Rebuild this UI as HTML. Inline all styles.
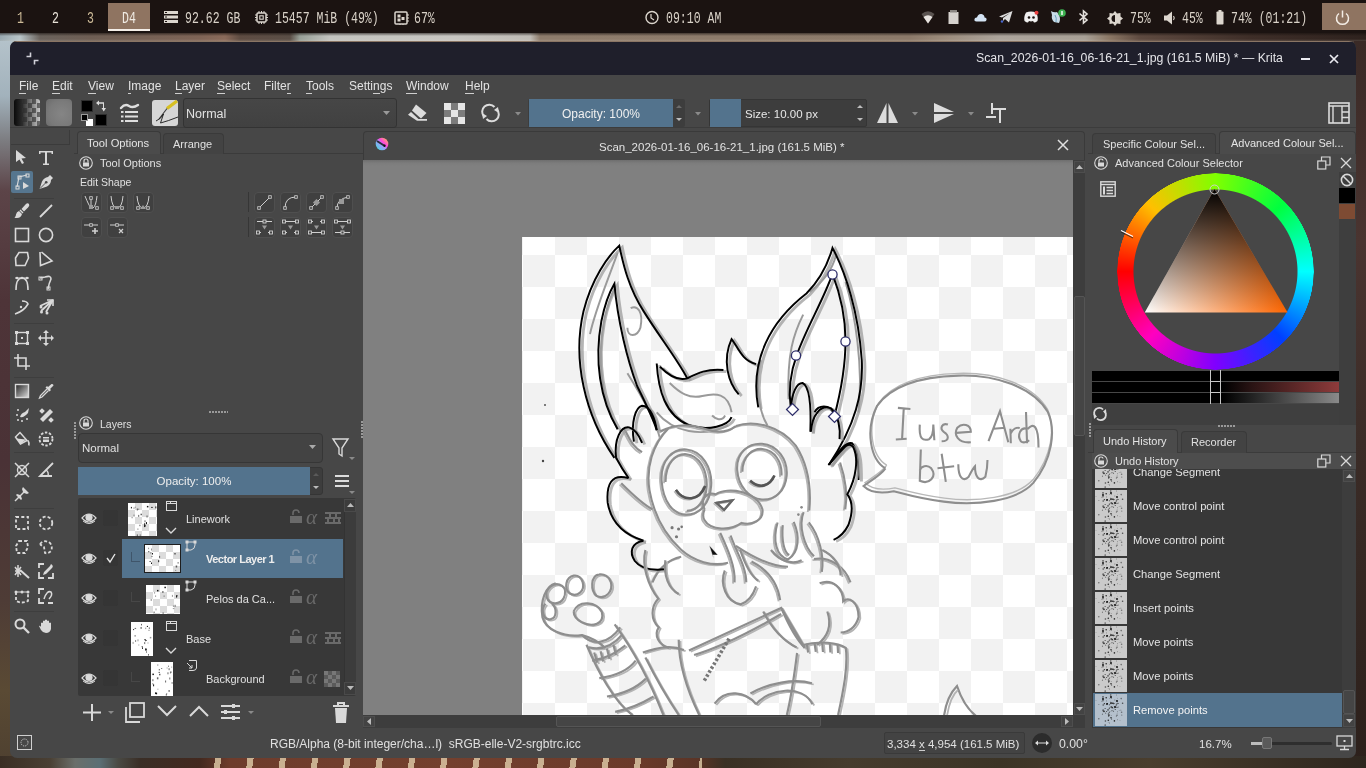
<!DOCTYPE html>
<html><head><meta charset="utf-8"><style>
*{margin:0;padding:0;box-sizing:border-box}
html,body{width:1366px;height:768px;overflow:hidden}
body{position:relative;font-family:"Liberation Sans",sans-serif;background:#2a1f1b;color:#dcdcdc}
.a{position:absolute}
.mono{font-family:"Liberation Mono",monospace}
.tb{position:absolute;top:3px;font-family:"Liberation Mono",monospace;font-size:16px;line-height:33px;color:#d9d2c8;transform-origin:0 50%;transform:scaleX(.72);white-space:nowrap}
.t{position:absolute;white-space:nowrap;will-change:transform;font-size:12px;line-height:14px;color:#dedede}
.menu span{position:absolute;will-change:transform;top:79px;font-size:12px;line-height:14px;color:#e2e2e2}
.menu u{text-decoration:none;border-bottom:1px solid #cfcfcf}
svg{position:absolute;overflow:visible}
</style></head><body>
<!-- wallpaper -->
<div class="a" style="left:0;top:33px;width:1366px;height:10px;background:linear-gradient(180deg,rgba(20,14,12,.6) 0,rgba(20,14,12,0) 3px,rgba(0,0,0,0) 6px,rgba(255,240,220,.15) 8px),linear-gradient(90deg,#98a8b0 0,#b8c4c8 20px,#6a625c 40px,#6e5e54 90px,#7e6456 200px,#8a6a5a 225px,#5e4c42 240px,#5a4e46 290px,#98a098 300px,#c4c4c0 330px,#c8c6c2 455px,#c0bcb6 530px,#8e7c6c 540px,#8c7a6a 910px,#9a8a7a 940px,#aca49c 1000px,#a8a096 1085px,#8a7664 1110px,#5e4a40 1140px,#3e2e28 1250px,#2e221e 1366px)"></div>
<div class="a" style="left:0;top:41px;width:12px;height:727px;background:linear-gradient(180deg,#b4c2ca 0,#a2b2bc 55px,#7c7c80 100px,#5c4448 150px,#4e3438 260px,#4a3236 420px,#4e3c36 560px,#5a4a34 650px,#4e4030 727px)"></div>
<div class="a" style="left:1354px;top:41px;width:12px;height:727px;background:linear-gradient(180deg,#3a2a26 0,#4a3430 200px,#3b2c27 400px,#2c201b 727px)"></div>
<div class="a" style="left:0;top:756px;width:1366px;height:12px;background:linear-gradient(90deg,#3a2e24 0,#4a4034 50px,#6a6e6a 75px,#5a6e74 100px,#4a4a44 118px,#3a2e26 140px,#43291f 200px,#6e3c2c 230px,#74402e 450px,#6a3a2a 640px,#5a3426 700px,#3a3024 725px,#463c2e 850px,#3c3426 1000px,#4a3e2e 1150px,#2e261e 1366px)"></div>
<div class="a" style="left:189px;top:758px;width:513px;height:10px;background:repeating-linear-gradient(98deg,transparent 0,transparent 26px,rgba(225,205,170,.8) 26px,rgba(225,205,170,.8) 32px)"></div>

<!-- top bar -->
<div class="a" style="left:0;top:0;width:1366px;height:33px;background:#1b1311"></div>
<div class="a" style="left:108px;top:3px;width:42px;height:26px;background:#8f7461"></div>
<div class="a" style="left:108px;top:29px;width:42px;height:2px;background:#f4eee8"></div>
<div class="tb" style="left:17px;color:#cdbb98">1</div>
<div class="tb" style="left:52px;color:#e8e2d8">2</div>
<div class="tb" style="left:87px;color:#cdbb98">3</div>
<div class="tb" style="left:122px;color:#f0ebe4">D4</div>
<div class="tb" style="left:185px">92.62 GB</div>
<div class="tb" style="left:275px">15457 MiB (49%)</div>
<div class="tb" style="left:414px">67%</div>
<div class="tb" style="left:666px">09:10 AM</div>
<div class="tb" style="left:1130px">75%</div>
<div class="tb" style="left:1182px">45%</div>
<div class="tb" style="left:1231px">74% (01:21)</div>
<div class="a" style="left:1322px;top:3px;width:44px;height:27px;background:#8f7461"></div>

<!-- window -->
<div class="a" id="win" style="left:10px;top:41px;width:1346px;height:717px;border-radius:7px;background:#474747;overflow:hidden">
  <div class="a" style="left:0;top:0;width:1346px;height:34px;background:#1f1f2b;border-top:1px solid #8a7564"></div>
</div>
<div class="t" style="left:976px;top:51px;font-size:12.3px;color:#e4e4e8">Scan_2026-01-16_06-16-21_1.jpg (161.5 MiB) * — Krita</div>

<!--TOPICONS-->
<svg style="left:164px;top:11px" width="14" height="12" viewBox="0 0 14 12"><rect x="0" y="0" width="14" height="3" fill="#dcd6ce"/><rect x="0" y="4.5" width="14" height="3" fill="#dcd6ce"/><rect x="0" y="9" width="14" height="3" fill="#dcd6ce"/><rect x="1" y="1" width="2" height="1" fill="#1b1311"/><rect x="1" y="5.5" width="2" height="1" fill="#1b1311"/><rect x="1" y="10" width="2" height="1" fill="#1b1311"/></svg>
<svg style="left:255px;top:11px" width="13" height="13" viewBox="0 0 13 13"><rect x="2" y="2" width="9" height="9" rx="1" fill="none" stroke="#dcd6ce" stroke-width="1.5"/><rect x="4.8" y="4.8" width="3.4" height="3.4" fill="none" stroke="#dcd6ce" stroke-width="1.1"/><path d="M4 0 V2 M6.5 0 V2 M9 0 V2 M4 11 V13 M6.5 11 V13 M9 11 V13 M0 4 H2 M0 6.5 H2 M0 9 H2 M11 4 H13 M11 6.5 H13 M11 9 H13" stroke="#dcd6ce" stroke-width="1"/></svg>
<svg style="left:394px;top:11px" width="15" height="14" viewBox="0 0 15 14"><rect x="1" y="1" width="12" height="12" rx="1" fill="none" stroke="#dcd6ce" stroke-width="1.5"/><rect x="3.5" y="3.5" width="3" height="3" fill="#dcd6ce"/><rect x="3.5" y="7.5" width="3" height="3" fill="#dcd6ce"/><rect x="7.5" y="6" width="3" height="3" fill="#dcd6ce"/><path d="M13 4 H15 M13 7 H15 M13 10 H15 M6 13 V14 M9 13 V14" stroke="#dcd6ce" stroke-width="1"/></svg>
<svg style="left:645px;top:10px" width="14" height="15" viewBox="0 0 14 15"><circle cx="7" cy="7.5" r="6" fill="none" stroke="#dcd6ce" stroke-width="1.4"/><path d="M6 4 V8 L9 10" fill="none" stroke="#dcd6ce" stroke-width="1.2"/></svg>
<svg style="left:921px;top:10px" width="14" height="14" viewBox="0 0 14 14"><path d="M7 13.5 L0.5 4 Q7 -1.5 13.5 4 Z" fill="#5a5350"/><path d="M7 13.5 L2.5 7 Q7 3.5 11.5 7 Z" fill="#e8e4e0"/></svg>
<svg style="left:948px;top:10px" width="11" height="14" viewBox="0 0 11 14"><rect x="0.5" y="2" width="10" height="12" fill="#d6d2ce"/><rect x="2" y="0" width="7" height="2.5" fill="#8a8682"/></svg>
<svg style="left:974px;top:13px" width="13" height="9" viewBox="0 0 13 9"><path d="M2.5 8.5 Q0 8.5 0.5 6 Q1 4 3 4.5 Q4 0.5 7.5 1 Q10.5 1.5 10.5 4.5 Q13 4.5 12.5 7 Q12 8.5 10.5 8.5 Z" fill="#d4e4f4"/></svg>
<svg style="left:999px;top:11px" width="14" height="12" viewBox="0 0 14 12"><path d="M0 5.5 L13.5 0 L10 11.5 L6 8 L4 10 L4 7 L11 2 L3 6.5 Z" fill="#dcdcdc"/><circle cx="3" cy="10.5" r="1.2" fill="#4a6ad0"/></svg>
<svg style="left:1024px;top:11px" width="15" height="12" viewBox="0 0 15 12"><path d="M2 1.5 Q7 -0.5 12 1.5 Q14.5 6 13.5 10 Q11.5 11.5 10 11.5 L9 10 Q7 10.8 5 10 L4 11.5 Q2.5 11.5 0.5 10 Q-0.5 6 2 1.5Z" fill="#f0f0f0"/><circle cx="5" cy="6.5" r="1.3" fill="#1b1311"/><circle cx="9.5" cy="6.5" r="1.3" fill="#1b1311"/><circle cx="12.5" cy="1.8" r="2" fill="#e84040"/></svg>
<svg style="left:1051px;top:9px" width="15" height="15" viewBox="0 0 15 15"><path d="M0 2 Q3 4 6 3 L8 6 Q10 10 8 14 L3 13 Q0 10 1 6Z" fill="#c8dce8"/><path d="M4 6 Q6 9 5 13" stroke="#6aa0c0" stroke-width="1" fill="none"/><circle cx="11" cy="4" r="3.8" fill="#3cb050"/><path d="M11 2 V6" stroke="#fff" stroke-width="1.4"/></svg>
<svg style="left:1078px;top:10px" width="11" height="14" viewBox="0 0 11 14"><path d="M1.5 3.5 L9 10 L5.5 13 V1 L9 4 L1.5 10.5" fill="none" stroke="#e4e0dc" stroke-width="1.6"/></svg>
<svg style="left:1107px;top:11px" width="16" height="15" viewBox="0 0 16 15"><path d="M8 0 L10 2.5 L13.5 2 L13.5 5.5 L16 7.5 L13.5 9.5 L13.5 13 L10 12.5 L8 15 L6 12.5 L2.5 13 L2.5 9.5 L0 7.5 L2.5 5.5 L2.5 2 L6 2.5Z" fill="#dcd6ce"/><path d="M8 4 A3.5 3.5 0 0 0 8 11Z" fill="#1b1311"/></svg>
<svg style="left:1164px;top:11px" width="11" height="14" viewBox="0 0 11 14"><path d="M0 4.5 H3 L8 0.5 V13.5 L3 9.5 H0Z" fill="#dcd6ce"/><path d="M9.5 5 Q11 7 9.5 9" stroke="#dcd6ce" stroke-width="1.2" fill="none"/></svg>
<svg style="left:1216px;top:10px" width="8" height="15" viewBox="0 0 8 15"><rect x="2.5" y="0" width="3" height="2" fill="#dcd6ce"/><rect x="0.5" y="1.5" width="7" height="13" rx="0.8" fill="#dcd6ce"/></svg>
<svg style="left:1335px;top:10px" width="15" height="15" viewBox="0 0 15 15"><path d="M4 3.5 A6 6 0 1 0 11 3.5" fill="none" stroke="#f4ede6" stroke-width="1.5"/><path d="M7.5 0.5 V7.5" stroke="#f4ede6" stroke-width="1.5"/></svg>
<svg style="left:26px;top:52px" width="13" height="13" viewBox="0 0 13 13"><path d="M0.5 4.5 H4.5 V0.5 M12.5 8.5 H8.5 V12.5" fill="none" stroke="#d0d0d8" stroke-width="1.6"/></svg>
<div class="a" style="left:1301px;top:58px;width:9px;height:2px;background:#eaeaf0"></div>
<svg style="left:1329px;top:54px" width="10" height="10" viewBox="0 0 10 10"><path d="M1 1 L9 9 M9 1 L1 9" stroke="#eaeaf0" stroke-width="1.7"/></svg>
<!--/TOPICONS-->
<!-- menu -->
<div class="menu">
<span style="left:19px"><u>F</u>ile</span>
<span style="left:52px"><u>E</u>dit</span>
<span style="left:88px"><u>V</u>iew</span>
<span style="left:128px"><u>I</u>mage</span>
<span style="left:175px"><u>L</u>ayer</span>
<span style="left:217px"><u>S</u>elect</span>
<span style="left:264px">Filte<u>r</u></span>
<span style="left:306px"><u>T</u>ools</span>
<span style="left:349px">Setti<u>n</u>gs</span>
<span style="left:406px"><u>W</u>indow</span>
<span style="left:465px"><u>H</u>elp</span>
</div>


<!-- toolbar -->
<div class="a" style="left:10px;top:127px;width:1346px;height:1px;background:#3c3c3c"></div>
<div class="a" style="left:14px;top:99px;width:26px;height:27px;border-radius:3px;background:linear-gradient(90deg,#0a0a0a 0,#2a2a2a 30%,rgba(60,60,60,0) 100%),repeating-conic-gradient(#c8c8c8 0 25%,#6a6a6a 0 50%) 0 0/9px 9px"></div>
<div class="a" style="left:46px;top:99px;width:26px;height:27px;border-radius:4px;background:radial-gradient(circle at 60% 55%,#858585 0,#7a7a7a 60%,#6a6a6a 100%)"></div>
<div class="a" style="left:81px;top:100px;width:12px;height:12px;background:#000;border:1px solid #2e2e2e"></div>
<div class="a" style="left:95px;top:114px;width:12px;height:12px;background:#000;border:1px solid #2e2e2e"></div>
<div class="a" style="left:86px;top:119px;width:7px;height:7px;background:#fff"></div>
<div class="a" style="left:81px;top:114px;width:7px;height:7px;background:#000;border:1px solid #9a9a9a"></div>
<svg style="left:95px;top:100px" width="13" height="13" viewBox="0 0 13 13"><path d="M1 3 L4 0.5 L4 2.2 L9 2.2 L9 8 L11 8 L8.8 11.5 L6.5 8 L8 8 L8 3.8 L4 3.8 L4 5.5 Z" fill="#dcdcdc"/></svg>
<svg style="left:120px;top:103px" width="19" height="20" viewBox="0 0 19 20"><path d="M1 5 Q5 0.5 9 3 T18 2" stroke="#dedede" stroke-width="2.4" fill="none" stroke-linecap="round"/><rect x="1" y="8" width="2.5" height="2" fill="#dedede"/><rect x="5" y="8" width="13" height="2" fill="#dedede"/><rect x="1" y="12.5" width="2.5" height="2" fill="#dedede"/><rect x="5" y="12.5" width="13" height="2" fill="#dedede"/><rect x="1" y="17" width="2.5" height="2" fill="#dedede"/><rect x="5" y="17" width="13" height="2" fill="#dedede"/></svg>
<div class="a" style="left:152px;top:100px;width:26px;height:26px;border-radius:3px;background:#d6d6d6"></div>
<svg style="left:152px;top:100px" width="26" height="26" viewBox="0 0 26 26"><path d="M25 1 L15 8.5" stroke="#d6bf22" stroke-width="3.4" fill="none"/><path d="M15 8.5 L7 19" stroke="#3a3a3a" stroke-width="1.1"/><path d="M4 21 Q9 19 11.5 14 L8.5 23 Q16 21 26 17" stroke="#161616" stroke-width="0.9" fill="none"/></svg>
<div class="a" style="left:183px;top:98px;width:214px;height:30px;border-radius:3px;background:linear-gradient(#464646,#414141);border:1px solid #333"></div>
<div class="t" style="left:186px;top:107px;font-size:12.5px;color:#e2e2e2">Normal</div>
<svg style="left:383px;top:111px" width="8" height="5"><path d="M0 0 L7 0 L3.5 4 Z" fill="#9a9a9a"/></svg>
<svg style="left:407px;top:103px" width="21" height="19" viewBox="0 0 21 19"><path d="M9 1.5 L19.5 10 L14 15.5 L5 7.5 Z" fill="#dcdcdc"/><path d="M4 9 L11.5 16 L20 16 L20 17.8 L10 17.8 L1 11.8 Z" fill="#dcdcdc"/></svg>
<div class="a" style="left:444px;top:103px;width:21px;height:21px;background:repeating-conic-gradient(#7c7c7c 0 25%,#e6e6e6 0 50%) 0 0/14px 14px"></div>
<svg style="left:481px;top:104px" width="19" height="18" viewBox="0 0 19 18"><path d="M3 12.5 A7 7 0 0 1 13.5 3" stroke="#dcdcdc" stroke-width="2" fill="none"/><path d="M16 5.5 A7 7 0 0 1 5.5 15" stroke="#dcdcdc" stroke-width="2" fill="none"/><path d="M1 9 L6 12 L2 15 Z" fill="#dcdcdc"/><path d="M18 9 L13 6 L17 3 Z" fill="#dcdcdc"/></svg>
<svg style="left:515px;top:112px" width="6" height="4"><path d="M0 0 L6 0 L3 3.5Z" fill="#8a8a8a"/></svg>
<div class="a" style="left:528px;top:99px;width:157px;height:28px;border-radius:2px;background:#3d3d3d"></div>
<div class="a" style="left:529px;top:99px;width:144px;height:28px;background:#53738d"></div>
<div class="t" style="left:529px;top:107px;width:144px;text-align:center;font-size:12px;color:#f0f0f0">Opacity: 100%</div>
<svg style="left:676px;top:104px" width="6" height="20"><path d="M0 4 L6 4 L3 1Z" fill="#6a6a6a"/><path d="M0 14 L6 14 L3 17Z" fill="#bdbdbd"/></svg>
<svg style="left:695px;top:112px" width="6" height="4"><path d="M0 0 L6 0 L3 3.5Z" fill="#8a8a8a"/></svg>
<div class="a" style="left:709px;top:99px;width:158px;height:28px;border-radius:2px;background:#3d3d3d;border:1px solid #353535"></div>
<div class="a" style="left:710px;top:99px;width:31px;height:28px;background:#53738d"></div>
<div class="t" style="left:745px;top:107px;font-size:11.5px;color:#e8e8e8">Size: 10.00 px</div>
<svg style="left:857px;top:104px" width="6" height="20"><path d="M0 4 L6 4 L3 1Z" fill="#bdbdbd"/><path d="M0 14 L6 14 L3 17Z" fill="#bdbdbd"/></svg>
<svg style="left:877px;top:103px" width="21" height="20" viewBox="0 0 21 20"><path d="M9.5 0 L9.5 20 L0 20 Z" fill="#dcdcdc"/><path d="M11.5 0 L11.5 20 L21 20 Z" fill="#dcdcdc"/></svg>
<svg style="left:912px;top:112px" width="6" height="4"><path d="M0 0 L6 0 L3 3.5Z" fill="#8a8a8a"/></svg>
<svg style="left:934px;top:103px" width="20" height="20" viewBox="0 0 20 20"><path d="M0 0 L20 9 L0 9 Z" fill="#dcdcdc"/><path d="M0 11 L20 11 L0 20 Z" fill="#dcdcdc"/></svg>
<svg style="left:968px;top:112px" width="6" height="4"><path d="M0 0 L6 0 L3 3.5Z" fill="#8a8a8a"/></svg>
<svg style="left:986px;top:103px" width="20" height="20" viewBox="0 0 20 20"><path d="M6 0 V11 M0 14 H10 M6 6 H20 M14 6 V20" stroke="#dcdcdc" stroke-width="2" fill="none"/></svg>
<svg style="left:1328px;top:102px" width="22" height="22" viewBox="0 0 22 22"><rect x="1" y="1" width="20" height="20" stroke="#dcdcdc" stroke-width="1.6" fill="none"/><path d="M1 4 H21 M5 4 V21 M14 4 V21 M14 10 H21 M14 15.5 H21" stroke="#dcdcdc" stroke-width="1.4"/></svg>


<!--DOCKS-->
<div class="a" style="left:11px;top:130px;width:59px;height:15px;border:1px solid #3b3b3b;border-top:none;border-left:none"></div>
<div class="a" style="left:11px;top:171px;width:22px;height:22px;border-radius:2px;background:#56768f"></div>
<div class="a" style="left:14px;top:198px;width:40px;height:1px;background:#3e3e3e"></div>
<div class="a" style="left:14px;top:323px;width:40px;height:1px;background:#3e3e3e"></div>
<div class="a" style="left:14px;top:377px;width:40px;height:1px;background:#3e3e3e"></div>
<div class="a" style="left:14px;top:452px;width:40px;height:1px;background:#3e3e3e"></div>
<div class="a" style="left:14px;top:508px;width:40px;height:1px;background:#3e3e3e"></div>
<div class="a" style="left:14px;top:611px;width:40px;height:1px;background:#3e3e3e"></div>
<svg style="left:14px;top:150px" width="16" height="16" viewBox="0 0 16 16"><path d="M2 0 L12 8 L7.5 8.5 L10 13 L8 14 L5.5 9.5 L2 12 Z" fill="#d9d9d9"/></svg>

<svg style="left:38px;top:150px" width="16" height="16" viewBox="0 0 16 16"><path d="M1 1 H15 V4 H13.5 V2.6 H9 V13.6 H11 V15 H5 V13.6 H7 V2.6 H2.5 V4 H1 Z" fill="#d9d9d9"/></svg>

<svg style="left:14px;top:174px" width="16" height="16" viewBox="0 0 16 16"><path d="M3 13 L5 3 L13 1" stroke="#d9d9d9" fill="none" stroke-width="1.2"/><rect x="2" y="12" width="3" height="3" stroke="#d9d9d9" fill="none"/><rect x="4" y="2" width="3" height="3" stroke="#d9d9d9" fill="none"/><rect x="12" y="0" width="3" height="3" stroke="#d9d9d9" fill="none"/><path d="M9 8 L15 12 L9 15 Z" fill="#d9d9d9"/></svg>

<svg style="left:38px;top:174px" width="16" height="16" viewBox="0 0 16 16"><path d="M12 1 L15 4 L13 6 Q13 10 9 12.5 L1.5 15 L4 7.5 Q6 3.5 10 3Z" fill="#d9d9d9"/><circle cx="8.2" cy="8.2" r="1.3" fill="#474747"/><path d="M2 14.5 L7.5 9" stroke="#474747" stroke-width="0.9"/></svg>

<svg style="left:14px;top:203px" width="16" height="16" viewBox="0 0 16 16"><path d="M11.5 1.5 Q13.5 -0.5 15 1 Q16 2.5 14 4.5 L10 8.5 L7.5 6Z" fill="#d9d9d9"/><path d="M6.5 6.5 L9.5 9.5 L8.5 10.5 L5.5 7.5Z" fill="#d9d9d9"/><path d="M5 8 L8 11 Q7 15 3 15 Q1 15 0.5 14.5 Q2 13.5 2 11.5 Q2.5 8.5 5 8Z" fill="#d9d9d9"/></svg>

<svg style="left:38px;top:203px" width="16" height="16" viewBox="0 0 16 16"><path d="M2 14 L14 2" stroke="#d9d9d9" fill="none" stroke-width="1.8"/></svg>

<svg style="left:14px;top:227px" width="16" height="16" viewBox="0 0 16 16"><rect x="1.5" y="1.5" width="13" height="13" stroke="#d9d9d9" fill="none" stroke-width="1.6"/></svg>

<svg style="left:38px;top:227px" width="16" height="16" viewBox="0 0 16 16"><circle cx="8" cy="8" r="6.6" stroke="#d9d9d9" fill="none" stroke-width="1.6"/></svg>

<svg style="left:14px;top:251px" width="16" height="16" viewBox="0 0 16 16"><path d="M5 1.5 L13.5 1.5 L14.5 7 L11 14.5 L2 14.5 L1.5 7 Z" stroke="#d9d9d9" fill="none" stroke-width="1.6"/></svg>

<svg style="left:38px;top:251px" width="16" height="16" viewBox="0 0 16 16"><path d="M2 1 L2.5 14.5 L14 10 L3.5 1" stroke="#d9d9d9" fill="none" stroke-width="1.6"/></svg>

<svg style="left:14px;top:275px" width="16" height="16" viewBox="0 0 16 16"><path d="M2 15 Q2 3 8 3 Q14 3 14 15" stroke="#d9d9d9" fill="none" stroke-width="1.6"/><path d="M1 3 H15" stroke="#d9d9d9" fill="none" stroke-width="1"/><circle cx="3" cy="3" r="1.3" fill="#d9d9d9"/><circle cx="13" cy="3" r="1.3" fill="#d9d9d9"/><circle cx="8" cy="3" r="1.3" fill="#d9d9d9"/></svg>

<svg style="left:38px;top:275px" width="16" height="16" viewBox="0 0 16 16"><path d="M2 3 L7 2 Q13 0 13 4 Q11 8 10 14" stroke="#d9d9d9" fill="none" stroke-width="1.6"/><rect x="1" y="2" width="3" height="3" stroke="#d9d9d9" fill="none"/><rect x="9" y="12" width="3" height="3" stroke="#d9d9d9" fill="none"/></svg>

<svg style="left:14px;top:299px" width="16" height="16" viewBox="0 0 16 16"><path d="M1 15 Q10 12 14 5 Q13 2 8 2" stroke="#d9d9d9" fill="none" stroke-width="1.6"/><circle cx="7" cy="8" r="1.2" fill="#d9d9d9"/></svg>

<svg style="left:38px;top:299px" width="16" height="16" viewBox="0 0 16 16"><path d="M15 1 L3 12 M15 1 L8 13 M15 1 L2 7" stroke="#d9d9d9" fill="none" stroke-width="1.8"/><circle cx="3" cy="8" r="1.5" fill="#d9d9d9"/><circle cx="3.5" cy="13" r="1.5" fill="#d9d9d9"/><circle cx="9" cy="14" r="1.5" fill="#d9d9d9"/><path d="M9 1 L15 1 L15 7" stroke="#d9d9d9" fill="none" stroke-width="1.6"/></svg>

<svg style="left:14px;top:330px" width="16" height="16" viewBox="0 0 16 16"><rect x="2.5" y="2.5" width="11" height="11" stroke="#d9d9d9" fill="none" stroke-width="1.4"/><rect x="1" y="1" width="3" height="3" fill="#d9d9d9"/><rect x="12" y="1" width="3" height="3" fill="#d9d9d9"/><rect x="1" y="12" width="3" height="3" fill="#d9d9d9"/><rect x="12" y="12" width="3" height="3" fill="#d9d9d9"/><rect x="7" y="7" width="2" height="2" fill="#d9d9d9"/></svg>

<svg style="left:38px;top:330px" width="16" height="16" viewBox="0 0 16 16"><path d="M8 1 V15 M1 8 H15" stroke="#d9d9d9" fill="none" stroke-width="1.6"/><path d="M8 0 L5 3 H11Z M8 16 L5 13 H11Z M0 8 L3 5 V11Z M16 8 L13 5 V11Z" fill="#d9d9d9"/></svg>

<svg style="left:14px;top:354px" width="16" height="16" viewBox="0 0 16 16"><path d="M4 0 V12 H16 M0 4 H12 V16" stroke="#d9d9d9" fill="none" stroke-width="1.6"/></svg>

<svg style="left:14px;top:383px" width="16" height="16" viewBox="0 0 16 16"><defs><linearGradient id="g1" x1="0" y1="0" x2="1" y2="1"><stop offset="0" stop-color="#222"/><stop offset="1" stop-color="#ddd"/></linearGradient></defs><rect x="1.5" y="1.5" width="13" height="13" fill="url(#g1)" stroke="#d9d9d9" stroke-width="1.4"/></svg>

<svg style="left:38px;top:383px" width="16" height="16" viewBox="0 0 16 16"><path d="M10 4 L13.5 1 Q15.5 0.5 15.5 2.5 L12 6 L13 7 L11.5 8.5 L7.5 4.5 L9 3Z" fill="#d9d9d9"/><path d="M9 6 L2.5 12.5 L1.5 15 L4 14 L10.5 7.5" stroke="#d9d9d9" fill="none" stroke-width="1.3"/></svg>

<svg style="left:14px;top:407px" width="16" height="16" viewBox="0 0 16 16"><circle cx="3" cy="8" r="1" fill="#d9d9d9"/><circle cx="8" cy="14" r="1" fill="#d9d9d9"/><circle cx="4" cy="3" r="1" fill="#d9d9d9"/><circle cx="13" cy="12" r="1" fill="#d9d9d9"/><circle cx="4" cy="13" r="1" fill="#d9d9d9"/><path d="M6 10 Q7 6 11 5 L15 1 L14 6 Q10 11 6 10Z" fill="#d9d9d9"/></svg>

<svg style="left:38px;top:407px" width="16" height="16" viewBox="0 0 16 16"><path d="M2 12 L12 2 L15 5 L5 15Z" fill="#d9d9d9"/><rect x="2" y="2" width="4" height="4" fill="#d9d9d9" transform="rotate(45 4 4)"/><rect x="11" y="11" width="4" height="4" fill="#d9d9d9" transform="rotate(45 13 13)"/></svg>

<svg style="left:14px;top:431px" width="16" height="16" viewBox="0 0 16 16"><path d="M6 1.5 L1.5 6 L6.5 13 L13 9.5 Z" fill="none" stroke="#d9d9d9" fill="none" stroke-width="1.5"/><path d="M2.5 7.5 L12 8.5 L6.5 13Z" fill="#d9d9d9"/><path d="M14 9.5 Q15.5 12 14.8 14.5" stroke="#d9d9d9" fill="none" stroke-width="1.6"/></svg>

<svg style="left:38px;top:431px" width="16" height="16" viewBox="0 0 16 16"><circle cx="8" cy="8" r="6.5" stroke="#d9d9d9" fill="none" stroke-width="1.8" stroke-dasharray="2.5 1.6"/><path d="M5 6 H11 V11 H5Z" fill="#d9d9d9"/><path d="M4 8 H12" stroke="#474747" stroke-width="1"/></svg>

<svg style="left:14px;top:462px" width="16" height="16" viewBox="0 0 16 16"><path d="M1 1 L15 15 M15 1 L1 15" stroke="#d9d9d9" fill="none" stroke-width="1.5"/><circle cx="8" cy="8" r="4.5" stroke="#d9d9d9" fill="none" stroke-width="1.4"/></svg>

<svg style="left:38px;top:462px" width="16" height="16" viewBox="0 0 16 16"><path d="M15 1 L2 14 H14" stroke="#d9d9d9" fill="none" stroke-width="1.8"/><path d="M8 8 Q11 10 10 14" stroke="#d9d9d9" fill="none" stroke-width="1.4"/></svg>

<svg style="left:14px;top:486px" width="16" height="16" viewBox="0 0 16 16"><path d="M9 1 L15 7 L13 8 L10 7 L7 10 L8 13 L7 14 L2 9 L3 8 L6 9 L9 6 L8 3Z" fill="#d9d9d9"/><path d="M5 11 L1 15" stroke="#d9d9d9" fill="none" stroke-width="1.4"/></svg>

<svg style="left:14px;top:515px" width="16" height="16" viewBox="0 0 16 16"><rect x="2" y="2" width="12" height="12" stroke="#d9d9d9" fill="none" stroke-width="1.8" stroke-dasharray="3 2.3"/></svg>

<svg style="left:38px;top:515px" width="16" height="16" viewBox="0 0 16 16"><circle cx="8" cy="8" r="6.3" stroke="#d9d9d9" fill="none" stroke-width="1.8" stroke-dasharray="3 2.1"/></svg>

<svg style="left:14px;top:539px" width="16" height="16" viewBox="0 0 16 16"><path d="M5 2 L13 2 L14 8 L11 14 L3 14 L2 7 Z" stroke="#d9d9d9" fill="none" stroke-width="1.8" stroke-dasharray="3 2.1"/></svg>

<svg style="left:38px;top:539px" width="16" height="16" viewBox="0 0 16 16"><path d="M2 5 Q6 0 12 4 Q15 8 13 12 Q10 15 7 14 L6 8 Q4 7 2 5" stroke="#d9d9d9" fill="none" stroke-width="1.8" stroke-dasharray="3 2"/></svg>

<svg style="left:14px;top:563px" width="16" height="16" viewBox="0 0 16 16"><path d="M1 8 L7 8 M4 2 L4 14 M1 4 L7 12 M7 4 L1 12" stroke="#d9d9d9" fill="none" stroke-width="1.5"/><path d="M6 7 L15 15" stroke="#d9d9d9" fill="none" stroke-width="2"/></svg>

<svg style="left:38px;top:563px" width="16" height="16" viewBox="0 0 16 16"><path d="M1 5 V1 H6 M1 9 V15 H6 M10 15 H15 V10" stroke="#d9d9d9" fill="none" stroke-width="1.8"/><path d="M13 1 Q16 3 14 5 L8 11 L5 12 L6 9 L12 3" fill="#d9d9d9"/></svg>

<svg style="left:14px;top:588px" width="16" height="16" viewBox="0 0 16 16"><path d="M2 4 V13 Q8 16 14 13 V4" stroke="#d9d9d9" fill="none" stroke-width="1.8" stroke-dasharray="3 2"/><path d="M1 4 H15" stroke="#d9d9d9" fill="none" stroke-width="1"/><circle cx="2" cy="4" r="1.5" fill="#d9d9d9"/><circle cx="14" cy="4" r="1.5" fill="#d9d9d9"/><circle cx="8" cy="4" r="1.5" fill="#d9d9d9"/></svg>

<svg style="left:38px;top:588px" width="16" height="16" viewBox="0 0 16 16"><path d="M1 6 V1 H6 M1 10 V15 H6 M10 15 H15" stroke="#d9d9d9" fill="none" stroke-width="1.8"/><path d="M6 11 Q9 2 13 4 Q15 7 11 11" stroke="#d9d9d9" fill="none" stroke-width="1.5"/></svg>

<svg style="left:14px;top:618px" width="16" height="16" viewBox="0 0 16 16"><circle cx="6" cy="6" r="4.5" stroke="#d9d9d9" fill="none" stroke-width="2"/><path d="M9.5 9.5 L15 15" stroke="#d9d9d9" fill="none" stroke-width="2.4"/></svg>

<svg style="left:38px;top:618px" width="16" height="16" viewBox="0 0 16 16"><path d="M3 9 V5 Q4 4 5 5 V3 Q6 2 7 3 V2 Q8 1 9 2 V3 Q10 2 11 3 V5 Q12 4 13 5 V11 Q12 15 8 15 Q5 15 3 12 L1 8 Q2 7 3 9Z" fill="#d9d9d9"/></svg>

<div class="a" style="left:17px;top:735px;width:15px;height:15px;border:1px solid #d0d0d0"></div>
<svg style="left:19px;top:737px" width="11" height="11" viewBox="0 0 11 11"><circle cx="5.5" cy="5.5" r="3.5" stroke="#d9d9d9" fill="none" stroke-width="1" stroke-dasharray="1 1"/></svg>

<div class="a" style="left:74px;top:153px;width:289px;height:1px;background:#3b3b3b"></div>
<div class="a" style="left:77px;top:131px;width:84px;height:23px;border:1px solid #3a3a3a;border-bottom:none;border-radius:4px 4px 0 0;background:#4b4b4b"></div>
<div class="t" style="left:87px;top:136px;font-size:11.2px;color:#e4e4e4">Tool Options</div>
<div class="a" style="left:163px;top:133px;width:61px;height:21px;border:1px solid #3a3a3a;border-bottom:none;border-radius:4px 4px 0 0;background:#434343"></div>
<div class="t" style="left:173px;top:137px;font-size:11px;color:#e0e0e0">Arrange</div>
<svg style="left:79px;top:156px" width="14" height="14" viewBox="0 0 14 14"><circle cx="7" cy="7" r="6.3" stroke="#d9d9d9" fill="none" stroke-width="1.1"/><rect x="4" y="6.5" width="6" height="4" fill="#d9d9d9"/><path d="M5 6.5 V5 Q5 3 7 3 Q9 3 9 5 V6.5" stroke="#d9d9d9" fill="none" stroke-width="1.2"/></svg>

<div class="t" style="left:100px;top:156px;font-size:11px;color:#e0e0e0">Tool Options</div>
<div class="t" style="left:80px;top:175px;font-size:10.5px;color:#e0e0e0">Edit Shape</div>
<div class="a" style="left:81px;top:192px;width:21px;height:21px;border-radius:4px;background:#404040;border:1px solid #4f4f4f"></div><svg style="left:83px;top:194px" width="17" height="17" viewBox="0 0 17 17"><path d="M2 2 Q6 12 8 14 M14 2 Q13 12 10 14" stroke="#cfcfcf" fill="none" stroke-width="1"/><path d="M8 4 V13" stroke="#cfcfcf" fill="none" stroke-width="1"/><rect x="6.7" y="2.7" width="2.6" height="2.6" fill="#474747" stroke="#cfcfcf" stroke-width="0.8"/><rect x="6" y="11" width="4" height="4" fill="#9a9a9a"/><rect x="12.7" y="12.7" width="2.6" height="2.6" fill="#474747" stroke="#cfcfcf" stroke-width="0.8"/></svg>

<div class="a" style="left:107px;top:192px;width:21px;height:21px;border-radius:4px;background:#404040;border:1px solid #4f4f4f"></div><svg style="left:109px;top:194px" width="17" height="17" viewBox="0 0 17 17"><path d="M2 2 Q3 14 8 14 Q13 14 14 2" stroke="#cfcfcf" fill="none" stroke-width="1"/><rect x="1.7" y="12.7" width="2.6" height="2.6" fill="#474747" stroke="#cfcfcf" stroke-width="0.8"/><rect x="11.7" y="12.7" width="2.6" height="2.6" fill="#474747" stroke="#cfcfcf" stroke-width="0.8"/><rect x="6" y="12" width="4" height="3" fill="#9a9a9a"/></svg>

<div class="a" style="left:133px;top:192px;width:21px;height:21px;border-radius:4px;background:#404040;border:1px solid #4f4f4f"></div><svg style="left:135px;top:194px" width="17" height="17" viewBox="0 0 17 17"><path d="M2 2 Q3 14 8 14 Q13 14 14 2" stroke="#cfcfcf" fill="none" stroke-width="1"/><rect x="1.7" y="12.7" width="2.6" height="2.6" fill="#474747" stroke="#cfcfcf" stroke-width="0.8"/><rect x="11.7" y="12.7" width="2.6" height="2.6" fill="#474747" stroke="#cfcfcf" stroke-width="0.8"/><path d="M8 11 L11 15 H5Z" fill="#9a9a9a"/></svg>

<div class="a" style="left:81px;top:217px;width:21px;height:21px;border-radius:4px;background:#404040;border:1px solid #4f4f4f"></div><svg style="left:83px;top:219px" width="17" height="17" viewBox="0 0 17 17"><path d="M1 6 H15" stroke="#cfcfcf" fill="none" stroke-width="1"/><rect x="6.7" y="4.7" width="2.6" height="2.6" fill="#474747" stroke="#cfcfcf" stroke-width="0.8"/><path d="M12 9 V15 M9 12 H15" stroke="#cfcfcf" stroke-width="1.6"/></svg>

<div class="a" style="left:107px;top:217px;width:21px;height:21px;border-radius:4px;background:#404040;border:1px solid #4f4f4f"></div><svg style="left:109px;top:219px" width="17" height="17" viewBox="0 0 17 17"><path d="M1 6 H15" stroke="#cfcfcf" fill="none" stroke-width="1"/><rect x="6.7" y="4.7" width="2.6" height="2.6" fill="#474747" stroke="#cfcfcf" stroke-width="0.8"/><path d="M10 10 L14 14 M14 10 L10 14" stroke="#cfcfcf" stroke-width="1.2"/></svg>

<div class="a" style="left:248px;top:192px;width:1px;height:20px;background:#363636"></div>
<div class="a" style="left:248px;top:217px;width:1px;height:20px;background:#363636"></div>
<div class="a" style="left:254px;top:192px;width:21px;height:21px;border-radius:4px;background:#404040;border:1px solid #4f4f4f"></div><svg style="left:256px;top:194px" width="17" height="17" viewBox="0 0 17 17"><path d="M3 14 L14 3" stroke="#cfcfcf" fill="none" stroke-width="1"/><rect x="1.7" y="12.7" width="2.6" height="2.6" fill="#474747" stroke="#cfcfcf" stroke-width="0.8"/><rect x="12.7" y="1.7" width="2.6" height="2.6" fill="#474747" stroke="#cfcfcf" stroke-width="0.8"/></svg>

<div class="a" style="left:280px;top:192px;width:21px;height:21px;border-radius:4px;background:#404040;border:1px solid #4f4f4f"></div><svg style="left:282px;top:194px" width="17" height="17" viewBox="0 0 17 17"><path d="M3 14 Q3 3 14 3" stroke="#cfcfcf" fill="none" stroke-width="1"/><rect x="1.7" y="12.7" width="2.6" height="2.6" fill="#474747" stroke="#cfcfcf" stroke-width="0.8"/><rect x="12.7" y="1.7" width="2.6" height="2.6" fill="#474747" stroke="#cfcfcf" stroke-width="0.8"/></svg>

<div class="a" style="left:306px;top:192px;width:21px;height:21px;border-radius:4px;background:#404040;border:1px solid #4f4f4f"></div><svg style="left:308px;top:194px" width="17" height="17" viewBox="0 0 17 17"><path d="M3 14 L14 3" stroke="#cfcfcf" fill="none" stroke-width="1"/><rect x="1.7" y="12.7" width="2.6" height="2.6" fill="#474747" stroke="#cfcfcf" stroke-width="0.8"/><rect x="12.7" y="1.7" width="2.6" height="2.6" fill="#474747" stroke="#cfcfcf" stroke-width="0.8"/><rect x="6" y="6" width="5" height="5" fill="#9a9a9a" transform="rotate(45 8.5 8.5)"/></svg>

<div class="a" style="left:332px;top:192px;width:21px;height:21px;border-radius:4px;background:#404040;border:1px solid #4f4f4f"></div><svg style="left:334px;top:194px" width="17" height="17" viewBox="0 0 17 17"><path d="M3 14 Q3 5 14 3" stroke="#cfcfcf" fill="none" stroke-width="1"/><rect x="1.7" y="12.7" width="2.6" height="2.6" fill="#474747" stroke="#cfcfcf" stroke-width="0.8"/><rect x="12.7" y="1.7" width="2.6" height="2.6" fill="#474747" stroke="#cfcfcf" stroke-width="0.8"/><rect x="5" y="5" width="5" height="5" fill="#9a9a9a"/></svg>

<div class="a" style="left:254px;top:217px;width:21px;height:21px;border-radius:4px;background:#404040;border:1px solid #4f4f4f"></div><svg style="left:256px;top:219px" width="17" height="17" viewBox="0 0 17 17"><path d="M1 2.5 H16" stroke="#cfcfcf" fill="none" stroke-width="1"/><rect x="7.0" y="1.0" width="3" height="3" fill="#474747" stroke="#d0d0d0" stroke-width="0.9"/><path d="M2 13.5 H5 M12 13.5 H15" stroke="#cfcfcf" fill="none" stroke-width="1"/><rect x="0.5" y="12.0" width="3" height="3" fill="#474747" stroke="#d0d0d0" stroke-width="0.9"/><rect x="13.5" y="12.0" width="3" height="3" fill="#474747" stroke="#d0d0d0" stroke-width="0.9"/><path d="M6 6.5 H11 L8.5 10.5Z" fill="#9a9a9a"/></svg>

<div class="a" style="left:280px;top:217px;width:21px;height:21px;border-radius:4px;background:#404040;border:1px solid #4f4f4f"></div><svg style="left:282px;top:219px" width="17" height="17" viewBox="0 0 17 17"><path d="M2 2.5 H15" stroke="#cfcfcf" fill="none" stroke-width="1"/><rect x="0.5" y="1.0" width="3" height="3" fill="#474747" stroke="#d0d0d0" stroke-width="0.9"/><rect x="13.5" y="1.0" width="3" height="3" fill="#474747" stroke="#d0d0d0" stroke-width="0.9"/><path d="M2 13.5 H5 M12 13.5 H15" stroke="#cfcfcf" fill="none" stroke-width="1"/><rect x="0.5" y="12.0" width="3" height="3" fill="#474747" stroke="#d0d0d0" stroke-width="0.9"/><rect x="13.5" y="12.0" width="3" height="3" fill="#474747" stroke="#d0d0d0" stroke-width="0.9"/><path d="M6 6.5 H11 L8.5 10.5Z" fill="#9a9a9a"/></svg>

<div class="a" style="left:306px;top:217px;width:21px;height:21px;border-radius:4px;background:#404040;border:1px solid #4f4f4f"></div><svg style="left:308px;top:219px" width="17" height="17" viewBox="0 0 17 17"><path d="M2 2.5 H5 M12 2.5 H15" stroke="#cfcfcf" fill="none" stroke-width="1"/><rect x="0.5" y="1.0" width="3" height="3" fill="#474747" stroke="#d0d0d0" stroke-width="0.9"/><rect x="13.5" y="1.0" width="3" height="3" fill="#474747" stroke="#d0d0d0" stroke-width="0.9"/><path d="M2 13.5 H15" stroke="#cfcfcf" fill="none" stroke-width="1"/><rect x="0.5" y="12.0" width="3" height="3" fill="#474747" stroke="#d0d0d0" stroke-width="0.9"/><rect x="13.5" y="12.0" width="3" height="3" fill="#474747" stroke="#d0d0d0" stroke-width="0.9"/><path d="M6 6.5 H11 L8.5 10.5Z" fill="#9a9a9a"/></svg>

<div class="a" style="left:332px;top:217px;width:21px;height:21px;border-radius:4px;background:#404040;border:1px solid #4f4f4f"></div><svg style="left:334px;top:219px" width="17" height="17" viewBox="0 0 17 17"><path d="M2 2.5 H15" stroke="#cfcfcf" fill="none" stroke-width="1"/><rect x="0.5" y="1.0" width="3" height="3" fill="#474747" stroke="#d0d0d0" stroke-width="0.9"/><rect x="13.5" y="1.0" width="3" height="3" fill="#474747" stroke="#d0d0d0" stroke-width="0.9"/><path d="M1 13.5 H16" stroke="#cfcfcf" fill="none" stroke-width="1"/><rect x="7.0" y="12.0" width="3" height="3" fill="#474747" stroke="#d0d0d0" stroke-width="0.9"/><path d="M6 6.5 H11 L8.5 10.5Z" fill="#9a9a9a"/></svg>

<div class="a" style="left:209px;top:411px;width:19px;height:2px;background:repeating-linear-gradient(90deg,#9a9a9a 0 2px,transparent 2px 3px)"></div>
<div class="a" style="left:74px;top:422px;width:2px;height:18px;background:repeating-linear-gradient(180deg,#9a9a9a 0 2px,transparent 2px 3px)"></div>
<div class="a" style="left:361px;top:421px;width:2px;height:18px;background:repeating-linear-gradient(180deg,#9a9a9a 0 2px,transparent 2px 3px)"></div>
<svg style="left:79px;top:416px" width="14" height="14" viewBox="0 0 14 14"><circle cx="7" cy="7" r="6.3" stroke="#d9d9d9" fill="none" stroke-width="1.1"/><rect x="4" y="6.5" width="6" height="4" fill="#d9d9d9"/><path d="M5 6.5 V5 Q5 3 7 3 Q9 3 9 5 V6.5" stroke="#d9d9d9" fill="none" stroke-width="1.2"/></svg>

<div class="t" style="left:100px;top:417px;font-size:10.5px;color:#e0e0e0">Layers</div>
<div class="a" style="left:78px;top:433px;width:245px;height:30px;border-radius:4px;background:#434343;border:1px solid #363636"></div>
<div class="t" style="left:82px;top:441px;font-size:11.5px;color:#e0e0e0">Normal</div>
<svg style="left:309px;top:445px" width="8" height="5" viewBox="0 0 8 5"><path d="M0 0 L7 0 L3.5 4Z" fill="#aaaaaa"/></svg>

<svg style="left:332px;top:438px" width="18" height="20" viewBox="0 0 18 20"><path d="M1 1 H16 L10 10 V18 L7 16 V10 Z" stroke="#d9d9d9" fill="none" stroke-width="1.4"/></svg>

<svg style="left:349px;top:457px" width="6" height="4" viewBox="0 0 6 4"><path d="M0 0 L6 0 L3 3Z" fill="#8a8a8a"/></svg>

<div class="a" style="left:78px;top:467px;width:245px;height:28px;border-radius:3px;background:#3d3d3d;border:1px solid #353535"></div>
<div class="a" style="left:78px;top:467px;width:232px;height:28px;background:#53738d"></div>
<div class="t" style="left:78px;top:474px;width:232px;text-align:center;font-size:11.5px;color:#eeeeee">Opacity:  100%</div>
<svg style="left:313px;top:472px" width="6" height="18" viewBox="0 0 6 18"><path d="M0 4 L6 4 L3 1Z" fill="#5a5a5a"/><path d="M0 14 L6 14 L3 17Z" fill="#bbbbbb"/></svg>

<svg style="left:334px;top:474px" width="16" height="14" viewBox="0 0 16 14"><path d="M1 2 H15 M1 7 H15 M1 12 H15" stroke="#dcdcdc" stroke-width="2"/></svg>

<svg style="left:349px;top:491px" width="6" height="4" viewBox="0 0 6 4"><path d="M0 0 L6 0 L3 3Z" fill="#8a8a8a"/></svg>

<div class="a" style="left:78px;top:498px;width:278px;height:198px;background:#383838;border-radius:2px"></div>
<div class="a" style="left:344px;top:499px;width:12px;height:196px;background:#3c3c3c;border-left:1px solid #333"></div>
<div class="a" style="left:344px;top:499px;width:12px;height:13px;border:1px solid #4a4a4a"></div>
<svg style="left:347px;top:503px" width="7" height="4" viewBox="0 0 7 4"><path d="M0 4 L7 4 L3.5 0Z" fill="#bbbbbb"/></svg>

<div class="a" style="left:344px;top:682px;width:12px;height:13px;border:1px solid #4a4a4a"></div>
<svg style="left:347px;top:686px" width="7" height="4" viewBox="0 0 7 4"><path d="M0 0 L7 0 L3.5 4Z" fill="#bbbbbb"/></svg>

<div class="a" style="left:122px;top:539px;width:221px;height:39px;background:#53738d"></div>
<svg style="left:81px;top:511px" width="16" height="14" viewBox="0 0 16 14"><path d="M1 7 Q8 -1 15 7 Q8 15 1 7Z" fill="none" stroke="#d9d9d9" stroke-width="1.2"/><circle cx="8" cy="6.5" r="3.6" fill="#d9d9d9"/><path d="M2 10 Q8 15 14 10" stroke="#d9d9d9" fill="none" stroke-width="1"/></svg>

<div class="a" style="left:103px;top:510px;width:15px;height:16px;border-radius:2px;background:#353535"></div>
<div class="t" style="left:186px;top:512px;font-size:11px;font-weight:normal;color:#e0e0e0;">Linework</div>
<svg style="left:289px;top:509px" width="13" height="15" viewBox="0 0 13 15"><path d="M4 6 V4 Q4 1 7 1 Q10 1 10 4" fill="none" stroke="#6a6a6a" stroke-width="1.6"/><rect x="1" y="7" width="12" height="7" fill="#6a6a6a"/></svg>

<div class="t" style="left:306px;top:508px;font-size:21px;line-height:18px;font-style:italic;font-family:'Liberation Serif',serif;color:#6a6a6a">α</div>
<svg style="left:81px;top:551px" width="16" height="14" viewBox="0 0 16 14"><path d="M1 7 Q8 -1 15 7 Q8 15 1 7Z" fill="none" stroke="#d9d9d9" stroke-width="1.2"/><circle cx="8" cy="6.5" r="3.6" fill="#d9d9d9"/><path d="M2 10 Q8 15 14 10" stroke="#d9d9d9" fill="none" stroke-width="1"/></svg>

<div class="a" style="left:103px;top:550px;width:15px;height:16px;border-radius:2px;background:#353535"></div>
<svg style="left:105px;top:552px" width="12" height="12" viewBox="0 0 12 12"><path d="M2 6 L5 10 L10 2" stroke="#e6e6e6" stroke-width="1.4" fill="none"/></svg>

<div class="a" style="left:131px;top:552px;width:9px;height:10px;border-left:1px solid #3f556a;border-bottom:1px solid #3f556a"></div>
<div class="t" style="left:206px;top:552px;font-size:11px;font-weight:bold;color:#ededed;letter-spacing:-0.5px">Vector Layer 1</div>
<svg style="left:289px;top:549px" width="13" height="15" viewBox="0 0 13 15"><path d="M4 6 V4 Q4 1 7 1 Q10 1 10 4" fill="none" stroke="#7f93a6" stroke-width="1.6"/><rect x="1" y="7" width="12" height="7" fill="#7f93a6"/></svg>

<div class="t" style="left:306px;top:548px;font-size:21px;line-height:18px;font-style:italic;font-family:'Liberation Serif',serif;color:#7f93a6">α</div>
<svg style="left:81px;top:591px" width="16" height="14" viewBox="0 0 16 14"><path d="M1 7 Q8 -1 15 7 Q8 15 1 7Z" fill="none" stroke="#d9d9d9" stroke-width="1.2"/><circle cx="8" cy="6.5" r="3.6" fill="#d9d9d9"/><path d="M2 10 Q8 15 14 10" stroke="#d9d9d9" fill="none" stroke-width="1"/></svg>

<div class="a" style="left:103px;top:590px;width:15px;height:16px;border-radius:2px;background:#353535"></div>
<div class="a" style="left:131px;top:592px;width:9px;height:10px;border-left:1px solid #474747;border-bottom:1px solid #474747"></div>
<div class="t" style="left:206px;top:592px;font-size:11px;font-weight:normal;color:#e0e0e0;">Pelos da Ca...</div>
<svg style="left:289px;top:589px" width="13" height="15" viewBox="0 0 13 15"><path d="M4 6 V4 Q4 1 7 1 Q10 1 10 4" fill="none" stroke="#6a6a6a" stroke-width="1.6"/><rect x="1" y="7" width="12" height="7" fill="#6a6a6a"/></svg>

<div class="t" style="left:306px;top:588px;font-size:21px;line-height:18px;font-style:italic;font-family:'Liberation Serif',serif;color:#6a6a6a">α</div>
<svg style="left:81px;top:631px" width="16" height="14" viewBox="0 0 16 14"><path d="M1 7 Q8 -1 15 7 Q8 15 1 7Z" fill="none" stroke="#d9d9d9" stroke-width="1.2"/><circle cx="8" cy="6.5" r="3.6" fill="#d9d9d9"/><path d="M2 10 Q8 15 14 10" stroke="#d9d9d9" fill="none" stroke-width="1"/></svg>

<div class="a" style="left:103px;top:630px;width:15px;height:16px;border-radius:2px;background:#353535"></div>
<div class="t" style="left:186px;top:632px;font-size:11px;font-weight:normal;color:#e0e0e0;">Base</div>
<svg style="left:289px;top:629px" width="13" height="15" viewBox="0 0 13 15"><path d="M4 6 V4 Q4 1 7 1 Q10 1 10 4" fill="none" stroke="#6a6a6a" stroke-width="1.6"/><rect x="1" y="7" width="12" height="7" fill="#6a6a6a"/></svg>

<div class="t" style="left:306px;top:628px;font-size:21px;line-height:18px;font-style:italic;font-family:'Liberation Serif',serif;color:#6a6a6a">α</div>
<svg style="left:81px;top:671px" width="16" height="14" viewBox="0 0 16 14"><path d="M1 7 Q8 -1 15 7 Q8 15 1 7Z" fill="none" stroke="#d9d9d9" stroke-width="1.2"/><circle cx="8" cy="6.5" r="3.6" fill="#d9d9d9"/><path d="M2 10 Q8 15 14 10" stroke="#d9d9d9" fill="none" stroke-width="1"/></svg>

<div class="a" style="left:103px;top:670px;width:15px;height:16px;border-radius:2px;background:#353535"></div>
<div class="a" style="left:131px;top:672px;width:9px;height:10px;border-left:1px solid #474747;border-bottom:1px solid #474747"></div>
<div class="t" style="left:206px;top:672px;font-size:11px;font-weight:normal;color:#e0e0e0;">Background</div>
<svg style="left:289px;top:669px" width="13" height="15" viewBox="0 0 13 15"><path d="M4 6 V4 Q4 1 7 1 Q10 1 10 4" fill="none" stroke="#6a6a6a" stroke-width="1.6"/><rect x="1" y="7" width="12" height="7" fill="#6a6a6a"/></svg>

<div class="t" style="left:306px;top:668px;font-size:21px;line-height:18px;font-style:italic;font-family:'Liberation Serif',serif;color:#6a6a6a">α</div>
<svg style="left:128px;top:503px" width="29" height="33"><rect width="29" height="33" fill="#fff"/><rect x="0" y="7" width="7" height="7" fill="#dcdcdc"/><rect x="0" y="21" width="7" height="7" fill="#dcdcdc"/><rect x="7" y="0" width="7" height="7" fill="#dcdcdc"/><rect x="7" y="14" width="7" height="7" fill="#dcdcdc"/><rect x="7" y="28" width="7" height="5" fill="#dcdcdc"/><rect x="14" y="7" width="7" height="7" fill="#dcdcdc"/><rect x="14" y="21" width="7" height="7" fill="#dcdcdc"/><rect x="21" y="0" width="7" height="7" fill="#dcdcdc"/><rect x="21" y="14" width="7" height="7" fill="#dcdcdc"/><rect x="21" y="28" width="7" height="5" fill="#dcdcdc"/><rect x="28" y="7" width="1" height="7" fill="#dcdcdc"/><rect x="28" y="21" width="1" height="7" fill="#dcdcdc"/><rect x="9.7" y="5.7" width="1.5" height="1" fill="#000" opacity="0.4"/><rect x="23.2" y="3.9" width="1.5" height="1" fill="#000" opacity="0.9"/><rect x="6.8" y="3.7" width="1" height="1" fill="#000" opacity="0.4"/><rect x="3.4" y="14.2" width="1.5" height="1" fill="#000" opacity="0.4"/><rect x="18.0" y="19.1" width="1" height="2" fill="#000" opacity="0.9"/><rect x="11.7" y="31.3" width="1" height="2" fill="#000" opacity="0.4"/><rect x="8.8" y="5.5" width="1" height="2" fill="#000" opacity="0.6"/><rect x="16.1" y="22.1" width="1" height="2" fill="#000" opacity="0.9"/><rect x="18.3" y="12.5" width="1.5" height="2" fill="#000" opacity="0.4"/><rect x="16.2" y="20.2" width="1" height="2" fill="#000" opacity="0.9"/><rect x="12.5" y="10.7" width="1.5" height="1.5" fill="#000" opacity="0.6"/><rect x="9.1" y="25.6" width="1.5" height="1" fill="#000" opacity="0.4"/><rect x="16.5" y="17.3" width="1" height="2" fill="#000" opacity="0.6"/><rect x="8.8" y="31.4" width="1" height="2" fill="#000" opacity="0.6"/><rect x="5.5" y="11.6" width="1" height="1.5" fill="#000" opacity="0.4"/><rect x="27.0" y="3.4" width="1.5" height="2" fill="#000" opacity="0.6"/><rect x="10.2" y="11.9" width="1" height="2" fill="#000" opacity="0.6"/><rect x="2.9" y="3.9" width="1" height="1.5" fill="#000" opacity="0.9"/><rect x="18.9" y="2.9" width="1.5" height="1.5" fill="#000" opacity="0.9"/><rect x="16.6" y="22.1" width="1" height="1.5" fill="#000" opacity="0.9"/><rect x="11.4" y="21.7" width="1" height="1.5" fill="#000" opacity="0.6"/><rect x="5.5" y="4.6" width="1" height="1" fill="#000" opacity="0.6"/></svg><div class="a" style="left:144px;top:544px;width:37px;height:29px;background:#1e1e1e"></div><svg style="left:145px;top:545px" width="35" height="27"><rect width="35" height="27" fill="#fff"/><rect x="0" y="7" width="7" height="7" fill="#dcdcdc"/><rect x="0" y="21" width="7" height="6" fill="#dcdcdc"/><rect x="7" y="0" width="7" height="7" fill="#dcdcdc"/><rect x="7" y="14" width="7" height="7" fill="#dcdcdc"/><rect x="14" y="7" width="7" height="7" fill="#dcdcdc"/><rect x="14" y="21" width="7" height="6" fill="#dcdcdc"/><rect x="21" y="0" width="7" height="7" fill="#dcdcdc"/><rect x="21" y="14" width="7" height="7" fill="#dcdcdc"/><rect x="28" y="7" width="7" height="7" fill="#dcdcdc"/><rect x="28" y="21" width="7" height="6" fill="#dcdcdc"/><rect x="5.3" y="7.2" width="1" height="1.5" fill="#000" opacity="0.4"/><rect x="6.5" y="11.0" width="1" height="1" fill="#000" opacity="0.6"/><rect x="29.5" y="8.0" width="1" height="1.5" fill="#000" opacity="0.9"/><rect x="30.2" y="24.9" width="1" height="1" fill="#000" opacity="0.4"/><rect x="6.0" y="17.5" width="1" height="1.5" fill="#000" opacity="0.9"/><rect x="7.0" y="8.0" width="1" height="1.5" fill="#000" opacity="0.9"/><rect x="13.2" y="15.2" width="1" height="2" fill="#000" opacity="0.9"/><rect x="32.4" y="17.4" width="1.5" height="1" fill="#000" opacity="0.6"/><rect x="30.7" y="20.5" width="1.5" height="2" fill="#000" opacity="0.6"/><rect x="14.1" y="10.9" width="1" height="2" fill="#000" opacity="0.6"/><rect x="3.1" y="2.7" width="1" height="1.5" fill="#000" opacity="0.4"/><rect x="4.6" y="16.0" width="1" height="1" fill="#000" opacity="0.9"/><rect x="6.0" y="3.5" width="1" height="2" fill="#000" opacity="0.4"/><rect x="3.3" y="6.2" width="1" height="1" fill="#000" opacity="0.9"/></svg><svg style="left:146px;top:585px" width="34" height="29"><rect width="34" height="29" fill="#fff"/><rect x="0" y="7" width="7" height="7" fill="#dcdcdc"/><rect x="0" y="21" width="7" height="7" fill="#dcdcdc"/><rect x="7" y="0" width="7" height="7" fill="#dcdcdc"/><rect x="7" y="14" width="7" height="7" fill="#dcdcdc"/><rect x="7" y="28" width="7" height="1" fill="#dcdcdc"/><rect x="14" y="7" width="7" height="7" fill="#dcdcdc"/><rect x="14" y="21" width="7" height="7" fill="#dcdcdc"/><rect x="21" y="0" width="7" height="7" fill="#dcdcdc"/><rect x="21" y="14" width="7" height="7" fill="#dcdcdc"/><rect x="21" y="28" width="7" height="1" fill="#dcdcdc"/><rect x="28" y="7" width="6" height="7" fill="#dcdcdc"/><rect x="28" y="21" width="6" height="7" fill="#dcdcdc"/><rect x="9.1" y="10.4" width="1" height="1.5" fill="#000" opacity="0.4"/><rect x="4.7" y="14.2" width="1" height="1.5" fill="#000" opacity="0.6"/><rect x="11.0" y="4.9" width="1.5" height="1.5" fill="#000" opacity="0.9"/><rect x="9.5" y="23.4" width="1" height="2" fill="#000" opacity="0.4"/><rect x="7.6" y="26.7" width="1" height="1" fill="#000" opacity="0.9"/><rect x="18.4" y="1.7" width="1.5" height="1.5" fill="#000" opacity="0.9"/><rect x="28.6" y="19.8" width="1" height="2" fill="#000" opacity="0.6"/><rect x="30.1" y="10.6" width="1" height="2" fill="#000" opacity="0.9"/><rect x="25.9" y="9.9" width="1" height="2" fill="#000" opacity="0.4"/><rect x="26.8" y="23.1" width="1.5" height="1" fill="#000" opacity="0.4"/><rect x="17.6" y="10.6" width="1" height="1" fill="#000" opacity="0.6"/><rect x="16.1" y="6.2" width="1.5" height="1.5" fill="#000" opacity="0.6"/><rect x="26.9" y="20.5" width="1" height="1.5" fill="#000" opacity="0.4"/><rect x="8.1" y="7.1" width="1" height="1.5" fill="#000" opacity="0.4"/><rect x="16.4" y="27.6" width="1.5" height="1" fill="#000" opacity="0.6"/><rect x="30.1" y="10.3" width="1.5" height="1" fill="#000" opacity="0.9"/></svg><svg style="left:131px;top:622px" width="22" height="34"><rect width="22" height="34" fill="#fff"/><rect x="3.4" y="13.4" width="1.5" height="1" fill="#000" opacity="0.6"/><rect x="18.8" y="14.9" width="1.5" height="1.5" fill="#000" opacity="0.4"/><rect x="17.0" y="32.1" width="1" height="1.5" fill="#000" opacity="0.6"/><rect x="15.9" y="3.7" width="1" height="1" fill="#000" opacity="0.4"/><rect x="1.6" y="19.9" width="1" height="2" fill="#000" opacity="0.4"/><rect x="13.2" y="20.1" width="1" height="2" fill="#000" opacity="0.6"/><rect x="4.1" y="18.5" width="1" height="1" fill="#000" opacity="0.9"/><rect x="14.0" y="17.9" width="1" height="1.5" fill="#000" opacity="0.4"/><rect x="17.5" y="7.8" width="1" height="1" fill="#000" opacity="0.6"/><rect x="11.0" y="25.4" width="1" height="1.5" fill="#000" opacity="0.9"/><rect x="9.4" y="5.2" width="1.5" height="1.5" fill="#000" opacity="0.6"/><rect x="14.2" y="27.1" width="1.5" height="1.5" fill="#000" opacity="0.9"/><rect x="3.6" y="5.9" width="1.5" height="1" fill="#000" opacity="0.6"/><rect x="16.5" y="20.5" width="1" height="1" fill="#000" opacity="0.4"/><rect x="10.5" y="24.2" width="1.5" height="1" fill="#000" opacity="0.6"/><rect x="14.6" y="18.0" width="1" height="1" fill="#000" opacity="0.9"/><rect x="2.1" y="7.1" width="1" height="1" fill="#000" opacity="0.9"/><rect x="10.0" y="1.9" width="1" height="1.5" fill="#000" opacity="0.6"/><rect x="13.3" y="17.2" width="1.5" height="1" fill="#000" opacity="0.9"/><rect x="6.5" y="17.3" width="1" height="2" fill="#000" opacity="0.4"/><rect x="15.0" y="29.0" width="1" height="2" fill="#000" opacity="0.4"/><rect x="17.8" y="5.4" width="1" height="1.5" fill="#000" opacity="0.6"/><rect x="7.3" y="22.5" width="1" height="1" fill="#000" opacity="0.4"/><rect x="14.4" y="26.1" width="1" height="2" fill="#000" opacity="0.9"/><rect x="14.2" y="5.6" width="1" height="1.5" fill="#000" opacity="0.4"/><rect x="15.9" y="4.0" width="1" height="1" fill="#000" opacity="0.9"/></svg><svg style="left:151px;top:662px" width="22" height="34"><rect width="22" height="34" fill="#fff"/><rect x="17.6" y="6.2" width="1" height="2" fill="#000" opacity="0.6"/><rect x="7.8" y="7.3" width="1" height="1" fill="#000" opacity="0.9"/><rect x="8.3" y="11.8" width="1" height="1.5" fill="#000" opacity="0.9"/><rect x="1.4" y="11.6" width="1.5" height="1.5" fill="#000" opacity="0.9"/><rect x="20.2" y="4.6" width="1" height="1" fill="#000" opacity="0.4"/><rect x="6.3" y="2.3" width="1" height="1.5" fill="#000" opacity="0.4"/><rect x="17.4" y="28.2" width="1.5" height="1.5" fill="#000" opacity="0.6"/><rect x="4.0" y="30.4" width="1.5" height="1.5" fill="#000" opacity="0.9"/><rect x="7.5" y="9.9" width="1.5" height="1" fill="#000" opacity="0.6"/><rect x="18.9" y="9.6" width="1" height="2" fill="#000" opacity="0.4"/><rect x="17.0" y="3.7" width="1" height="1" fill="#000" opacity="0.6"/><rect x="18.3" y="15.5" width="1" height="2" fill="#000" opacity="0.6"/><rect x="19.5" y="9.6" width="1" height="1" fill="#000" opacity="0.9"/><rect x="15.2" y="31.0" width="1" height="1.5" fill="#000" opacity="0.4"/><rect x="4.6" y="30.8" width="1.5" height="1.5" fill="#000" opacity="0.9"/><rect x="16.2" y="10.3" width="1.5" height="2" fill="#000" opacity="0.4"/><rect x="6.4" y="26.7" width="1" height="1" fill="#000" opacity="0.4"/><rect x="1.4" y="17.2" width="1" height="2" fill="#000" opacity="0.6"/><rect x="5.9" y="15.3" width="1.5" height="2" fill="#000" opacity="0.6"/><rect x="14.1" y="18.5" width="1" height="2" fill="#000" opacity="0.6"/><rect x="14.8" y="32.4" width="1" height="1" fill="#000" opacity="0.9"/><rect x="15.6" y="5.5" width="1" height="1" fill="#000" opacity="0.4"/><rect x="1.3" y="21.0" width="1" height="1.5" fill="#000" opacity="0.4"/><rect x="2.1" y="22.3" width="1" height="2" fill="#000" opacity="0.9"/><rect x="20.4" y="20.2" width="1.5" height="1.5" fill="#000" opacity="0.4"/><rect x="10.2" y="6.0" width="1" height="1" fill="#000" opacity="0.6"/></svg>
<svg style="left:166px;top:500px" width="11" height="11" viewBox="0 0 11 11"><rect x="0.5" y="1.5" width="10" height="9" stroke="#d9d9d9" fill="none" stroke-width="1"/><path d="M0.5 3.5 H10.5 M0.5 1.5 H4 L5 3.5" stroke="#d9d9d9" fill="none" stroke-width="1"/></svg>

<svg style="left:165px;top:527px" width="12" height="7" viewBox="0 0 12 7"><path d="M1 1 L6 6 L11 1" stroke="#d9d9d9" fill="none" stroke-width="1.4"/></svg>

<svg style="left:325px;top:512px" width="16" height="12" viewBox="0 0 16 12"><path d="M0 1 H16 M0 6 H16 M0 11 H16 M5 1 V6 M11 1 V6 M3 6 V11 M9 6 V11 M14 6 V11" stroke="#6a6a6a" stroke-width="2"/></svg>

<svg style="left:166px;top:620px" width="11" height="11" viewBox="0 0 11 11"><rect x="0.5" y="1.5" width="10" height="9" stroke="#d9d9d9" fill="none" stroke-width="1"/><path d="M0.5 3.5 H10.5 M0.5 1.5 H4 L5 3.5" stroke="#d9d9d9" fill="none" stroke-width="1"/></svg>

<svg style="left:165px;top:647px" width="12" height="7" viewBox="0 0 12 7"><path d="M1 1 L6 6 L11 1" stroke="#d9d9d9" fill="none" stroke-width="1.4"/></svg>

<svg style="left:325px;top:632px" width="16" height="12" viewBox="0 0 16 12"><path d="M0 1 H16 M0 6 H16 M0 11 H16 M5 1 V6 M11 1 V6 M3 6 V11 M9 6 V11 M14 6 V11" stroke="#6a6a6a" stroke-width="2"/></svg>

<svg style="left:185px;top:540px" width="12" height="12" viewBox="0 0 12 12"><path d="M2 2 H10 V5 Q10 9 6 10 L2 10 Z" stroke="#d9d9d9" fill="none" stroke-width="1"/><rect x="0.5" y="0.5" width="3" height="3" fill="#d9d9d9"/><rect x="8.5" y="0.5" width="3" height="3" fill="#d9d9d9"/><rect x="0.5" y="8.5" width="3" height="3" fill="#d9d9d9"/></svg>

<svg style="left:185px;top:580px" width="12" height="12" viewBox="0 0 12 12"><path d="M2 2 H10 V5 Q10 9 6 10 L2 10 Z" stroke="#d9d9d9" fill="none" stroke-width="1"/><rect x="0.5" y="0.5" width="3" height="3" fill="#d9d9d9"/><rect x="8.5" y="0.5" width="3" height="3" fill="#d9d9d9"/><rect x="0.5" y="8.5" width="3" height="3" fill="#d9d9d9"/></svg>

<svg style="left:186px;top:660px" width="11" height="11" viewBox="0 0 11 11"><path d="M3 0.5 H10.5 V8 Q10 10.5 7 10.5 H3" stroke="#d9d9d9" fill="none" stroke-width="1"/><path d="M1 3 L6 8 M6 5 V8 H3" stroke="#d9d9d9" fill="none" stroke-width="1"/></svg>

<div class="a" style="left:324px;top:671px;width:16px;height:16px;background:repeating-conic-gradient(#5a5a5a 0 25%,#777 0 50%) 0 0/8px 8px"></div>
<svg style="left:82px;top:703px" width="20" height="19" viewBox="0 0 20 19"><path d="M10 1 V18 M1 9.5 H19" stroke="#d9d9d9" fill="none" stroke-width="2"/></svg>

<svg style="left:108px;top:711px" width="6" height="4" viewBox="0 0 6 4"><path d="M0 0 L6 0 L3 3Z" fill="#8a8a8a"/></svg>

<svg style="left:125px;top:702px" width="20" height="21" viewBox="0 0 20 21"><rect x="5" y="1" width="14" height="14" stroke="#d9d9d9" fill="none" stroke-width="1.8"/><path d="M1 5 V20 H15" stroke="#d9d9d9" fill="none" stroke-width="1.8"/></svg>

<svg style="left:157px;top:705px" width="20" height="12" viewBox="0 0 20 12"><path d="M1 1 L10 10 L19 1" stroke="#d9d9d9" fill="none" stroke-width="2"/></svg>

<svg style="left:189px;top:705px" width="20" height="12" viewBox="0 0 20 12"><path d="M1 11 L10 2 L19 11" stroke="#d9d9d9" fill="none" stroke-width="2"/></svg>

<svg style="left:220px;top:703px" width="21" height="18" viewBox="0 0 21 18"><path d="M1 3 H20 M1 9 H20 M1 15 H20" stroke="#d9d9d9" fill="none" stroke-width="1.8"/><rect x="12" y="1" width="3" height="4" fill="#d9d9d9"/><rect x="4" y="7" width="3" height="4" fill="#d9d9d9"/><rect x="12" y="13" width="3" height="4" fill="#d9d9d9"/></svg>

<svg style="left:248px;top:711px" width="6" height="4" viewBox="0 0 6 4"><path d="M0 0 L6 0 L3 3Z" fill="#8a8a8a"/></svg>

<svg style="left:332px;top:701px" width="18" height="23" viewBox="0 0 18 23"><path d="M1 5 H17 M6 5 V2 H12 V5" stroke="#d9d9d9" fill="none" stroke-width="2"/><path d="M3 7 H15 L14 22 H4Z" fill="#d9d9d9"/></svg>

<!--/DOCKS-->

<!--CANVAS-->
<div class="a" style="left:363px;top:131px;width:722px;height:597px;background:#474747;border:1px solid #3a3a3a;border-bottom:none;border-radius:4px 4px 0 0"></div>
<div class="a" style="left:363px;top:160px;width:710px;height:555px;background:linear-gradient(#6e6e6e 0,#7c7c7c 3px,#808080 6px)"></div>
<div class="t" style="left:599px;top:140px;font-size:11.5px;color:#e2e2e2">Scan_2026-01-16_06-16-21_1.jpg (161.5 MiB) *</div>
<svg style="left:1057px;top:139px" width="12" height="12" viewBox="0 0 12 12"><path d="M1 1 L11 11 M11 1 L1 11" stroke="#e0e0e0" stroke-width="1.5"/></svg>
<svg style="left:375px;top:137px" width="14" height="14" viewBox="0 0 14 14"><defs><linearGradient id="kr" x1="0" y1="1" x2="1" y2="0"><stop offset="0" stop-color="#33e0d0"/><stop offset=".45" stop-color="#a0a0ff"/><stop offset=".6" stop-color="#ff44dd"/><stop offset="1" stop-color="#ffcc44"/></linearGradient></defs><circle cx="7" cy="7" r="6.3" fill="url(#kr)"/><path d="M2 4 L9 8.5" stroke="#2a2a3a" stroke-width="2"/><circle cx="9.5" cy="8.8" r="1.2" fill="#111"/></svg>
<div class="a" style="left:1073px;top:160px;width:12px;height:555px;background:#3d3d3d"></div>
<div class="a" style="left:1074px;top:161px;width:11px;height:12px;border:1px solid #4e4e4e;background:#434343"></div>
<svg style="left:1076px;top:165px" width="7" height="4"><path d="M0 4 L7 4 L3.5 0Z" fill="#bdbdbd"/></svg>
<div class="a" style="left:1074px;top:703px;width:11px;height:12px;border:1px solid #4e4e4e;background:#434343"></div>
<svg style="left:1076px;top:707px" width="7" height="4"><path d="M0 0 L7 0 L3.5 4Z" fill="#bdbdbd"/></svg>
<div class="a" style="left:1074px;top:296px;width:11px;height:140px;border:1px solid #555;border-radius:2px;background:#454545"></div>
<div class="a" style="left:363px;top:715px;width:722px;height:13px;background:#3d3d3d"></div>
<div class="a" style="left:363px;top:716px;width:12px;height:11px;border:1px solid #4e4e4e;background:#434343"></div>
<svg style="left:367px;top:718px" width="4" height="7"><path d="M4 0 L4 7 L0 3.5Z" fill="#bdbdbd"/></svg>
<div class="a" style="left:1061px;top:716px;width:12px;height:11px;border:1px solid #4e4e4e;background:#434343"></div>
<svg style="left:1065px;top:718px" width="4" height="7"><path d="M0 0 L0 7 L4 3.5Z" fill="#bdbdbd"/></svg>
<div class="a" style="left:556px;top:716px;width:265px;height:11px;border:1px solid #555;border-radius:2px;background:#454545"></div>
<div class="a" style="left:522px;top:237px;width:551px;height:478px;overflow:hidden;background:repeating-conic-gradient(#ffffff 0 25%,#f2f2f2 0 50%) 1px 18px/64px 64px">
<svg style="left:-522px;top:-237px" width="1366" height="768" viewBox="0 0 1366 768">
<g transform="translate(520,230) scale(0.3255)">
<path d="M300,612 C250,520 235,400 260,270 C270,230 285,190 292,175" stroke="#9a9a9a" fill="none" stroke-width="6"/>
<path d="M215,320 C230,250 260,180 300,70" stroke="#9a9a9a" fill="none" stroke-width="6"/>
<path d="M340,240 C360,230 380,250 370,300 C360,330 330,330 330,300" stroke="#9a9a9a" fill="none" stroke-width="6"/>
<path d="M330,440 C380,520 420,600 430,640" stroke="#9a9a9a" fill="none" stroke-width="6"/>
<path d="M460,470 C490,500 520,520 560,510 C600,500 640,500 650,560" stroke="#9a9a9a" fill="none" stroke-width="6"/>
<path d="M590,570 C600,580 620,590 630,570" stroke="#9a9a9a" fill="none" stroke-width="6"/>
<path d="M890,190 C930,160 960,120 970,80 M1000,160 C1030,260 1055,420 1040,560" stroke="#9a9a9a" fill="none" stroke-width="6"/>
<path d="M870,260 C840,320 820,380 825,520" stroke="#9a9a9a" fill="none" stroke-width="6"/>
<path d="M420,560 C470,620 560,640 640,600" stroke="#9a9a9a" fill="none" stroke-width="6"/>
<path d="M740,400 C720,470 735,560 760,600" stroke="#9a9a9a" fill="none" stroke-width="6"/>
<path d="M290,700 C200,570 160,400 195,250 C220,150 270,80 305,48 C318,110 335,180 380,250 C430,330 485,400 515,458" transform="translate(9,5)" stroke="#9c9c9c" fill="none" stroke-width="9" opacity=".75"/>
<path d="M300,612 C245,520 228,400 250,280 C260,230 275,190 290,165 C300,280 330,400 360,480 C390,540 410,580 420,615" transform="translate(9,5)" stroke="#9c9c9c" fill="none" stroke-width="9" opacity=".75"/>
<path d="M350,650 C340,590 355,545 375,540 C400,540 415,580 420,615" transform="translate(9,5)" stroke="#9c9c9c" fill="none" stroke-width="9" opacity=".75"/>
<path d="M420,410 C425,490 445,570 520,600 C580,620 640,600 650,575" transform="translate(9,5)" stroke="#9c9c9c" fill="none" stroke-width="9" opacity=".75"/>
<path d="M430,420 C465,455 495,462 515,455 C545,440 575,425 625,430" transform="translate(9,5)" stroke="#9c9c9c" fill="none" stroke-width="9" opacity=".75"/>
<path d="M672,505 C640,470 620,400 650,335 C670,360 680,400 725,412" transform="translate(9,5)" stroke="#9c9c9c" fill="none" stroke-width="9" opacity=".75"/>
<path d="M732,545 C705,400 770,280 880,195 C930,145 950,90 960,55 C1000,130 1040,250 1050,400 C1055,500 1030,600 950,720" transform="translate(9,5)" stroke="#9c9c9c" fill="none" stroke-width="9" opacity=".75"/>
<path d="M960,135 C930,220 880,300 850,385 C830,440 825,500 832,548" transform="translate(9,5)" stroke="#9c9c9c" fill="none" stroke-width="9" opacity=".75"/>
<path d="M960,135 C985,200 1000,270 1000,340 C1000,420 985,500 965,575" transform="translate(9,5)" stroke="#9c9c9c" fill="none" stroke-width="9" opacity=".75"/>
<path d="M832,548 C835,500 850,470 868,470 C888,480 895,540 892,620" transform="translate(9,5)" stroke="#9c9c9c" fill="none" stroke-width="9" opacity=".75"/>
<path d="M905,560 C915,540 950,530 968,570" transform="translate(9,5)" stroke="#9c9c9c" fill="none" stroke-width="9" opacity=".75"/>
<path d="M950,720 C980,680 1000,650 1020,655 C1040,680 1040,720 1040,768" transform="translate(9,5)" stroke="#9c9c9c" fill="none" stroke-width="9" opacity=".75"/>
<path d="M290,700 C200,570 160,400 195,250 C220,150 270,80 305,48 C318,110 335,180 380,250 C430,330 485,400 515,458" stroke="#000" fill="none" stroke-width="6"/>
<path d="M300,612 C245,520 228,400 250,280 C260,230 275,190 290,165 C300,280 330,400 360,480 C390,540 410,580 420,615" stroke="#000" fill="none" stroke-width="6"/>
<path d="M350,650 C340,590 355,545 375,540 C400,540 415,580 420,615" stroke="#000" fill="none" stroke-width="6"/>
<path d="M420,410 C425,490 445,570 520,600 C580,620 640,600 650,575" stroke="#000" fill="none" stroke-width="6"/>
<path d="M430,420 C465,455 495,462 515,455 C545,440 575,425 625,430" stroke="#000" fill="none" stroke-width="6"/>
<path d="M672,505 C640,470 620,400 650,335 C670,360 680,400 725,412" stroke="#000" fill="none" stroke-width="6"/>
<path d="M732,545 C705,400 770,280 880,195 C930,145 950,90 960,55 C1000,130 1040,250 1050,400 C1055,500 1030,600 950,720" stroke="#000" fill="none" stroke-width="6"/>
<path d="M960,135 C930,220 880,300 850,385 C830,440 825,500 832,548" stroke="#000" fill="none" stroke-width="6"/>
<path d="M960,135 C985,200 1000,270 1000,340 C1000,420 985,500 965,575" stroke="#000" fill="none" stroke-width="6"/>
<path d="M832,548 C835,500 850,470 868,470 C888,480 895,540 892,620" stroke="#000" fill="none" stroke-width="6"/>
<path d="M905,560 C915,540 950,530 968,570" stroke="#000" fill="none" stroke-width="6"/>
<path d="M950,720 C980,680 1000,650 1020,655 C1040,680 1040,720 1040,768" stroke="#000" fill="none" stroke-width="6"/>
</g>
<path d="M300,110 C240,170 215,260 228,345 C245,440 290,520 350,575 C400,620 470,640 530,625" transform="translate(590,400) scale(0.2605) translate(-6,5)" stroke="#b4b4b4" fill="none" stroke-width="7"/>
<path d="M560,100 C630,75 730,100 790,175 C835,245 850,335 842,425" transform="translate(590,400) scale(0.2605) translate(-6,5)" stroke="#b4b4b4" fill="none" stroke-width="7"/>
<path d="M270,120 C320,95 380,90 440,110 C480,125 520,130 560,100" transform="translate(590,400) scale(0.2605) translate(-6,5)" stroke="#b4b4b4" fill="none" stroke-width="7"/>
<path d="M275,310 C270,230 320,185 370,190 C430,195 470,260 465,330 C460,400 420,440 370,440 C320,440 280,390 275,310" transform="translate(590,400) scale(0.2605) translate(-6,5)" stroke="#b4b4b4" fill="none" stroke-width="7"/>
<path d="M290,315 C290,240 330,205 370,208 C420,212 450,270 448,330 C445,390 410,425 372,425" transform="translate(590,400) scale(0.2605) translate(-6,5)" stroke="#b4b4b4" fill="none" stroke-width="7"/>
<path d="M565,270 C560,200 610,165 660,168 C720,172 760,230 755,290 C750,350 710,385 660,382 C610,378 570,330 565,270" transform="translate(590,400) scale(0.2605) translate(-6,5)" stroke="#b4b4b4" fill="none" stroke-width="7"/>
<path d="M585,275 C585,215 625,185 662,188 C710,192 738,240 735,290" transform="translate(590,400) scale(0.2605) translate(-6,5)" stroke="#b4b4b4" fill="none" stroke-width="7"/>
<path d="M330,345 C360,392 420,388 442,330" transform="translate(590,400) scale(0.2605) translate(-6,5)" stroke="#b4b4b4" fill="none" stroke-width="7"/>
<path d="M615,310 C650,342 690,332 708,290" transform="translate(590,400) scale(0.2605) translate(-6,5)" stroke="#b4b4b4" fill="none" stroke-width="7"/>
<path d="M440,420 C420,380 450,350 482,362 C530,332 640,350 662,420 C668,462 622,482 582,472 C542,502 462,502 440,462 C430,447 435,432 440,420" transform="translate(590,400) scale(0.2605) translate(-6,5)" stroke="#b4b4b4" fill="none" stroke-width="7"/>
<path d="M485,395 L547,385 L515,422 Z" transform="translate(590,400) scale(0.2605) translate(-6,5)" stroke="#b4b4b4" fill="none" stroke-width="7"/>
<path d="M500,510 C525,565 560,640 555,700" transform="translate(590,400) scale(0.2605) translate(-6,5)" stroke="#b4b4b4" fill="none" stroke-width="7"/>
<path d="M540,520 C560,580 600,640 600,700" transform="translate(590,400) scale(0.2605) translate(-6,5)" stroke="#b4b4b4" fill="none" stroke-width="7"/>
<path d="M720,470 C700,540 715,600 760,612 C805,585 805,520 782,468" transform="translate(590,400) scale(0.2605) translate(-6,5)" stroke="#b4b4b4" fill="none" stroke-width="7"/>
<path d="M740,480 C735,540 745,585 765,595" transform="translate(590,400) scale(0.2605) translate(-6,5)" stroke="#b4b4b4" fill="none" stroke-width="7"/>
<path d="M840,470 C880,520 900,600 890,660" transform="translate(590,400) scale(0.2605) translate(-6,5)" stroke="#b4b4b4" fill="none" stroke-width="7"/>
<path d="M820,430 C800,480 820,560 860,600" transform="translate(590,400) scale(0.2605) translate(-6,5)" stroke="#b4b4b4" fill="none" stroke-width="7"/>
<path d="M560,560 C620,600 700,640 760,640" transform="translate(590,400) scale(0.2605) translate(-6,5)" stroke="#b4b4b4" fill="none" stroke-width="7"/>
<path d="M240,700 C260,650 300,612 350,602" transform="translate(590,400) scale(0.2605) translate(-6,5)" stroke="#b4b4b4" fill="none" stroke-width="7"/>
<path d="M620,620 C680,650 720,700 730,768" transform="translate(590,400) scale(0.2605) translate(-6,5)" stroke="#b4b4b4" fill="none" stroke-width="7"/>
<path d="M860,610 C920,600 980,640 1000,700" transform="translate(590,400) scale(0.2605) translate(-6,5)" stroke="#b4b4b4" fill="none" stroke-width="7"/>
<path d="M130,110 C150,140 160,180 200,200" transform="translate(590,400) scale(0.2605) translate(-6,5)" stroke="#b4b4b4" fill="none" stroke-width="7"/>
<path d="M120,320 C160,360 200,400 240,420" transform="translate(590,400) scale(0.2605) translate(-6,5)" stroke="#b4b4b4" fill="none" stroke-width="7"/>
<path d="M960,240 C980,300 990,360 980,420" transform="translate(590,400) scale(0.2605) translate(-6,5)" stroke="#b4b4b4" fill="none" stroke-width="7"/>
<path d="M300,110 C240,170 215,260 228,345 C245,440 290,520 350,575 C400,620 470,640 530,625" transform="translate(590,400) scale(0.2605)" stroke="#8e8e8e" fill="none" stroke-width="8"/>
<path d="M560,100 C630,75 730,100 790,175 C835,245 850,335 842,425" transform="translate(590,400) scale(0.2605)" stroke="#8e8e8e" fill="none" stroke-width="8"/>
<path d="M270,120 C320,95 380,90 440,110 C480,125 520,130 560,100" transform="translate(590,400) scale(0.2605)" stroke="#8e8e8e" fill="none" stroke-width="8"/>
<path d="M275,310 C270,230 320,185 370,190 C430,195 470,260 465,330 C460,400 420,440 370,440 C320,440 280,390 275,310" transform="translate(590,400) scale(0.2605)" stroke="#8e8e8e" fill="none" stroke-width="8"/>
<path d="M290,315 C290,240 330,205 370,208 C420,212 450,270 448,330 C445,390 410,425 372,425" transform="translate(590,400) scale(0.2605)" stroke="#8e8e8e" fill="none" stroke-width="8"/>
<path d="M565,270 C560,200 610,165 660,168 C720,172 760,230 755,290 C750,350 710,385 660,382 C610,378 570,330 565,270" transform="translate(590,400) scale(0.2605)" stroke="#8e8e8e" fill="none" stroke-width="8"/>
<path d="M585,275 C585,215 625,185 662,188 C710,192 738,240 735,290" transform="translate(590,400) scale(0.2605)" stroke="#8e8e8e" fill="none" stroke-width="8"/>
<path d="M330,345 C360,392 420,388 442,330" transform="translate(590,400) scale(0.2605)" stroke="#8e8e8e" fill="none" stroke-width="8"/>
<path d="M615,310 C650,342 690,332 708,290" transform="translate(590,400) scale(0.2605)" stroke="#8e8e8e" fill="none" stroke-width="8"/>
<path d="M440,420 C420,380 450,350 482,362 C530,332 640,350 662,420 C668,462 622,482 582,472 C542,502 462,502 440,462 C430,447 435,432 440,420" transform="translate(590,400) scale(0.2605)" stroke="#8e8e8e" fill="none" stroke-width="8"/>
<path d="M485,395 L547,385 L515,422 Z" transform="translate(590,400) scale(0.2605)" stroke="#8e8e8e" fill="none" stroke-width="8"/>
<path d="M500,510 C525,565 560,640 555,700" transform="translate(590,400) scale(0.2605)" stroke="#8e8e8e" fill="none" stroke-width="8"/>
<path d="M540,520 C560,580 600,640 600,700" transform="translate(590,400) scale(0.2605)" stroke="#8e8e8e" fill="none" stroke-width="8"/>
<path d="M720,470 C700,540 715,600 760,612 C805,585 805,520 782,468" transform="translate(590,400) scale(0.2605)" stroke="#8e8e8e" fill="none" stroke-width="8"/>
<path d="M740,480 C735,540 745,585 765,595" transform="translate(590,400) scale(0.2605)" stroke="#8e8e8e" fill="none" stroke-width="8"/>
<path d="M840,470 C880,520 900,600 890,660" transform="translate(590,400) scale(0.2605)" stroke="#8e8e8e" fill="none" stroke-width="8"/>
<path d="M820,430 C800,480 820,560 860,600" transform="translate(590,400) scale(0.2605)" stroke="#8e8e8e" fill="none" stroke-width="8"/>
<path d="M560,560 C620,600 700,640 760,640" transform="translate(590,400) scale(0.2605)" stroke="#8e8e8e" fill="none" stroke-width="8"/>
<path d="M240,700 C260,650 300,612 350,602" transform="translate(590,400) scale(0.2605)" stroke="#8e8e8e" fill="none" stroke-width="8"/>
<path d="M620,620 C680,650 720,700 730,768" transform="translate(590,400) scale(0.2605)" stroke="#8e8e8e" fill="none" stroke-width="8"/>
<path d="M860,610 C920,600 980,640 1000,700" transform="translate(590,400) scale(0.2605)" stroke="#8e8e8e" fill="none" stroke-width="8"/>
<path d="M130,110 C150,140 160,180 200,200" transform="translate(590,400) scale(0.2605)" stroke="#8e8e8e" fill="none" stroke-width="8"/>
<path d="M120,320 C160,360 200,400 240,420" transform="translate(590,400) scale(0.2605)" stroke="#8e8e8e" fill="none" stroke-width="8"/>
<path d="M960,240 C980,300 990,360 980,420" transform="translate(590,400) scale(0.2605)" stroke="#8e8e8e" fill="none" stroke-width="8"/>
<g transform="translate(590,400) scale(0.2605)"><path d="M330,345 C360,392 420,388 442,330" stroke="#555" fill="none" stroke-width="10"/><path d="M615,310 C650,342 690,332 708,290" stroke="#555" fill="none" stroke-width="10"/><path d="M485,395 L547,385 L515,422 Z" stroke="#666" fill="none" stroke-width="8"/><circle cx="315" cy="490" r="6" fill="#777"/><circle cx="340" cy="495" r="6" fill="#777"/><circle cx="352" cy="487" r="5" fill="#777"/><circle cx="332" cy="525" r="6" fill="#777"/><circle cx="812" cy="412" r="5" fill="#888"/><circle cx="800" cy="440" r="5" fill="#888"/></g>
<path d="M100,222 C92,150 118,100 150,105 C175,112 190,140 200,165" transform="translate(590,400) scale(0.2605) translate(10,6)" stroke="#9c9c9c" fill="none" stroke-width="11" opacity=".7"/>
<path d="M148,300 C82,280 62,325 68,395 C80,465 125,515 205,540" transform="translate(590,400) scale(0.2605) translate(10,6)" stroke="#9c9c9c" fill="none" stroke-width="11" opacity=".7"/>
<path d="M205,540 C158,548 150,585 172,618 C195,648 235,655 285,650" transform="translate(590,400) scale(0.2605) translate(10,6)" stroke="#9c9c9c" fill="none" stroke-width="11" opacity=".7"/>
<path d="M100,222 C115,250 130,275 148,300" transform="translate(590,400) scale(0.2605) translate(10,6)" stroke="#9c9c9c" fill="none" stroke-width="11" opacity=".7"/>
<path d="M848,122 C852,60 885,15 925,32 C955,60 962,115 958,150" transform="translate(590,400) scale(0.2605) translate(10,6)" stroke="#9c9c9c" fill="none" stroke-width="11" opacity=".7"/>
<path d="M915,250 C960,205 988,150 1010,180 C1032,225 1022,300 988,362 C1005,385 1012,425 992,480 C972,520 952,530 935,537" transform="translate(590,400) scale(0.2605) translate(10,6)" stroke="#9c9c9c" fill="none" stroke-width="11" opacity=".7"/>
<path d="M100,222 C92,150 118,100 150,105 C175,112 190,140 200,165" transform="translate(590,400) scale(0.2605)" stroke="#000" fill="none" stroke-width="7.5"/>
<path d="M148,300 C82,280 62,325 68,395 C80,465 125,515 205,540" transform="translate(590,400) scale(0.2605)" stroke="#000" fill="none" stroke-width="7.5"/>
<path d="M205,540 C158,548 150,585 172,618 C195,648 235,655 285,650" transform="translate(590,400) scale(0.2605)" stroke="#000" fill="none" stroke-width="7.5"/>
<path d="M100,222 C115,250 130,275 148,300" transform="translate(590,400) scale(0.2605)" stroke="#000" fill="none" stroke-width="7.5"/>
<path d="M848,122 C852,60 885,15 925,32 C955,60 962,115 958,150" transform="translate(590,400) scale(0.2605)" stroke="#000" fill="none" stroke-width="7.5"/>
<path d="M915,250 C960,205 988,150 1010,180 C1032,225 1022,300 988,362 C1005,385 1012,425 992,480 C972,520 952,530 935,537" transform="translate(590,400) scale(0.2605)" stroke="#000" fill="none" stroke-width="7.5"/>
<path d="M120,130 C80,140 58,200 68,262 C80,312 150,342 222,332 C262,342 292,362 312,382" transform="translate(525,550) scale(0.2562) translate(7,5)" stroke="#b4b4b4" fill="none" stroke-width="7"/>
<path d="M145,140 C115,120 75,150 85,185 C95,215 135,215 150,190 C160,170 158,150 145,140" transform="translate(525,550) scale(0.2562) translate(7,5)" stroke="#b4b4b4" fill="none" stroke-width="7"/>
<path d="M80,210 C60,230 70,275 100,270 C125,265 125,225 105,210" transform="translate(525,550) scale(0.2562) translate(7,5)" stroke="#b4b4b4" fill="none" stroke-width="7"/>
<path d="M190,100 C160,105 150,150 175,170 C205,185 235,160 225,125 C218,105 205,98 190,100" transform="translate(525,550) scale(0.2562) translate(7,5)" stroke="#b4b4b4" fill="none" stroke-width="7"/>
<path d="M290,95 C255,100 255,160 280,180 C315,195 345,160 335,125 C328,105 310,92 290,95" transform="translate(525,550) scale(0.2562) translate(7,5)" stroke="#b4b4b4" fill="none" stroke-width="7"/>
<path d="M190,240 C210,192 280,202 300,242 C312,290 262,302 222,282 C202,272 190,257 190,240" transform="translate(525,550) scale(0.2562) translate(7,5)" stroke="#b4b4b4" fill="none" stroke-width="7"/>
<path d="M222,332 C262,372 322,372 372,302" transform="translate(525,550) scale(0.2562) translate(7,5)" stroke="#b4b4b4" fill="none" stroke-width="7"/>
<path d="M240,370 C282,470 352,600 420,644" transform="translate(525,550) scale(0.2562) translate(7,5)" stroke="#b4b4b4" fill="none" stroke-width="7"/>
<path d="M350,290 C402,362 472,472 540,644" transform="translate(525,550) scale(0.2562) translate(7,5)" stroke="#b4b4b4" fill="none" stroke-width="7"/>
<path d="M262,432 C322,422 352,402 392,372" transform="translate(525,550) scale(0.2562) translate(7,5)" stroke="#b4b4b4" fill="none" stroke-width="7"/>
<path d="M290,500 C350,492 402,472 432,432" transform="translate(525,550) scale(0.2562) translate(7,5)" stroke="#b4b4b4" fill="none" stroke-width="7"/>
<path d="M320,572 C382,562 432,542 472,502" transform="translate(525,550) scale(0.2562) translate(7,5)" stroke="#b4b4b4" fill="none" stroke-width="7"/>
<path d="M352,632 C402,622 452,602 502,572" transform="translate(525,550) scale(0.2562) translate(7,5)" stroke="#b4b4b4" fill="none" stroke-width="7"/>
<path d="M250,380 C300,392 345,372 380,330" transform="translate(525,550) scale(0.2562) translate(7,5)" stroke="#b4b4b4" fill="none" stroke-width="7"/>
<path d="M270,400 L282,440 M295,395 L305,435 M320,385 L330,425 M345,370 L355,410" transform="translate(525,550) scale(0.2562) translate(7,5)" stroke="#b4b4b4" fill="none" stroke-width="7"/>
<path d="M470,0 C455,60 480,140 520,190 C490,222 490,272 522,302 C502,332 522,372 562,382" transform="translate(525,550) scale(0.2562) translate(7,5)" stroke="#b4b4b4" fill="none" stroke-width="7"/>
<path d="M548,40 C540,100 560,150 600,172" transform="translate(525,550) scale(0.2562) translate(7,5)" stroke="#b4b4b4" fill="none" stroke-width="7"/>
<path d="M460,400 C520,380 570,370 620,390" transform="translate(525,550) scale(0.2562) translate(7,5)" stroke="#b4b4b4" fill="none" stroke-width="7"/>
<path d="M470,420 C530,540 570,600 600,644" transform="translate(525,550) scale(0.2562) translate(7,5)" stroke="#b4b4b4" fill="none" stroke-width="7"/>
<path d="M600,350 C600,420 620,520 680,644" transform="translate(525,550) scale(0.2562) translate(7,5)" stroke="#b4b4b4" fill="none" stroke-width="7"/>
<path d="M640,392 L1000,226 L1092,382" transform="translate(525,550) scale(0.2562) translate(7,5)" stroke="#b4b4b4" fill="none" stroke-width="7"/>
<path d="M660,410 C760,380 880,320 1000,250" transform="translate(525,550) scale(0.2562) translate(7,5)" stroke="#b4b4b4" fill="none" stroke-width="7"/>
<path d="M1000,226 C1032,302 1062,352 1092,382" transform="translate(525,550) scale(0.2562) translate(7,5)" stroke="#b4b4b4" fill="none" stroke-width="7"/>
<path d="M1080,372 C1152,352 1222,362 1252,382 C1262,452 1242,552 1222,644" transform="translate(525,550) scale(0.2562) translate(7,5)" stroke="#b4b4b4" fill="none" stroke-width="7"/>
<path d="M1062,402 C1052,482 1042,562 1022,644" transform="translate(525,550) scale(0.2562) translate(7,5)" stroke="#b4b4b4" fill="none" stroke-width="7"/>
<path d="M1100,365 L1105,400 M1130,362 L1135,398 M1160,362 L1163,398 M1190,364 L1192,400 M1220,368 L1222,402" transform="translate(525,550) scale(0.2562) translate(7,5)" stroke="#b4b4b4" fill="none" stroke-width="7"/>
<path d="M740,600 C782,540 862,552 902,602" transform="translate(525,550) scale(0.2562) translate(7,5)" stroke="#b4b4b4" fill="none" stroke-width="7"/>
<path d="M902,602 C952,542 1082,522 1122,602" transform="translate(525,550) scale(0.2562) translate(7,5)" stroke="#b4b4b4" fill="none" stroke-width="7"/>
<path d="M880,560 C950,520 1050,500 1120,520" transform="translate(525,550) scale(0.2562) translate(7,5)" stroke="#b4b4b4" fill="none" stroke-width="7"/>
<path d="M1150,130 C1202,110 1242,150 1242,200 C1262,180 1302,200 1302,262 C1292,302 1262,322 1232,322" transform="translate(525,550) scale(0.2562) translate(7,5)" stroke="#b4b4b4" fill="none" stroke-width="7"/>
<path d="M1160,0 C1202,20 1232,60 1232,100" transform="translate(525,550) scale(0.2562) translate(7,5)" stroke="#b4b4b4" fill="none" stroke-width="7"/>
<path d="M780,80 C760,130 782,202 842,212 C872,202 892,172 902,142" transform="translate(525,550) scale(0.2562) translate(7,5)" stroke="#b4b4b4" fill="none" stroke-width="7"/>
<path d="M840,0 C860,60 880,100 910,120" transform="translate(525,550) scale(0.2562) translate(7,5)" stroke="#b4b4b4" fill="none" stroke-width="7"/>
<path d="M960,0 C990,40 1040,60 1080,40" transform="translate(525,550) scale(0.2562) translate(7,5)" stroke="#b4b4b4" fill="none" stroke-width="7"/>
<path d="M1180,240 C1200,300 1180,340 1140,370" transform="translate(525,550) scale(0.2562) translate(7,5)" stroke="#b4b4b4" fill="none" stroke-width="7"/>
<path d="M930,240 C960,300 1000,350 1060,380" transform="translate(525,550) scale(0.2562) translate(7,5)" stroke="#b4b4b4" fill="none" stroke-width="7"/>
<path d="M120,130 C80,140 58,200 68,262 C80,312 150,342 222,332 C262,342 292,362 312,382" transform="translate(525,550) scale(0.2562)" stroke="#8e8e8e" fill="none" stroke-width="8.5"/>
<path d="M145,140 C115,120 75,150 85,185 C95,215 135,215 150,190 C160,170 158,150 145,140" transform="translate(525,550) scale(0.2562)" stroke="#8e8e8e" fill="none" stroke-width="8.5"/>
<path d="M80,210 C60,230 70,275 100,270 C125,265 125,225 105,210" transform="translate(525,550) scale(0.2562)" stroke="#8e8e8e" fill="none" stroke-width="8.5"/>
<path d="M190,100 C160,105 150,150 175,170 C205,185 235,160 225,125 C218,105 205,98 190,100" transform="translate(525,550) scale(0.2562)" stroke="#8e8e8e" fill="none" stroke-width="8.5"/>
<path d="M290,95 C255,100 255,160 280,180 C315,195 345,160 335,125 C328,105 310,92 290,95" transform="translate(525,550) scale(0.2562)" stroke="#8e8e8e" fill="none" stroke-width="8.5"/>
<path d="M190,240 C210,192 280,202 300,242 C312,290 262,302 222,282 C202,272 190,257 190,240" transform="translate(525,550) scale(0.2562)" stroke="#8e8e8e" fill="none" stroke-width="8.5"/>
<path d="M222,332 C262,372 322,372 372,302" transform="translate(525,550) scale(0.2562)" stroke="#8e8e8e" fill="none" stroke-width="8.5"/>
<path d="M240,370 C282,470 352,600 420,644" transform="translate(525,550) scale(0.2562)" stroke="#8e8e8e" fill="none" stroke-width="8.5"/>
<path d="M350,290 C402,362 472,472 540,644" transform="translate(525,550) scale(0.2562)" stroke="#8e8e8e" fill="none" stroke-width="8.5"/>
<path d="M262,432 C322,422 352,402 392,372" transform="translate(525,550) scale(0.2562)" stroke="#8e8e8e" fill="none" stroke-width="8.5"/>
<path d="M290,500 C350,492 402,472 432,432" transform="translate(525,550) scale(0.2562)" stroke="#8e8e8e" fill="none" stroke-width="8.5"/>
<path d="M320,572 C382,562 432,542 472,502" transform="translate(525,550) scale(0.2562)" stroke="#8e8e8e" fill="none" stroke-width="8.5"/>
<path d="M352,632 C402,622 452,602 502,572" transform="translate(525,550) scale(0.2562)" stroke="#8e8e8e" fill="none" stroke-width="8.5"/>
<path d="M250,380 C300,392 345,372 380,330" transform="translate(525,550) scale(0.2562)" stroke="#8e8e8e" fill="none" stroke-width="8.5"/>
<path d="M270,400 L282,440 M295,395 L305,435 M320,385 L330,425 M345,370 L355,410" transform="translate(525,550) scale(0.2562)" stroke="#8e8e8e" fill="none" stroke-width="8.5"/>
<path d="M470,0 C455,60 480,140 520,190 C490,222 490,272 522,302 C502,332 522,372 562,382" transform="translate(525,550) scale(0.2562)" stroke="#8e8e8e" fill="none" stroke-width="8.5"/>
<path d="M548,40 C540,100 560,150 600,172" transform="translate(525,550) scale(0.2562)" stroke="#8e8e8e" fill="none" stroke-width="8.5"/>
<path d="M460,400 C520,380 570,370 620,390" transform="translate(525,550) scale(0.2562)" stroke="#8e8e8e" fill="none" stroke-width="8.5"/>
<path d="M470,420 C530,540 570,600 600,644" transform="translate(525,550) scale(0.2562)" stroke="#8e8e8e" fill="none" stroke-width="8.5"/>
<path d="M600,350 C600,420 620,520 680,644" transform="translate(525,550) scale(0.2562)" stroke="#8e8e8e" fill="none" stroke-width="8.5"/>
<path d="M640,392 L1000,226 L1092,382" transform="translate(525,550) scale(0.2562)" stroke="#8e8e8e" fill="none" stroke-width="8.5"/>
<path d="M660,410 C760,380 880,320 1000,250" transform="translate(525,550) scale(0.2562)" stroke="#8e8e8e" fill="none" stroke-width="8.5"/>
<path d="M1000,226 C1032,302 1062,352 1092,382" transform="translate(525,550) scale(0.2562)" stroke="#8e8e8e" fill="none" stroke-width="8.5"/>
<path d="M1080,372 C1152,352 1222,362 1252,382 C1262,452 1242,552 1222,644" transform="translate(525,550) scale(0.2562)" stroke="#8e8e8e" fill="none" stroke-width="8.5"/>
<path d="M1062,402 C1052,482 1042,562 1022,644" transform="translate(525,550) scale(0.2562)" stroke="#8e8e8e" fill="none" stroke-width="8.5"/>
<path d="M1100,365 L1105,400 M1130,362 L1135,398 M1160,362 L1163,398 M1190,364 L1192,400 M1220,368 L1222,402" transform="translate(525,550) scale(0.2562)" stroke="#8e8e8e" fill="none" stroke-width="8.5"/>
<path d="M740,600 C782,540 862,552 902,602" transform="translate(525,550) scale(0.2562)" stroke="#8e8e8e" fill="none" stroke-width="8.5"/>
<path d="M902,602 C952,542 1082,522 1122,602" transform="translate(525,550) scale(0.2562)" stroke="#8e8e8e" fill="none" stroke-width="8.5"/>
<path d="M880,560 C950,520 1050,500 1120,520" transform="translate(525,550) scale(0.2562)" stroke="#8e8e8e" fill="none" stroke-width="8.5"/>
<path d="M1150,130 C1202,110 1242,150 1242,200 C1262,180 1302,200 1302,262 C1292,302 1262,322 1232,322" transform="translate(525,550) scale(0.2562)" stroke="#8e8e8e" fill="none" stroke-width="8.5"/>
<path d="M1160,0 C1202,20 1232,60 1232,100" transform="translate(525,550) scale(0.2562)" stroke="#8e8e8e" fill="none" stroke-width="8.5"/>
<path d="M780,80 C760,130 782,202 842,212 C872,202 892,172 902,142" transform="translate(525,550) scale(0.2562)" stroke="#8e8e8e" fill="none" stroke-width="8.5"/>
<path d="M840,0 C860,60 880,100 910,120" transform="translate(525,550) scale(0.2562)" stroke="#8e8e8e" fill="none" stroke-width="8.5"/>
<path d="M960,0 C990,40 1040,60 1080,40" transform="translate(525,550) scale(0.2562)" stroke="#8e8e8e" fill="none" stroke-width="8.5"/>
<path d="M1180,240 C1200,300 1180,340 1140,370" transform="translate(525,550) scale(0.2562)" stroke="#8e8e8e" fill="none" stroke-width="8.5"/>
<path d="M930,240 C960,300 1000,350 1060,380" transform="translate(525,550) scale(0.2562)" stroke="#8e8e8e" fill="none" stroke-width="8.5"/>
<path d="M700,510 L800,340" transform="translate(525,550) scale(0.2562)" stroke="#777" fill="none" stroke-width="14" stroke-dasharray="10 8"/>
<path d="M944 716 C946 702 951 692 957 686 C961 698 966 708 976 716" stroke="#8e8e8e" fill="none" stroke-width="2.2"/><path d="M947 716 C949 704 953 694 958 690" stroke="#b4b4b4" fill="none" stroke-width="1.8"/>
<g transform="translate(850,360) scale(0.2083)">
<path d="M170,520 C100,480 70,340 130,220 C200,120 350,80 520,75 C700,70 880,130 950,250 C990,340 970,480 880,590 C800,680 600,700 450,680 C330,665 250,640 210,630 C160,640 100,640 65,605 C100,580 150,550 170,520" transform="translate(8,-10) scale(0.99)" stroke="#b8b8b8" fill="none" stroke-width="7"/>
<path d="M170,520 C100,480 70,340 130,220 C200,120 350,80 520,75 C700,70 880,130 950,250 C990,340 970,480 880,590 C800,680 600,700 450,680 C330,665 250,640 210,630 C160,640 100,640 65,605 C100,580 150,550 170,520" stroke="#8e8e8e" fill="none" stroke-width="10"/>
<path d="M230,230 L290,235 M258,232 L250,380 M220,382 L272,378" stroke="#8e8e8e" fill="none" stroke-width="10"/>
<path d="M335,310 C330,380 350,390 380,380 C395,370 400,340 400,310 M400,310 L405,385" stroke="#8e8e8e" fill="none" stroke-width="10"/>
<path d="M470,310 C440,300 430,330 450,345 C475,360 480,390 440,390" stroke="#8e8e8e" fill="none" stroke-width="10"/>
<path d="M510,350 L580,345 C580,310 540,300 515,325 C495,360 520,400 580,395" stroke="#8e8e8e" fill="none" stroke-width="10"/>
<path d="M665,390 L720,245 L760,395 M690,330 L745,325" stroke="#8e8e8e" fill="none" stroke-width="10"/>
<path d="M770,330 L772,400 M772,352 C782,332 800,322 815,327" stroke="#8e8e8e" fill="none" stroke-width="10"/>
<path d="M850,330 C820,320 800,360 820,390 C830,400 850,395 860,385" stroke="#8e8e8e" fill="none" stroke-width="10"/>
<path d="M845,250 L850,400 M852,332 C880,300 905,310 905,420" stroke="#8e8e8e" fill="none" stroke-width="10"/>
<path d="M340,430 L335,580 C380,600 420,560 390,520 C370,500 340,510 335,530" stroke="#8e8e8e" fill="none" stroke-width="10"/>
<path d="M440,450 L460,585 M420,520 L500,510" stroke="#8e8e8e" fill="none" stroke-width="10"/>
<path d="M520,500 C520,560 540,590 570,560 C580,540 590,520 600,510 C600,560 620,590 650,560 C660,520 660,500 660,480" stroke="#8e8e8e" fill="none" stroke-width="10"/>
</g>
<g stroke="#2e2e6a" stroke-width="1.3" fill="#fff">
<circle cx="832.5" cy="274.5" r="4.6"/>
<circle cx="845.5" cy="341.5" r="4.6"/>
<circle cx="796" cy="355.5" r="4.6"/>
<rect x="788.3" y="405.3" width="8.4" height="8.4" transform="rotate(45 792.5 409.5)"/>
<rect x="830.3" y="412.3" width="8.4" height="8.4" transform="rotate(45 834.5 416.5)"/>
</g>
<path d="M709 545 L718 555 L713 555 L714 560 Z" fill="#111" stroke="#fff" stroke-width="0.5"/>
<circle cx="545" cy="405" r="1" fill="#555"/><circle cx="543" cy="461" r="1.2" fill="#444"/>
</svg>
</div>
<!--/CANVAS-->

<!--RIGHT-->
<div class="a" style="left:1088px;top:153px;width:268px;height:1px;background:#3b3b3b"></div>
<div class="a" style="left:1092px;top:133px;width:124px;height:21px;border:1px solid #3a3a3a;border-bottom:none;border-radius:4px 4px 0 0;background:#434343"></div>
<div class="t" style="left:1103px;top:137px;font-size:11px;color:#e0e0e0">Specific Colour Sel...</div>
<div class="a" style="left:1219px;top:131px;width:137px;height:23px;border:1px solid #3a3a3a;border-bottom:none;border-radius:4px 4px 0 0;background:#4b4b4b"></div>
<div class="t" style="left:1231px;top:136px;font-size:11px;color:#e4e4e4">Advanced Colour Sel...</div>
<svg style="left:1094px;top:156px" width="14" height="14" viewBox="0 0 14 14"><circle cx="7" cy="7" r="6.3" stroke="#d9d9d9" fill="none" stroke-width="1.1"/><rect x="4" y="6.5" width="6" height="4" fill="#d9d9d9"/><path d="M5 6.5 V5 Q5 3 7 3 Q9 3 9 4.5" stroke="#d9d9d9" fill="none" stroke-width="1.2"/></svg>
<div class="t" style="left:1115px;top:156px;font-size:11px;color:#e0e0e0">Advanced Colour Selector</div>
<svg style="left:1317px;top:156px" width="14" height="14" viewBox="0 0 14 14"><rect x="0.8" y="5" width="8" height="8" stroke="#d9d9d9" fill="none" stroke-width="1.2"/><path d="M4.5 5 V1 H13 V9 H9" stroke="#d9d9d9" fill="none" stroke-width="1.2"/></svg><svg style="left:1340px;top:157px" width="12" height="12" viewBox="0 0 12 12"><path d="M1 1 L11 11 M11 1 L1 11" stroke="#d9d9d9" fill="none" stroke-width="1.3"/></svg>
<div class="a" style="left:1339px;top:172px;width:17px;height:253px;background:#3e3e3e"></div>
<svg style="left:1340px;top:173px" width="14" height="14" viewBox="0 0 14 14"><circle cx="7" cy="7" r="5.6" stroke="#d9d9d9" fill="none" stroke-width="1.6"/><path d="M3 3 L11 11" stroke="#d9d9d9" fill="none" stroke-width="1.6"/></svg>
<div class="a" style="left:1339px;top:188px;width:16px;height:15px;background:#000"></div>
<div class="a" style="left:1339px;top:204px;width:16px;height:15px;background:#7e4b33"></div>
<svg style="left:1100px;top:181px" width="16" height="16" viewBox="0 0 16 16"><rect x="0.8" y="0.8" width="14.4" height="14.4" stroke="#d9d9d9" fill="none" stroke-width="1.4"/><path d="M0.8 3.5 H15.2" stroke="#d9d9d9" fill="none" stroke-width="1.4"/><rect x="3" y="5.5" width="2" height="8" fill="#d9d9d9"/><path d="M6.5 6.5 H13 M6.5 9.5 H13 M6.5 12.5 H13" stroke="#d9d9d9" fill="none" stroke-width="1.3"/></svg>
<div class="a" style="left:1117px;top:172.5px;width:197px;height:197px;border-radius:50%;background:conic-gradient(from 0deg,hsl(90,100%,50%),hsl(135,100%,50%),hsl(180,100%,50%),hsl(225,100%,50%),hsl(270,100%,50%),hsl(315,100%,50%),hsl(360,100%,50%),hsl(45,100%,50%),hsl(90,100%,50%));-webkit-mask:radial-gradient(circle,transparent 81.5px,#000 82.5px,#000 98px,transparent 98.5px);mask:radial-gradient(circle,transparent 81.5px,#000 82.5px,#000 98px,transparent 98.5px)"></div>
<svg style="left:1140px;top:185px" width="152" height="132" viewBox="1140 185 152 132"><defs><linearGradient id="th" x1="1144.5" y1="0" x2="1287.5" y2="0" gradientUnits="userSpaceOnUse"><stop offset="0" stop-color="#ffffff"/><stop offset="1" stop-color="#ff6600"/></linearGradient><linearGradient id="tv" x1="0" y1="189" x2="0" y2="312.6" gradientUnits="userSpaceOnUse"><stop offset="0" stop-color="#000" stop-opacity="1"/><stop offset="1" stop-color="#000" stop-opacity="0"/></linearGradient></defs><path d="M1214.5 189 L1287.6 312.6 L1144.7 312.6 Z" fill="url(#th)"/><path d="M1214.5 189 L1287.6 312.6 L1144.7 312.6 Z" fill="url(#tv)"/></svg>
<svg style="left:1208px;top:182.5px" width="13" height="13" viewBox="0 0 13 13"><circle cx="6.5" cy="6.5" r="4.5" fill="none" stroke="#cfcfcf" stroke-width="1"/></svg>
<svg style="left:1120px;top:229px" width="14" height="10" viewBox="0 0 14 10"><path d="M1 1.5 L13 7.5" stroke="#fff" stroke-width="1.2"/><path d="M1 3 L13 9" stroke="#222" stroke-width="0.8"/></svg>
<div class="a" style="left:1092px;top:371px;width:247px;height:10px;background:#000"></div>
<div class="a" style="left:1092px;top:382px;width:247px;height:10px;background:linear-gradient(90deg,#000 0,#000 53%,#2a1414 65%,#8e3b3b 100%)"></div>
<div class="a" style="left:1092px;top:393px;width:247px;height:10px;background:linear-gradient(90deg,#000 0,#000 53%,#1a1a1a 62%,#8a8a8a 100%)"></div>
<div class="a" style="left:1210px;top:370px;width:11px;height:34px;border-left:1.5px solid #c8c8c8;border-right:1.5px solid #c8c8c8"></div>
<div class="a" style="left:1210px;top:380.5px;width:11px;height:1.2px;background:#c8c8c8"></div>
<div class="a" style="left:1210px;top:391.5px;width:11px;height:1.2px;background:#c8c8c8"></div>
<div class="a" style="left:1092px;top:404px;width:247px;height:21px;background:#3f3f3f"></div>
<svg style="left:1093px;top:407px" width="14" height="14" viewBox="0 0 14 14"><path d="M2.5 9.5 A5 5 0 0 1 10 2.5" stroke="#d9d9d9" fill="none" stroke-width="1.8"/><path d="M11.5 4.5 A5 5 0 0 1 4 11.5" stroke="#d9d9d9" fill="none" stroke-width="1.8"/><path d="M0.5 6.5 L4 9.5 L1 12Z" fill="#d9d9d9"/><path d="M13.5 7.5 L10 4.5 L13 2Z" fill="#d9d9d9"/></svg>
<div class="a" style="left:1218px;top:425px;width:17px;height:2px;background:repeating-linear-gradient(90deg,#9a9a9a 0 2px,transparent 2px 3px)"></div>
<div class="a" style="left:1089px;top:423px;width:2px;height:15px;background:repeating-linear-gradient(180deg,#9a9a9a 0 2px,transparent 2px 3px)"></div>
<div class="a" style="left:1088px;top:452px;width:268px;height:1px;background:#3b3b3b"></div>
<div class="a" style="left:1093px;top:429px;width:85px;height:24px;border:1px solid #3a3a3a;border-bottom:none;border-radius:4px 4px 0 0;background:#4b4b4b"></div>
<div class="t" style="left:1103px;top:434px;font-size:11px;color:#e4e4e4">Undo History</div>
<div class="a" style="left:1181px;top:431px;width:66px;height:22px;border:1px solid #3a3a3a;border-bottom:none;border-radius:4px 4px 0 0;background:#434343"></div>
<div class="t" style="left:1191px;top:435px;font-size:11px;color:#e0e0e0">Recorder</div>
<div class="a" style="left:1092px;top:453px;width:264px;height:16px;background:#4d4d4d"></div>
<svg style="left:1094px;top:454px" width="14" height="14" viewBox="0 0 14 14"><circle cx="7" cy="7" r="6.3" stroke="#d9d9d9" fill="none" stroke-width="1.1"/><rect x="4" y="6.5" width="6" height="4" fill="#d9d9d9"/><path d="M5 6.5 V5 Q5 3 7 3 Q9 3 9 4.5" stroke="#d9d9d9" fill="none" stroke-width="1.2"/></svg>
<div class="t" style="left:1115px;top:454px;font-size:11px;color:#e0e0e0">Undo History</div>
<svg style="left:1317px;top:454px" width="14" height="14" viewBox="0 0 14 14"><rect x="0.8" y="5" width="8" height="8" stroke="#d9d9d9" fill="none" stroke-width="1.2"/><path d="M4.5 5 V1 H13 V9 H9" stroke="#d9d9d9" fill="none" stroke-width="1.2"/></svg><svg style="left:1340px;top:455px" width="12" height="12" viewBox="0 0 12 12"><path d="M1 1 L11 11 M11 1 L1 11" stroke="#d9d9d9" fill="none" stroke-width="1.3"/></svg>
<div class="a" style="left:1092px;top:469px;width:250px;height:259px;background:#383838;overflow:hidden">
<div class="a" style="left:1px;top:224px;width:249px;height:34px;background:#53738d"></div>
<svg style="left:3px;top:-13px" width="32" height="32" viewBox="0 0 32 32"><rect width="32" height="32" fill="#cacaca"/><circle cx="16.6" cy="25.0" r="0.5" fill="#1a1a1a" opacity="0.9"/><circle cx="8.2" cy="16.7" r="0.8" fill="#1a1a1a" opacity="0.5"/><circle cx="21.7" cy="10.1" r="0.8" fill="#1a1a1a" opacity="0.5"/><circle cx="19.4" cy="26.9" r="0.8" fill="#1a1a1a" opacity="0.9"/><circle cx="7.5" cy="16.7" r="0.45" fill="#1a1a1a" opacity="0.5"/><circle cx="8.0" cy="2.9" r="0.8" fill="#1a1a1a" opacity="0.7"/><circle cx="15.5" cy="3.1" r="0.4" fill="#1a1a1a" opacity="0.5"/><circle cx="16.4" cy="4.3" r="0.5" fill="#1a1a1a" opacity="0.5"/><circle cx="18.1" cy="9.3" r="0.8" fill="#1a1a1a" opacity="0.9"/><circle cx="21.2" cy="11.2" r="0.6" fill="#1a1a1a" opacity="0.7"/><circle cx="14.9" cy="4.6" r="0.45" fill="#1a1a1a" opacity="0.7"/><circle cx="18.7" cy="17.5" r="0.45" fill="#1a1a1a" opacity="0.7"/><circle cx="22.3" cy="13.2" r="0.5" fill="#1a1a1a" opacity="0.7"/><circle cx="10.1" cy="14.6" r="0.5" fill="#1a1a1a" opacity="0.9"/><circle cx="9.2" cy="9.6" r="0.5" fill="#1a1a1a" opacity="0.9"/><circle cx="17.2" cy="14.0" r="0.5" fill="#1a1a1a" opacity="0.9"/><circle cx="14.3" cy="10.8" r="0.5" fill="#1a1a1a" opacity="0.9"/><circle cx="22.4" cy="9.1" r="0.45" fill="#1a1a1a" opacity="0.9"/><circle cx="19.8" cy="5.9" r="0.5" fill="#1a1a1a" opacity="0.5"/><circle cx="26.8" cy="21.1" r="0.6" fill="#1a1a1a" opacity="0.5"/><circle cx="14.8" cy="17.5" r="0.45" fill="#1a1a1a" opacity="0.5"/><circle cx="13.2" cy="28.2" r="0.4" fill="#1a1a1a" opacity="0.5"/><circle cx="8.0" cy="6.7" r="0.6" fill="#1a1a1a" opacity="0.9"/><circle cx="9.5" cy="9.8" r="0.5" fill="#1a1a1a" opacity="0.9"/><circle cx="16.1" cy="17.2" r="0.4" fill="#1a1a1a" opacity="0.5"/><circle cx="21.8" cy="21.2" r="0.45" fill="#1a1a1a" opacity="0.7"/><circle cx="14.8" cy="21.0" r="0.4" fill="#1a1a1a" opacity="0.7"/><circle cx="10.1" cy="31.0" r="0.6" fill="#1a1a1a" opacity="0.7"/><circle cx="9.0" cy="17.4" r="0.8" fill="#1a1a1a" opacity="0.9"/><circle cx="8.2" cy="11.0" r="0.8" fill="#1a1a1a" opacity="0.7"/><circle cx="7.3" cy="20.4" r="0.45" fill="#1a1a1a" opacity="0.7"/><circle cx="11.7" cy="17.4" r="0.5" fill="#1a1a1a" opacity="0.9"/><circle cx="10.4" cy="27.0" r="0.8" fill="#1a1a1a" opacity="0.7"/><circle cx="24.2" cy="16.4" r="0.45" fill="#1a1a1a" opacity="0.5"/><circle cx="12.4" cy="9.6" r="0.5" fill="#1a1a1a" opacity="0.9"/><circle cx="23.1" cy="9.6" r="0.5" fill="#1a1a1a" opacity="0.9"/><circle cx="8.0" cy="15.7" r="0.4" fill="#1a1a1a" opacity="0.7"/><circle cx="16.0" cy="23.8" r="0.8" fill="#1a1a1a" opacity="0.9"/><circle cx="13.6" cy="21.9" r="0.5" fill="#1a1a1a" opacity="0.7"/><circle cx="18.6" cy="9.8" r="0.6" fill="#1a1a1a" opacity="0.5"/><circle cx="16.2" cy="13.1" r="0.8" fill="#1a1a1a" opacity="0.9"/><circle cx="15.5" cy="8.1" r="0.45" fill="#1a1a1a" opacity="0.9"/><circle cx="17.5" cy="9.4" r="0.45" fill="#1a1a1a" opacity="0.9"/><circle cx="7.5" cy="19.9" r="0.4" fill="#1a1a1a" opacity="0.9"/><circle cx="13.6" cy="21.5" r="0.45" fill="#1a1a1a" opacity="0.7"/><circle cx="21.6" cy="1.0" r="0.4" fill="#1a1a1a" opacity="0.7"/><circle cx="15.8" cy="9.4" r="0.8" fill="#1a1a1a" opacity="0.7"/><circle cx="14.6" cy="29.0" r="0.4" fill="#1a1a1a" opacity="0.9"/><circle cx="21.0" cy="13.2" r="0.8" fill="#1a1a1a" opacity="0.5"/><circle cx="19.6" cy="9.5" r="0.4" fill="#1a1a1a" opacity="0.9"/><circle cx="14.2" cy="18.5" r="0.5" fill="#1a1a1a" opacity="0.9"/><circle cx="17.3" cy="8.9" r="0.5" fill="#1a1a1a" opacity="0.9"/><circle cx="10.6" cy="19.2" r="0.6" fill="#1a1a1a" opacity="0.5"/><circle cx="19.1" cy="12.8" r="0.4" fill="#1a1a1a" opacity="0.7"/><circle cx="27.6" cy="9.3" r="0.8" fill="#1a1a1a" opacity="0.7"/><circle cx="1.0" cy="6.6" r="0.45" fill="#1a1a1a" opacity="0.5"/><circle cx="15.7" cy="1.0" r="0.8" fill="#1a1a1a" opacity="0.7"/><circle cx="3.9" cy="10.4" r="0.4" fill="#1a1a1a" opacity="0.9"/><circle cx="19.0" cy="14.3" r="0.45" fill="#1a1a1a" opacity="0.5"/><circle cx="26.6" cy="18.2" r="0.8" fill="#1a1a1a" opacity="0.5"/><circle cx="26.2" cy="4.6" r="0.8" fill="#1a1a1a" opacity="0.5"/><circle cx="25.9" cy="16.1" r="0.45" fill="#1a1a1a" opacity="0.9"/><circle cx="13.3" cy="26.2" r="0.8" fill="#1a1a1a" opacity="0.9"/><circle cx="3.8" cy="24.8" r="0.8" fill="#1a1a1a" opacity="0.5"/><circle cx="13.5" cy="20.1" r="0.8" fill="#1a1a1a" opacity="0.7"/><circle cx="16.8" cy="12.4" r="0.45" fill="#1a1a1a" opacity="0.5"/><circle cx="25.0" cy="26.6" r="0.4" fill="#1a1a1a" opacity="0.5"/><circle cx="16.3" cy="21.4" r="0.45" fill="#1a1a1a" opacity="0.5"/><circle cx="8.2" cy="15.8" r="0.6" fill="#1a1a1a" opacity="0.5"/><circle cx="16.2" cy="9.0" r="0.8" fill="#1a1a1a" opacity="0.9"/><circle cx="14.1" cy="14.7" r="0.5" fill="#1a1a1a" opacity="0.5"/><circle cx="22.5" cy="4.2" r="0.4" fill="#1a1a1a" opacity="0.5"/><circle cx="22.6" cy="17.8" r="0.4" fill="#1a1a1a" opacity="0.9"/><circle cx="22.1" cy="19.9" r="0.5" fill="#1a1a1a" opacity="0.5"/><circle cx="13.8" cy="21.8" r="0.6" fill="#1a1a1a" opacity="0.9"/><circle cx="14.4" cy="20.9" r="0.5" fill="#1a1a1a" opacity="0.7"/><circle cx="21.4" cy="22.1" r="0.6" fill="#1a1a1a" opacity="0.5"/><circle cx="14.4" cy="14.0" r="0.6" fill="#1a1a1a" opacity="0.9"/><circle cx="11.6" cy="6.9" r="0.4" fill="#1a1a1a" opacity="0.9"/><circle cx="17.5" cy="13.3" r="0.6" fill="#1a1a1a" opacity="0.9"/><circle cx="10.2" cy="31.0" r="0.6" fill="#1a1a1a" opacity="0.7"/><circle cx="20.2" cy="15.6" r="0.5" fill="#1a1a1a" opacity="0.9"/><circle cx="6.9" cy="7.3" r="0.45" fill="#1a1a1a" opacity="0.7"/><circle cx="17.0" cy="16.4" r="0.5" fill="#1a1a1a" opacity="0.7"/><circle cx="23.5" cy="13.0" r="0.5" fill="#1a1a1a" opacity="0.5"/><circle cx="13.0" cy="15.9" r="0.8" fill="#1a1a1a" opacity="0.7"/><circle cx="11.2" cy="3.7" r="0.8" fill="#1a1a1a" opacity="0.9"/><circle cx="22.4" cy="21.4" r="0.4" fill="#1a1a1a" opacity="0.7"/><circle cx="22.4" cy="25.8" r="0.4" fill="#1a1a1a" opacity="0.9"/><circle cx="18.3" cy="17.0" r="0.6" fill="#1a1a1a" opacity="0.5"/><circle cx="8" cy="5" r="0.9" fill="#000"/><circle cx="16" cy="3" r="0.9" fill="#000"/><circle cx="22" cy="7" r="0.9" fill="#000"/><circle cx="12" cy="10" r="0.9" fill="#000"/><circle cx="20" cy="13" r="0.9" fill="#000"/></svg>
<div class="t" style="left:41px;top:-4px;font-size:11.2px;color:#e2e2e2">Change Segment</div>
<svg style="left:3px;top:21px" width="32" height="32" viewBox="0 0 32 32"><rect width="32" height="32" fill="#cacaca"/><circle cx="16.6" cy="25.0" r="0.5" fill="#1a1a1a" opacity="0.9"/><circle cx="8.2" cy="16.7" r="0.8" fill="#1a1a1a" opacity="0.5"/><circle cx="21.7" cy="10.1" r="0.8" fill="#1a1a1a" opacity="0.5"/><circle cx="19.4" cy="26.9" r="0.8" fill="#1a1a1a" opacity="0.9"/><circle cx="7.5" cy="16.7" r="0.45" fill="#1a1a1a" opacity="0.5"/><circle cx="8.0" cy="2.9" r="0.8" fill="#1a1a1a" opacity="0.7"/><circle cx="15.5" cy="3.1" r="0.4" fill="#1a1a1a" opacity="0.5"/><circle cx="16.4" cy="4.3" r="0.5" fill="#1a1a1a" opacity="0.5"/><circle cx="18.1" cy="9.3" r="0.8" fill="#1a1a1a" opacity="0.9"/><circle cx="21.2" cy="11.2" r="0.6" fill="#1a1a1a" opacity="0.7"/><circle cx="14.9" cy="4.6" r="0.45" fill="#1a1a1a" opacity="0.7"/><circle cx="18.7" cy="17.5" r="0.45" fill="#1a1a1a" opacity="0.7"/><circle cx="22.3" cy="13.2" r="0.5" fill="#1a1a1a" opacity="0.7"/><circle cx="10.1" cy="14.6" r="0.5" fill="#1a1a1a" opacity="0.9"/><circle cx="9.2" cy="9.6" r="0.5" fill="#1a1a1a" opacity="0.9"/><circle cx="17.2" cy="14.0" r="0.5" fill="#1a1a1a" opacity="0.9"/><circle cx="14.3" cy="10.8" r="0.5" fill="#1a1a1a" opacity="0.9"/><circle cx="22.4" cy="9.1" r="0.45" fill="#1a1a1a" opacity="0.9"/><circle cx="19.8" cy="5.9" r="0.5" fill="#1a1a1a" opacity="0.5"/><circle cx="26.8" cy="21.1" r="0.6" fill="#1a1a1a" opacity="0.5"/><circle cx="14.8" cy="17.5" r="0.45" fill="#1a1a1a" opacity="0.5"/><circle cx="13.2" cy="28.2" r="0.4" fill="#1a1a1a" opacity="0.5"/><circle cx="8.0" cy="6.7" r="0.6" fill="#1a1a1a" opacity="0.9"/><circle cx="9.5" cy="9.8" r="0.5" fill="#1a1a1a" opacity="0.9"/><circle cx="16.1" cy="17.2" r="0.4" fill="#1a1a1a" opacity="0.5"/><circle cx="21.8" cy="21.2" r="0.45" fill="#1a1a1a" opacity="0.7"/><circle cx="14.8" cy="21.0" r="0.4" fill="#1a1a1a" opacity="0.7"/><circle cx="10.1" cy="31.0" r="0.6" fill="#1a1a1a" opacity="0.7"/><circle cx="9.0" cy="17.4" r="0.8" fill="#1a1a1a" opacity="0.9"/><circle cx="8.2" cy="11.0" r="0.8" fill="#1a1a1a" opacity="0.7"/><circle cx="7.3" cy="20.4" r="0.45" fill="#1a1a1a" opacity="0.7"/><circle cx="11.7" cy="17.4" r="0.5" fill="#1a1a1a" opacity="0.9"/><circle cx="10.4" cy="27.0" r="0.8" fill="#1a1a1a" opacity="0.7"/><circle cx="24.2" cy="16.4" r="0.45" fill="#1a1a1a" opacity="0.5"/><circle cx="12.4" cy="9.6" r="0.5" fill="#1a1a1a" opacity="0.9"/><circle cx="23.1" cy="9.6" r="0.5" fill="#1a1a1a" opacity="0.9"/><circle cx="8.0" cy="15.7" r="0.4" fill="#1a1a1a" opacity="0.7"/><circle cx="16.0" cy="23.8" r="0.8" fill="#1a1a1a" opacity="0.9"/><circle cx="13.6" cy="21.9" r="0.5" fill="#1a1a1a" opacity="0.7"/><circle cx="18.6" cy="9.8" r="0.6" fill="#1a1a1a" opacity="0.5"/><circle cx="16.2" cy="13.1" r="0.8" fill="#1a1a1a" opacity="0.9"/><circle cx="15.5" cy="8.1" r="0.45" fill="#1a1a1a" opacity="0.9"/><circle cx="17.5" cy="9.4" r="0.45" fill="#1a1a1a" opacity="0.9"/><circle cx="7.5" cy="19.9" r="0.4" fill="#1a1a1a" opacity="0.9"/><circle cx="13.6" cy="21.5" r="0.45" fill="#1a1a1a" opacity="0.7"/><circle cx="21.6" cy="1.0" r="0.4" fill="#1a1a1a" opacity="0.7"/><circle cx="15.8" cy="9.4" r="0.8" fill="#1a1a1a" opacity="0.7"/><circle cx="14.6" cy="29.0" r="0.4" fill="#1a1a1a" opacity="0.9"/><circle cx="21.0" cy="13.2" r="0.8" fill="#1a1a1a" opacity="0.5"/><circle cx="19.6" cy="9.5" r="0.4" fill="#1a1a1a" opacity="0.9"/><circle cx="14.2" cy="18.5" r="0.5" fill="#1a1a1a" opacity="0.9"/><circle cx="17.3" cy="8.9" r="0.5" fill="#1a1a1a" opacity="0.9"/><circle cx="10.6" cy="19.2" r="0.6" fill="#1a1a1a" opacity="0.5"/><circle cx="19.1" cy="12.8" r="0.4" fill="#1a1a1a" opacity="0.7"/><circle cx="27.6" cy="9.3" r="0.8" fill="#1a1a1a" opacity="0.7"/><circle cx="1.0" cy="6.6" r="0.45" fill="#1a1a1a" opacity="0.5"/><circle cx="15.7" cy="1.0" r="0.8" fill="#1a1a1a" opacity="0.7"/><circle cx="3.9" cy="10.4" r="0.4" fill="#1a1a1a" opacity="0.9"/><circle cx="19.0" cy="14.3" r="0.45" fill="#1a1a1a" opacity="0.5"/><circle cx="26.6" cy="18.2" r="0.8" fill="#1a1a1a" opacity="0.5"/><circle cx="26.2" cy="4.6" r="0.8" fill="#1a1a1a" opacity="0.5"/><circle cx="25.9" cy="16.1" r="0.45" fill="#1a1a1a" opacity="0.9"/><circle cx="13.3" cy="26.2" r="0.8" fill="#1a1a1a" opacity="0.9"/><circle cx="3.8" cy="24.8" r="0.8" fill="#1a1a1a" opacity="0.5"/><circle cx="13.5" cy="20.1" r="0.8" fill="#1a1a1a" opacity="0.7"/><circle cx="16.8" cy="12.4" r="0.45" fill="#1a1a1a" opacity="0.5"/><circle cx="25.0" cy="26.6" r="0.4" fill="#1a1a1a" opacity="0.5"/><circle cx="16.3" cy="21.4" r="0.45" fill="#1a1a1a" opacity="0.5"/><circle cx="8.2" cy="15.8" r="0.6" fill="#1a1a1a" opacity="0.5"/><circle cx="16.2" cy="9.0" r="0.8" fill="#1a1a1a" opacity="0.9"/><circle cx="14.1" cy="14.7" r="0.5" fill="#1a1a1a" opacity="0.5"/><circle cx="22.5" cy="4.2" r="0.4" fill="#1a1a1a" opacity="0.5"/><circle cx="22.6" cy="17.8" r="0.4" fill="#1a1a1a" opacity="0.9"/><circle cx="22.1" cy="19.9" r="0.5" fill="#1a1a1a" opacity="0.5"/><circle cx="13.8" cy="21.8" r="0.6" fill="#1a1a1a" opacity="0.9"/><circle cx="14.4" cy="20.9" r="0.5" fill="#1a1a1a" opacity="0.7"/><circle cx="21.4" cy="22.1" r="0.6" fill="#1a1a1a" opacity="0.5"/><circle cx="14.4" cy="14.0" r="0.6" fill="#1a1a1a" opacity="0.9"/><circle cx="11.6" cy="6.9" r="0.4" fill="#1a1a1a" opacity="0.9"/><circle cx="17.5" cy="13.3" r="0.6" fill="#1a1a1a" opacity="0.9"/><circle cx="10.2" cy="31.0" r="0.6" fill="#1a1a1a" opacity="0.7"/><circle cx="20.2" cy="15.6" r="0.5" fill="#1a1a1a" opacity="0.9"/><circle cx="6.9" cy="7.3" r="0.45" fill="#1a1a1a" opacity="0.7"/><circle cx="17.0" cy="16.4" r="0.5" fill="#1a1a1a" opacity="0.7"/><circle cx="23.5" cy="13.0" r="0.5" fill="#1a1a1a" opacity="0.5"/><circle cx="13.0" cy="15.9" r="0.8" fill="#1a1a1a" opacity="0.7"/><circle cx="11.2" cy="3.7" r="0.8" fill="#1a1a1a" opacity="0.9"/><circle cx="22.4" cy="21.4" r="0.4" fill="#1a1a1a" opacity="0.7"/><circle cx="22.4" cy="25.8" r="0.4" fill="#1a1a1a" opacity="0.9"/><circle cx="18.3" cy="17.0" r="0.6" fill="#1a1a1a" opacity="0.5"/><circle cx="8" cy="5" r="0.9" fill="#000"/><circle cx="16" cy="3" r="0.9" fill="#000"/><circle cx="22" cy="7" r="0.9" fill="#000"/><circle cx="12" cy="10" r="0.9" fill="#000"/><circle cx="20" cy="13" r="0.9" fill="#000"/></svg>
<div class="t" style="left:41px;top:30px;font-size:11.2px;color:#e2e2e2">Move control point</div>
<svg style="left:3px;top:55px" width="32" height="32" viewBox="0 0 32 32"><rect width="32" height="32" fill="#cacaca"/><circle cx="16.6" cy="25.0" r="0.5" fill="#1a1a1a" opacity="0.9"/><circle cx="8.2" cy="16.7" r="0.8" fill="#1a1a1a" opacity="0.5"/><circle cx="21.7" cy="10.1" r="0.8" fill="#1a1a1a" opacity="0.5"/><circle cx="19.4" cy="26.9" r="0.8" fill="#1a1a1a" opacity="0.9"/><circle cx="7.5" cy="16.7" r="0.45" fill="#1a1a1a" opacity="0.5"/><circle cx="8.0" cy="2.9" r="0.8" fill="#1a1a1a" opacity="0.7"/><circle cx="15.5" cy="3.1" r="0.4" fill="#1a1a1a" opacity="0.5"/><circle cx="16.4" cy="4.3" r="0.5" fill="#1a1a1a" opacity="0.5"/><circle cx="18.1" cy="9.3" r="0.8" fill="#1a1a1a" opacity="0.9"/><circle cx="21.2" cy="11.2" r="0.6" fill="#1a1a1a" opacity="0.7"/><circle cx="14.9" cy="4.6" r="0.45" fill="#1a1a1a" opacity="0.7"/><circle cx="18.7" cy="17.5" r="0.45" fill="#1a1a1a" opacity="0.7"/><circle cx="22.3" cy="13.2" r="0.5" fill="#1a1a1a" opacity="0.7"/><circle cx="10.1" cy="14.6" r="0.5" fill="#1a1a1a" opacity="0.9"/><circle cx="9.2" cy="9.6" r="0.5" fill="#1a1a1a" opacity="0.9"/><circle cx="17.2" cy="14.0" r="0.5" fill="#1a1a1a" opacity="0.9"/><circle cx="14.3" cy="10.8" r="0.5" fill="#1a1a1a" opacity="0.9"/><circle cx="22.4" cy="9.1" r="0.45" fill="#1a1a1a" opacity="0.9"/><circle cx="19.8" cy="5.9" r="0.5" fill="#1a1a1a" opacity="0.5"/><circle cx="26.8" cy="21.1" r="0.6" fill="#1a1a1a" opacity="0.5"/><circle cx="14.8" cy="17.5" r="0.45" fill="#1a1a1a" opacity="0.5"/><circle cx="13.2" cy="28.2" r="0.4" fill="#1a1a1a" opacity="0.5"/><circle cx="8.0" cy="6.7" r="0.6" fill="#1a1a1a" opacity="0.9"/><circle cx="9.5" cy="9.8" r="0.5" fill="#1a1a1a" opacity="0.9"/><circle cx="16.1" cy="17.2" r="0.4" fill="#1a1a1a" opacity="0.5"/><circle cx="21.8" cy="21.2" r="0.45" fill="#1a1a1a" opacity="0.7"/><circle cx="14.8" cy="21.0" r="0.4" fill="#1a1a1a" opacity="0.7"/><circle cx="10.1" cy="31.0" r="0.6" fill="#1a1a1a" opacity="0.7"/><circle cx="9.0" cy="17.4" r="0.8" fill="#1a1a1a" opacity="0.9"/><circle cx="8.2" cy="11.0" r="0.8" fill="#1a1a1a" opacity="0.7"/><circle cx="7.3" cy="20.4" r="0.45" fill="#1a1a1a" opacity="0.7"/><circle cx="11.7" cy="17.4" r="0.5" fill="#1a1a1a" opacity="0.9"/><circle cx="10.4" cy="27.0" r="0.8" fill="#1a1a1a" opacity="0.7"/><circle cx="24.2" cy="16.4" r="0.45" fill="#1a1a1a" opacity="0.5"/><circle cx="12.4" cy="9.6" r="0.5" fill="#1a1a1a" opacity="0.9"/><circle cx="23.1" cy="9.6" r="0.5" fill="#1a1a1a" opacity="0.9"/><circle cx="8.0" cy="15.7" r="0.4" fill="#1a1a1a" opacity="0.7"/><circle cx="16.0" cy="23.8" r="0.8" fill="#1a1a1a" opacity="0.9"/><circle cx="13.6" cy="21.9" r="0.5" fill="#1a1a1a" opacity="0.7"/><circle cx="18.6" cy="9.8" r="0.6" fill="#1a1a1a" opacity="0.5"/><circle cx="16.2" cy="13.1" r="0.8" fill="#1a1a1a" opacity="0.9"/><circle cx="15.5" cy="8.1" r="0.45" fill="#1a1a1a" opacity="0.9"/><circle cx="17.5" cy="9.4" r="0.45" fill="#1a1a1a" opacity="0.9"/><circle cx="7.5" cy="19.9" r="0.4" fill="#1a1a1a" opacity="0.9"/><circle cx="13.6" cy="21.5" r="0.45" fill="#1a1a1a" opacity="0.7"/><circle cx="21.6" cy="1.0" r="0.4" fill="#1a1a1a" opacity="0.7"/><circle cx="15.8" cy="9.4" r="0.8" fill="#1a1a1a" opacity="0.7"/><circle cx="14.6" cy="29.0" r="0.4" fill="#1a1a1a" opacity="0.9"/><circle cx="21.0" cy="13.2" r="0.8" fill="#1a1a1a" opacity="0.5"/><circle cx="19.6" cy="9.5" r="0.4" fill="#1a1a1a" opacity="0.9"/><circle cx="14.2" cy="18.5" r="0.5" fill="#1a1a1a" opacity="0.9"/><circle cx="17.3" cy="8.9" r="0.5" fill="#1a1a1a" opacity="0.9"/><circle cx="10.6" cy="19.2" r="0.6" fill="#1a1a1a" opacity="0.5"/><circle cx="19.1" cy="12.8" r="0.4" fill="#1a1a1a" opacity="0.7"/><circle cx="27.6" cy="9.3" r="0.8" fill="#1a1a1a" opacity="0.7"/><circle cx="1.0" cy="6.6" r="0.45" fill="#1a1a1a" opacity="0.5"/><circle cx="15.7" cy="1.0" r="0.8" fill="#1a1a1a" opacity="0.7"/><circle cx="3.9" cy="10.4" r="0.4" fill="#1a1a1a" opacity="0.9"/><circle cx="19.0" cy="14.3" r="0.45" fill="#1a1a1a" opacity="0.5"/><circle cx="26.6" cy="18.2" r="0.8" fill="#1a1a1a" opacity="0.5"/><circle cx="26.2" cy="4.6" r="0.8" fill="#1a1a1a" opacity="0.5"/><circle cx="25.9" cy="16.1" r="0.45" fill="#1a1a1a" opacity="0.9"/><circle cx="13.3" cy="26.2" r="0.8" fill="#1a1a1a" opacity="0.9"/><circle cx="3.8" cy="24.8" r="0.8" fill="#1a1a1a" opacity="0.5"/><circle cx="13.5" cy="20.1" r="0.8" fill="#1a1a1a" opacity="0.7"/><circle cx="16.8" cy="12.4" r="0.45" fill="#1a1a1a" opacity="0.5"/><circle cx="25.0" cy="26.6" r="0.4" fill="#1a1a1a" opacity="0.5"/><circle cx="16.3" cy="21.4" r="0.45" fill="#1a1a1a" opacity="0.5"/><circle cx="8.2" cy="15.8" r="0.6" fill="#1a1a1a" opacity="0.5"/><circle cx="16.2" cy="9.0" r="0.8" fill="#1a1a1a" opacity="0.9"/><circle cx="14.1" cy="14.7" r="0.5" fill="#1a1a1a" opacity="0.5"/><circle cx="22.5" cy="4.2" r="0.4" fill="#1a1a1a" opacity="0.5"/><circle cx="22.6" cy="17.8" r="0.4" fill="#1a1a1a" opacity="0.9"/><circle cx="22.1" cy="19.9" r="0.5" fill="#1a1a1a" opacity="0.5"/><circle cx="13.8" cy="21.8" r="0.6" fill="#1a1a1a" opacity="0.9"/><circle cx="14.4" cy="20.9" r="0.5" fill="#1a1a1a" opacity="0.7"/><circle cx="21.4" cy="22.1" r="0.6" fill="#1a1a1a" opacity="0.5"/><circle cx="14.4" cy="14.0" r="0.6" fill="#1a1a1a" opacity="0.9"/><circle cx="11.6" cy="6.9" r="0.4" fill="#1a1a1a" opacity="0.9"/><circle cx="17.5" cy="13.3" r="0.6" fill="#1a1a1a" opacity="0.9"/><circle cx="10.2" cy="31.0" r="0.6" fill="#1a1a1a" opacity="0.7"/><circle cx="20.2" cy="15.6" r="0.5" fill="#1a1a1a" opacity="0.9"/><circle cx="6.9" cy="7.3" r="0.45" fill="#1a1a1a" opacity="0.7"/><circle cx="17.0" cy="16.4" r="0.5" fill="#1a1a1a" opacity="0.7"/><circle cx="23.5" cy="13.0" r="0.5" fill="#1a1a1a" opacity="0.5"/><circle cx="13.0" cy="15.9" r="0.8" fill="#1a1a1a" opacity="0.7"/><circle cx="11.2" cy="3.7" r="0.8" fill="#1a1a1a" opacity="0.9"/><circle cx="22.4" cy="21.4" r="0.4" fill="#1a1a1a" opacity="0.7"/><circle cx="22.4" cy="25.8" r="0.4" fill="#1a1a1a" opacity="0.9"/><circle cx="18.3" cy="17.0" r="0.6" fill="#1a1a1a" opacity="0.5"/><circle cx="8" cy="5" r="0.9" fill="#000"/><circle cx="16" cy="3" r="0.9" fill="#000"/><circle cx="22" cy="7" r="0.9" fill="#000"/><circle cx="12" cy="10" r="0.9" fill="#000"/><circle cx="20" cy="13" r="0.9" fill="#000"/></svg>
<div class="t" style="left:41px;top:64px;font-size:11.2px;color:#e2e2e2">Move control point</div>
<svg style="left:3px;top:89px" width="32" height="32" viewBox="0 0 32 32"><rect width="32" height="32" fill="#cacaca"/><circle cx="16.6" cy="25.0" r="0.5" fill="#1a1a1a" opacity="0.9"/><circle cx="8.2" cy="16.7" r="0.8" fill="#1a1a1a" opacity="0.5"/><circle cx="21.7" cy="10.1" r="0.8" fill="#1a1a1a" opacity="0.5"/><circle cx="19.4" cy="26.9" r="0.8" fill="#1a1a1a" opacity="0.9"/><circle cx="7.5" cy="16.7" r="0.45" fill="#1a1a1a" opacity="0.5"/><circle cx="8.0" cy="2.9" r="0.8" fill="#1a1a1a" opacity="0.7"/><circle cx="15.5" cy="3.1" r="0.4" fill="#1a1a1a" opacity="0.5"/><circle cx="16.4" cy="4.3" r="0.5" fill="#1a1a1a" opacity="0.5"/><circle cx="18.1" cy="9.3" r="0.8" fill="#1a1a1a" opacity="0.9"/><circle cx="21.2" cy="11.2" r="0.6" fill="#1a1a1a" opacity="0.7"/><circle cx="14.9" cy="4.6" r="0.45" fill="#1a1a1a" opacity="0.7"/><circle cx="18.7" cy="17.5" r="0.45" fill="#1a1a1a" opacity="0.7"/><circle cx="22.3" cy="13.2" r="0.5" fill="#1a1a1a" opacity="0.7"/><circle cx="10.1" cy="14.6" r="0.5" fill="#1a1a1a" opacity="0.9"/><circle cx="9.2" cy="9.6" r="0.5" fill="#1a1a1a" opacity="0.9"/><circle cx="17.2" cy="14.0" r="0.5" fill="#1a1a1a" opacity="0.9"/><circle cx="14.3" cy="10.8" r="0.5" fill="#1a1a1a" opacity="0.9"/><circle cx="22.4" cy="9.1" r="0.45" fill="#1a1a1a" opacity="0.9"/><circle cx="19.8" cy="5.9" r="0.5" fill="#1a1a1a" opacity="0.5"/><circle cx="26.8" cy="21.1" r="0.6" fill="#1a1a1a" opacity="0.5"/><circle cx="14.8" cy="17.5" r="0.45" fill="#1a1a1a" opacity="0.5"/><circle cx="13.2" cy="28.2" r="0.4" fill="#1a1a1a" opacity="0.5"/><circle cx="8.0" cy="6.7" r="0.6" fill="#1a1a1a" opacity="0.9"/><circle cx="9.5" cy="9.8" r="0.5" fill="#1a1a1a" opacity="0.9"/><circle cx="16.1" cy="17.2" r="0.4" fill="#1a1a1a" opacity="0.5"/><circle cx="21.8" cy="21.2" r="0.45" fill="#1a1a1a" opacity="0.7"/><circle cx="14.8" cy="21.0" r="0.4" fill="#1a1a1a" opacity="0.7"/><circle cx="10.1" cy="31.0" r="0.6" fill="#1a1a1a" opacity="0.7"/><circle cx="9.0" cy="17.4" r="0.8" fill="#1a1a1a" opacity="0.9"/><circle cx="8.2" cy="11.0" r="0.8" fill="#1a1a1a" opacity="0.7"/><circle cx="7.3" cy="20.4" r="0.45" fill="#1a1a1a" opacity="0.7"/><circle cx="11.7" cy="17.4" r="0.5" fill="#1a1a1a" opacity="0.9"/><circle cx="10.4" cy="27.0" r="0.8" fill="#1a1a1a" opacity="0.7"/><circle cx="24.2" cy="16.4" r="0.45" fill="#1a1a1a" opacity="0.5"/><circle cx="12.4" cy="9.6" r="0.5" fill="#1a1a1a" opacity="0.9"/><circle cx="23.1" cy="9.6" r="0.5" fill="#1a1a1a" opacity="0.9"/><circle cx="8.0" cy="15.7" r="0.4" fill="#1a1a1a" opacity="0.7"/><circle cx="16.0" cy="23.8" r="0.8" fill="#1a1a1a" opacity="0.9"/><circle cx="13.6" cy="21.9" r="0.5" fill="#1a1a1a" opacity="0.7"/><circle cx="18.6" cy="9.8" r="0.6" fill="#1a1a1a" opacity="0.5"/><circle cx="16.2" cy="13.1" r="0.8" fill="#1a1a1a" opacity="0.9"/><circle cx="15.5" cy="8.1" r="0.45" fill="#1a1a1a" opacity="0.9"/><circle cx="17.5" cy="9.4" r="0.45" fill="#1a1a1a" opacity="0.9"/><circle cx="7.5" cy="19.9" r="0.4" fill="#1a1a1a" opacity="0.9"/><circle cx="13.6" cy="21.5" r="0.45" fill="#1a1a1a" opacity="0.7"/><circle cx="21.6" cy="1.0" r="0.4" fill="#1a1a1a" opacity="0.7"/><circle cx="15.8" cy="9.4" r="0.8" fill="#1a1a1a" opacity="0.7"/><circle cx="14.6" cy="29.0" r="0.4" fill="#1a1a1a" opacity="0.9"/><circle cx="21.0" cy="13.2" r="0.8" fill="#1a1a1a" opacity="0.5"/><circle cx="19.6" cy="9.5" r="0.4" fill="#1a1a1a" opacity="0.9"/><circle cx="14.2" cy="18.5" r="0.5" fill="#1a1a1a" opacity="0.9"/><circle cx="17.3" cy="8.9" r="0.5" fill="#1a1a1a" opacity="0.9"/><circle cx="10.6" cy="19.2" r="0.6" fill="#1a1a1a" opacity="0.5"/><circle cx="19.1" cy="12.8" r="0.4" fill="#1a1a1a" opacity="0.7"/><circle cx="27.6" cy="9.3" r="0.8" fill="#1a1a1a" opacity="0.7"/><circle cx="1.0" cy="6.6" r="0.45" fill="#1a1a1a" opacity="0.5"/><circle cx="15.7" cy="1.0" r="0.8" fill="#1a1a1a" opacity="0.7"/><circle cx="3.9" cy="10.4" r="0.4" fill="#1a1a1a" opacity="0.9"/><circle cx="19.0" cy="14.3" r="0.45" fill="#1a1a1a" opacity="0.5"/><circle cx="26.6" cy="18.2" r="0.8" fill="#1a1a1a" opacity="0.5"/><circle cx="26.2" cy="4.6" r="0.8" fill="#1a1a1a" opacity="0.5"/><circle cx="25.9" cy="16.1" r="0.45" fill="#1a1a1a" opacity="0.9"/><circle cx="13.3" cy="26.2" r="0.8" fill="#1a1a1a" opacity="0.9"/><circle cx="3.8" cy="24.8" r="0.8" fill="#1a1a1a" opacity="0.5"/><circle cx="13.5" cy="20.1" r="0.8" fill="#1a1a1a" opacity="0.7"/><circle cx="16.8" cy="12.4" r="0.45" fill="#1a1a1a" opacity="0.5"/><circle cx="25.0" cy="26.6" r="0.4" fill="#1a1a1a" opacity="0.5"/><circle cx="16.3" cy="21.4" r="0.45" fill="#1a1a1a" opacity="0.5"/><circle cx="8.2" cy="15.8" r="0.6" fill="#1a1a1a" opacity="0.5"/><circle cx="16.2" cy="9.0" r="0.8" fill="#1a1a1a" opacity="0.9"/><circle cx="14.1" cy="14.7" r="0.5" fill="#1a1a1a" opacity="0.5"/><circle cx="22.5" cy="4.2" r="0.4" fill="#1a1a1a" opacity="0.5"/><circle cx="22.6" cy="17.8" r="0.4" fill="#1a1a1a" opacity="0.9"/><circle cx="22.1" cy="19.9" r="0.5" fill="#1a1a1a" opacity="0.5"/><circle cx="13.8" cy="21.8" r="0.6" fill="#1a1a1a" opacity="0.9"/><circle cx="14.4" cy="20.9" r="0.5" fill="#1a1a1a" opacity="0.7"/><circle cx="21.4" cy="22.1" r="0.6" fill="#1a1a1a" opacity="0.5"/><circle cx="14.4" cy="14.0" r="0.6" fill="#1a1a1a" opacity="0.9"/><circle cx="11.6" cy="6.9" r="0.4" fill="#1a1a1a" opacity="0.9"/><circle cx="17.5" cy="13.3" r="0.6" fill="#1a1a1a" opacity="0.9"/><circle cx="10.2" cy="31.0" r="0.6" fill="#1a1a1a" opacity="0.7"/><circle cx="20.2" cy="15.6" r="0.5" fill="#1a1a1a" opacity="0.9"/><circle cx="6.9" cy="7.3" r="0.45" fill="#1a1a1a" opacity="0.7"/><circle cx="17.0" cy="16.4" r="0.5" fill="#1a1a1a" opacity="0.7"/><circle cx="23.5" cy="13.0" r="0.5" fill="#1a1a1a" opacity="0.5"/><circle cx="13.0" cy="15.9" r="0.8" fill="#1a1a1a" opacity="0.7"/><circle cx="11.2" cy="3.7" r="0.8" fill="#1a1a1a" opacity="0.9"/><circle cx="22.4" cy="21.4" r="0.4" fill="#1a1a1a" opacity="0.7"/><circle cx="22.4" cy="25.8" r="0.4" fill="#1a1a1a" opacity="0.9"/><circle cx="18.3" cy="17.0" r="0.6" fill="#1a1a1a" opacity="0.5"/><circle cx="8" cy="5" r="0.9" fill="#000"/><circle cx="16" cy="3" r="0.9" fill="#000"/><circle cx="22" cy="7" r="0.9" fill="#000"/><circle cx="12" cy="10" r="0.9" fill="#000"/><circle cx="20" cy="13" r="0.9" fill="#000"/></svg>
<div class="t" style="left:41px;top:98px;font-size:11.2px;color:#e2e2e2">Change Segment</div>
<svg style="left:3px;top:123px" width="32" height="32" viewBox="0 0 32 32"><rect width="32" height="32" fill="#cacaca"/><circle cx="16.6" cy="25.0" r="0.5" fill="#1a1a1a" opacity="0.9"/><circle cx="8.2" cy="16.7" r="0.8" fill="#1a1a1a" opacity="0.5"/><circle cx="21.7" cy="10.1" r="0.8" fill="#1a1a1a" opacity="0.5"/><circle cx="19.4" cy="26.9" r="0.8" fill="#1a1a1a" opacity="0.9"/><circle cx="7.5" cy="16.7" r="0.45" fill="#1a1a1a" opacity="0.5"/><circle cx="8.0" cy="2.9" r="0.8" fill="#1a1a1a" opacity="0.7"/><circle cx="15.5" cy="3.1" r="0.4" fill="#1a1a1a" opacity="0.5"/><circle cx="16.4" cy="4.3" r="0.5" fill="#1a1a1a" opacity="0.5"/><circle cx="18.1" cy="9.3" r="0.8" fill="#1a1a1a" opacity="0.9"/><circle cx="21.2" cy="11.2" r="0.6" fill="#1a1a1a" opacity="0.7"/><circle cx="14.9" cy="4.6" r="0.45" fill="#1a1a1a" opacity="0.7"/><circle cx="18.7" cy="17.5" r="0.45" fill="#1a1a1a" opacity="0.7"/><circle cx="22.3" cy="13.2" r="0.5" fill="#1a1a1a" opacity="0.7"/><circle cx="10.1" cy="14.6" r="0.5" fill="#1a1a1a" opacity="0.9"/><circle cx="9.2" cy="9.6" r="0.5" fill="#1a1a1a" opacity="0.9"/><circle cx="17.2" cy="14.0" r="0.5" fill="#1a1a1a" opacity="0.9"/><circle cx="14.3" cy="10.8" r="0.5" fill="#1a1a1a" opacity="0.9"/><circle cx="22.4" cy="9.1" r="0.45" fill="#1a1a1a" opacity="0.9"/><circle cx="19.8" cy="5.9" r="0.5" fill="#1a1a1a" opacity="0.5"/><circle cx="26.8" cy="21.1" r="0.6" fill="#1a1a1a" opacity="0.5"/><circle cx="14.8" cy="17.5" r="0.45" fill="#1a1a1a" opacity="0.5"/><circle cx="13.2" cy="28.2" r="0.4" fill="#1a1a1a" opacity="0.5"/><circle cx="8.0" cy="6.7" r="0.6" fill="#1a1a1a" opacity="0.9"/><circle cx="9.5" cy="9.8" r="0.5" fill="#1a1a1a" opacity="0.9"/><circle cx="16.1" cy="17.2" r="0.4" fill="#1a1a1a" opacity="0.5"/><circle cx="21.8" cy="21.2" r="0.45" fill="#1a1a1a" opacity="0.7"/><circle cx="14.8" cy="21.0" r="0.4" fill="#1a1a1a" opacity="0.7"/><circle cx="10.1" cy="31.0" r="0.6" fill="#1a1a1a" opacity="0.7"/><circle cx="9.0" cy="17.4" r="0.8" fill="#1a1a1a" opacity="0.9"/><circle cx="8.2" cy="11.0" r="0.8" fill="#1a1a1a" opacity="0.7"/><circle cx="7.3" cy="20.4" r="0.45" fill="#1a1a1a" opacity="0.7"/><circle cx="11.7" cy="17.4" r="0.5" fill="#1a1a1a" opacity="0.9"/><circle cx="10.4" cy="27.0" r="0.8" fill="#1a1a1a" opacity="0.7"/><circle cx="24.2" cy="16.4" r="0.45" fill="#1a1a1a" opacity="0.5"/><circle cx="12.4" cy="9.6" r="0.5" fill="#1a1a1a" opacity="0.9"/><circle cx="23.1" cy="9.6" r="0.5" fill="#1a1a1a" opacity="0.9"/><circle cx="8.0" cy="15.7" r="0.4" fill="#1a1a1a" opacity="0.7"/><circle cx="16.0" cy="23.8" r="0.8" fill="#1a1a1a" opacity="0.9"/><circle cx="13.6" cy="21.9" r="0.5" fill="#1a1a1a" opacity="0.7"/><circle cx="18.6" cy="9.8" r="0.6" fill="#1a1a1a" opacity="0.5"/><circle cx="16.2" cy="13.1" r="0.8" fill="#1a1a1a" opacity="0.9"/><circle cx="15.5" cy="8.1" r="0.45" fill="#1a1a1a" opacity="0.9"/><circle cx="17.5" cy="9.4" r="0.45" fill="#1a1a1a" opacity="0.9"/><circle cx="7.5" cy="19.9" r="0.4" fill="#1a1a1a" opacity="0.9"/><circle cx="13.6" cy="21.5" r="0.45" fill="#1a1a1a" opacity="0.7"/><circle cx="21.6" cy="1.0" r="0.4" fill="#1a1a1a" opacity="0.7"/><circle cx="15.8" cy="9.4" r="0.8" fill="#1a1a1a" opacity="0.7"/><circle cx="14.6" cy="29.0" r="0.4" fill="#1a1a1a" opacity="0.9"/><circle cx="21.0" cy="13.2" r="0.8" fill="#1a1a1a" opacity="0.5"/><circle cx="19.6" cy="9.5" r="0.4" fill="#1a1a1a" opacity="0.9"/><circle cx="14.2" cy="18.5" r="0.5" fill="#1a1a1a" opacity="0.9"/><circle cx="17.3" cy="8.9" r="0.5" fill="#1a1a1a" opacity="0.9"/><circle cx="10.6" cy="19.2" r="0.6" fill="#1a1a1a" opacity="0.5"/><circle cx="19.1" cy="12.8" r="0.4" fill="#1a1a1a" opacity="0.7"/><circle cx="27.6" cy="9.3" r="0.8" fill="#1a1a1a" opacity="0.7"/><circle cx="1.0" cy="6.6" r="0.45" fill="#1a1a1a" opacity="0.5"/><circle cx="15.7" cy="1.0" r="0.8" fill="#1a1a1a" opacity="0.7"/><circle cx="3.9" cy="10.4" r="0.4" fill="#1a1a1a" opacity="0.9"/><circle cx="19.0" cy="14.3" r="0.45" fill="#1a1a1a" opacity="0.5"/><circle cx="26.6" cy="18.2" r="0.8" fill="#1a1a1a" opacity="0.5"/><circle cx="26.2" cy="4.6" r="0.8" fill="#1a1a1a" opacity="0.5"/><circle cx="25.9" cy="16.1" r="0.45" fill="#1a1a1a" opacity="0.9"/><circle cx="13.3" cy="26.2" r="0.8" fill="#1a1a1a" opacity="0.9"/><circle cx="3.8" cy="24.8" r="0.8" fill="#1a1a1a" opacity="0.5"/><circle cx="13.5" cy="20.1" r="0.8" fill="#1a1a1a" opacity="0.7"/><circle cx="16.8" cy="12.4" r="0.45" fill="#1a1a1a" opacity="0.5"/><circle cx="25.0" cy="26.6" r="0.4" fill="#1a1a1a" opacity="0.5"/><circle cx="16.3" cy="21.4" r="0.45" fill="#1a1a1a" opacity="0.5"/><circle cx="8.2" cy="15.8" r="0.6" fill="#1a1a1a" opacity="0.5"/><circle cx="16.2" cy="9.0" r="0.8" fill="#1a1a1a" opacity="0.9"/><circle cx="14.1" cy="14.7" r="0.5" fill="#1a1a1a" opacity="0.5"/><circle cx="22.5" cy="4.2" r="0.4" fill="#1a1a1a" opacity="0.5"/><circle cx="22.6" cy="17.8" r="0.4" fill="#1a1a1a" opacity="0.9"/><circle cx="22.1" cy="19.9" r="0.5" fill="#1a1a1a" opacity="0.5"/><circle cx="13.8" cy="21.8" r="0.6" fill="#1a1a1a" opacity="0.9"/><circle cx="14.4" cy="20.9" r="0.5" fill="#1a1a1a" opacity="0.7"/><circle cx="21.4" cy="22.1" r="0.6" fill="#1a1a1a" opacity="0.5"/><circle cx="14.4" cy="14.0" r="0.6" fill="#1a1a1a" opacity="0.9"/><circle cx="11.6" cy="6.9" r="0.4" fill="#1a1a1a" opacity="0.9"/><circle cx="17.5" cy="13.3" r="0.6" fill="#1a1a1a" opacity="0.9"/><circle cx="10.2" cy="31.0" r="0.6" fill="#1a1a1a" opacity="0.7"/><circle cx="20.2" cy="15.6" r="0.5" fill="#1a1a1a" opacity="0.9"/><circle cx="6.9" cy="7.3" r="0.45" fill="#1a1a1a" opacity="0.7"/><circle cx="17.0" cy="16.4" r="0.5" fill="#1a1a1a" opacity="0.7"/><circle cx="23.5" cy="13.0" r="0.5" fill="#1a1a1a" opacity="0.5"/><circle cx="13.0" cy="15.9" r="0.8" fill="#1a1a1a" opacity="0.7"/><circle cx="11.2" cy="3.7" r="0.8" fill="#1a1a1a" opacity="0.9"/><circle cx="22.4" cy="21.4" r="0.4" fill="#1a1a1a" opacity="0.7"/><circle cx="22.4" cy="25.8" r="0.4" fill="#1a1a1a" opacity="0.9"/><circle cx="18.3" cy="17.0" r="0.6" fill="#1a1a1a" opacity="0.5"/><circle cx="8" cy="5" r="0.9" fill="#000"/><circle cx="16" cy="3" r="0.9" fill="#000"/><circle cx="22" cy="7" r="0.9" fill="#000"/><circle cx="12" cy="10" r="0.9" fill="#000"/><circle cx="20" cy="13" r="0.9" fill="#000"/></svg>
<div class="t" style="left:41px;top:132px;font-size:11.2px;color:#e2e2e2">Insert points</div>
<svg style="left:3px;top:157px" width="32" height="32" viewBox="0 0 32 32"><rect width="32" height="32" fill="#cacaca"/><circle cx="16.6" cy="25.0" r="0.5" fill="#1a1a1a" opacity="0.9"/><circle cx="8.2" cy="16.7" r="0.8" fill="#1a1a1a" opacity="0.5"/><circle cx="21.7" cy="10.1" r="0.8" fill="#1a1a1a" opacity="0.5"/><circle cx="19.4" cy="26.9" r="0.8" fill="#1a1a1a" opacity="0.9"/><circle cx="7.5" cy="16.7" r="0.45" fill="#1a1a1a" opacity="0.5"/><circle cx="8.0" cy="2.9" r="0.8" fill="#1a1a1a" opacity="0.7"/><circle cx="15.5" cy="3.1" r="0.4" fill="#1a1a1a" opacity="0.5"/><circle cx="16.4" cy="4.3" r="0.5" fill="#1a1a1a" opacity="0.5"/><circle cx="18.1" cy="9.3" r="0.8" fill="#1a1a1a" opacity="0.9"/><circle cx="21.2" cy="11.2" r="0.6" fill="#1a1a1a" opacity="0.7"/><circle cx="14.9" cy="4.6" r="0.45" fill="#1a1a1a" opacity="0.7"/><circle cx="18.7" cy="17.5" r="0.45" fill="#1a1a1a" opacity="0.7"/><circle cx="22.3" cy="13.2" r="0.5" fill="#1a1a1a" opacity="0.7"/><circle cx="10.1" cy="14.6" r="0.5" fill="#1a1a1a" opacity="0.9"/><circle cx="9.2" cy="9.6" r="0.5" fill="#1a1a1a" opacity="0.9"/><circle cx="17.2" cy="14.0" r="0.5" fill="#1a1a1a" opacity="0.9"/><circle cx="14.3" cy="10.8" r="0.5" fill="#1a1a1a" opacity="0.9"/><circle cx="22.4" cy="9.1" r="0.45" fill="#1a1a1a" opacity="0.9"/><circle cx="19.8" cy="5.9" r="0.5" fill="#1a1a1a" opacity="0.5"/><circle cx="26.8" cy="21.1" r="0.6" fill="#1a1a1a" opacity="0.5"/><circle cx="14.8" cy="17.5" r="0.45" fill="#1a1a1a" opacity="0.5"/><circle cx="13.2" cy="28.2" r="0.4" fill="#1a1a1a" opacity="0.5"/><circle cx="8.0" cy="6.7" r="0.6" fill="#1a1a1a" opacity="0.9"/><circle cx="9.5" cy="9.8" r="0.5" fill="#1a1a1a" opacity="0.9"/><circle cx="16.1" cy="17.2" r="0.4" fill="#1a1a1a" opacity="0.5"/><circle cx="21.8" cy="21.2" r="0.45" fill="#1a1a1a" opacity="0.7"/><circle cx="14.8" cy="21.0" r="0.4" fill="#1a1a1a" opacity="0.7"/><circle cx="10.1" cy="31.0" r="0.6" fill="#1a1a1a" opacity="0.7"/><circle cx="9.0" cy="17.4" r="0.8" fill="#1a1a1a" opacity="0.9"/><circle cx="8.2" cy="11.0" r="0.8" fill="#1a1a1a" opacity="0.7"/><circle cx="7.3" cy="20.4" r="0.45" fill="#1a1a1a" opacity="0.7"/><circle cx="11.7" cy="17.4" r="0.5" fill="#1a1a1a" opacity="0.9"/><circle cx="10.4" cy="27.0" r="0.8" fill="#1a1a1a" opacity="0.7"/><circle cx="24.2" cy="16.4" r="0.45" fill="#1a1a1a" opacity="0.5"/><circle cx="12.4" cy="9.6" r="0.5" fill="#1a1a1a" opacity="0.9"/><circle cx="23.1" cy="9.6" r="0.5" fill="#1a1a1a" opacity="0.9"/><circle cx="8.0" cy="15.7" r="0.4" fill="#1a1a1a" opacity="0.7"/><circle cx="16.0" cy="23.8" r="0.8" fill="#1a1a1a" opacity="0.9"/><circle cx="13.6" cy="21.9" r="0.5" fill="#1a1a1a" opacity="0.7"/><circle cx="18.6" cy="9.8" r="0.6" fill="#1a1a1a" opacity="0.5"/><circle cx="16.2" cy="13.1" r="0.8" fill="#1a1a1a" opacity="0.9"/><circle cx="15.5" cy="8.1" r="0.45" fill="#1a1a1a" opacity="0.9"/><circle cx="17.5" cy="9.4" r="0.45" fill="#1a1a1a" opacity="0.9"/><circle cx="7.5" cy="19.9" r="0.4" fill="#1a1a1a" opacity="0.9"/><circle cx="13.6" cy="21.5" r="0.45" fill="#1a1a1a" opacity="0.7"/><circle cx="21.6" cy="1.0" r="0.4" fill="#1a1a1a" opacity="0.7"/><circle cx="15.8" cy="9.4" r="0.8" fill="#1a1a1a" opacity="0.7"/><circle cx="14.6" cy="29.0" r="0.4" fill="#1a1a1a" opacity="0.9"/><circle cx="21.0" cy="13.2" r="0.8" fill="#1a1a1a" opacity="0.5"/><circle cx="19.6" cy="9.5" r="0.4" fill="#1a1a1a" opacity="0.9"/><circle cx="14.2" cy="18.5" r="0.5" fill="#1a1a1a" opacity="0.9"/><circle cx="17.3" cy="8.9" r="0.5" fill="#1a1a1a" opacity="0.9"/><circle cx="10.6" cy="19.2" r="0.6" fill="#1a1a1a" opacity="0.5"/><circle cx="19.1" cy="12.8" r="0.4" fill="#1a1a1a" opacity="0.7"/><circle cx="27.6" cy="9.3" r="0.8" fill="#1a1a1a" opacity="0.7"/><circle cx="1.0" cy="6.6" r="0.45" fill="#1a1a1a" opacity="0.5"/><circle cx="15.7" cy="1.0" r="0.8" fill="#1a1a1a" opacity="0.7"/><circle cx="3.9" cy="10.4" r="0.4" fill="#1a1a1a" opacity="0.9"/><circle cx="19.0" cy="14.3" r="0.45" fill="#1a1a1a" opacity="0.5"/><circle cx="26.6" cy="18.2" r="0.8" fill="#1a1a1a" opacity="0.5"/><circle cx="26.2" cy="4.6" r="0.8" fill="#1a1a1a" opacity="0.5"/><circle cx="25.9" cy="16.1" r="0.45" fill="#1a1a1a" opacity="0.9"/><circle cx="13.3" cy="26.2" r="0.8" fill="#1a1a1a" opacity="0.9"/><circle cx="3.8" cy="24.8" r="0.8" fill="#1a1a1a" opacity="0.5"/><circle cx="13.5" cy="20.1" r="0.8" fill="#1a1a1a" opacity="0.7"/><circle cx="16.8" cy="12.4" r="0.45" fill="#1a1a1a" opacity="0.5"/><circle cx="25.0" cy="26.6" r="0.4" fill="#1a1a1a" opacity="0.5"/><circle cx="16.3" cy="21.4" r="0.45" fill="#1a1a1a" opacity="0.5"/><circle cx="8.2" cy="15.8" r="0.6" fill="#1a1a1a" opacity="0.5"/><circle cx="16.2" cy="9.0" r="0.8" fill="#1a1a1a" opacity="0.9"/><circle cx="14.1" cy="14.7" r="0.5" fill="#1a1a1a" opacity="0.5"/><circle cx="22.5" cy="4.2" r="0.4" fill="#1a1a1a" opacity="0.5"/><circle cx="22.6" cy="17.8" r="0.4" fill="#1a1a1a" opacity="0.9"/><circle cx="22.1" cy="19.9" r="0.5" fill="#1a1a1a" opacity="0.5"/><circle cx="13.8" cy="21.8" r="0.6" fill="#1a1a1a" opacity="0.9"/><circle cx="14.4" cy="20.9" r="0.5" fill="#1a1a1a" opacity="0.7"/><circle cx="21.4" cy="22.1" r="0.6" fill="#1a1a1a" opacity="0.5"/><circle cx="14.4" cy="14.0" r="0.6" fill="#1a1a1a" opacity="0.9"/><circle cx="11.6" cy="6.9" r="0.4" fill="#1a1a1a" opacity="0.9"/><circle cx="17.5" cy="13.3" r="0.6" fill="#1a1a1a" opacity="0.9"/><circle cx="10.2" cy="31.0" r="0.6" fill="#1a1a1a" opacity="0.7"/><circle cx="20.2" cy="15.6" r="0.5" fill="#1a1a1a" opacity="0.9"/><circle cx="6.9" cy="7.3" r="0.45" fill="#1a1a1a" opacity="0.7"/><circle cx="17.0" cy="16.4" r="0.5" fill="#1a1a1a" opacity="0.7"/><circle cx="23.5" cy="13.0" r="0.5" fill="#1a1a1a" opacity="0.5"/><circle cx="13.0" cy="15.9" r="0.8" fill="#1a1a1a" opacity="0.7"/><circle cx="11.2" cy="3.7" r="0.8" fill="#1a1a1a" opacity="0.9"/><circle cx="22.4" cy="21.4" r="0.4" fill="#1a1a1a" opacity="0.7"/><circle cx="22.4" cy="25.8" r="0.4" fill="#1a1a1a" opacity="0.9"/><circle cx="18.3" cy="17.0" r="0.6" fill="#1a1a1a" opacity="0.5"/><circle cx="8" cy="5" r="0.9" fill="#000"/><circle cx="16" cy="3" r="0.9" fill="#000"/><circle cx="22" cy="7" r="0.9" fill="#000"/><circle cx="12" cy="10" r="0.9" fill="#000"/><circle cx="20" cy="13" r="0.9" fill="#000"/></svg>
<div class="t" style="left:41px;top:166px;font-size:11.2px;color:#e2e2e2">Move points</div>
<svg style="left:3px;top:191px" width="32" height="32" viewBox="0 0 32 32"><rect width="32" height="32" fill="#cacaca"/><circle cx="16.6" cy="25.0" r="0.5" fill="#1a1a1a" opacity="0.9"/><circle cx="8.2" cy="16.7" r="0.8" fill="#1a1a1a" opacity="0.5"/><circle cx="21.7" cy="10.1" r="0.8" fill="#1a1a1a" opacity="0.5"/><circle cx="19.4" cy="26.9" r="0.8" fill="#1a1a1a" opacity="0.9"/><circle cx="7.5" cy="16.7" r="0.45" fill="#1a1a1a" opacity="0.5"/><circle cx="8.0" cy="2.9" r="0.8" fill="#1a1a1a" opacity="0.7"/><circle cx="15.5" cy="3.1" r="0.4" fill="#1a1a1a" opacity="0.5"/><circle cx="16.4" cy="4.3" r="0.5" fill="#1a1a1a" opacity="0.5"/><circle cx="18.1" cy="9.3" r="0.8" fill="#1a1a1a" opacity="0.9"/><circle cx="21.2" cy="11.2" r="0.6" fill="#1a1a1a" opacity="0.7"/><circle cx="14.9" cy="4.6" r="0.45" fill="#1a1a1a" opacity="0.7"/><circle cx="18.7" cy="17.5" r="0.45" fill="#1a1a1a" opacity="0.7"/><circle cx="22.3" cy="13.2" r="0.5" fill="#1a1a1a" opacity="0.7"/><circle cx="10.1" cy="14.6" r="0.5" fill="#1a1a1a" opacity="0.9"/><circle cx="9.2" cy="9.6" r="0.5" fill="#1a1a1a" opacity="0.9"/><circle cx="17.2" cy="14.0" r="0.5" fill="#1a1a1a" opacity="0.9"/><circle cx="14.3" cy="10.8" r="0.5" fill="#1a1a1a" opacity="0.9"/><circle cx="22.4" cy="9.1" r="0.45" fill="#1a1a1a" opacity="0.9"/><circle cx="19.8" cy="5.9" r="0.5" fill="#1a1a1a" opacity="0.5"/><circle cx="26.8" cy="21.1" r="0.6" fill="#1a1a1a" opacity="0.5"/><circle cx="14.8" cy="17.5" r="0.45" fill="#1a1a1a" opacity="0.5"/><circle cx="13.2" cy="28.2" r="0.4" fill="#1a1a1a" opacity="0.5"/><circle cx="8.0" cy="6.7" r="0.6" fill="#1a1a1a" opacity="0.9"/><circle cx="9.5" cy="9.8" r="0.5" fill="#1a1a1a" opacity="0.9"/><circle cx="16.1" cy="17.2" r="0.4" fill="#1a1a1a" opacity="0.5"/><circle cx="21.8" cy="21.2" r="0.45" fill="#1a1a1a" opacity="0.7"/><circle cx="14.8" cy="21.0" r="0.4" fill="#1a1a1a" opacity="0.7"/><circle cx="10.1" cy="31.0" r="0.6" fill="#1a1a1a" opacity="0.7"/><circle cx="9.0" cy="17.4" r="0.8" fill="#1a1a1a" opacity="0.9"/><circle cx="8.2" cy="11.0" r="0.8" fill="#1a1a1a" opacity="0.7"/><circle cx="7.3" cy="20.4" r="0.45" fill="#1a1a1a" opacity="0.7"/><circle cx="11.7" cy="17.4" r="0.5" fill="#1a1a1a" opacity="0.9"/><circle cx="10.4" cy="27.0" r="0.8" fill="#1a1a1a" opacity="0.7"/><circle cx="24.2" cy="16.4" r="0.45" fill="#1a1a1a" opacity="0.5"/><circle cx="12.4" cy="9.6" r="0.5" fill="#1a1a1a" opacity="0.9"/><circle cx="23.1" cy="9.6" r="0.5" fill="#1a1a1a" opacity="0.9"/><circle cx="8.0" cy="15.7" r="0.4" fill="#1a1a1a" opacity="0.7"/><circle cx="16.0" cy="23.8" r="0.8" fill="#1a1a1a" opacity="0.9"/><circle cx="13.6" cy="21.9" r="0.5" fill="#1a1a1a" opacity="0.7"/><circle cx="18.6" cy="9.8" r="0.6" fill="#1a1a1a" opacity="0.5"/><circle cx="16.2" cy="13.1" r="0.8" fill="#1a1a1a" opacity="0.9"/><circle cx="15.5" cy="8.1" r="0.45" fill="#1a1a1a" opacity="0.9"/><circle cx="17.5" cy="9.4" r="0.45" fill="#1a1a1a" opacity="0.9"/><circle cx="7.5" cy="19.9" r="0.4" fill="#1a1a1a" opacity="0.9"/><circle cx="13.6" cy="21.5" r="0.45" fill="#1a1a1a" opacity="0.7"/><circle cx="21.6" cy="1.0" r="0.4" fill="#1a1a1a" opacity="0.7"/><circle cx="15.8" cy="9.4" r="0.8" fill="#1a1a1a" opacity="0.7"/><circle cx="14.6" cy="29.0" r="0.4" fill="#1a1a1a" opacity="0.9"/><circle cx="21.0" cy="13.2" r="0.8" fill="#1a1a1a" opacity="0.5"/><circle cx="19.6" cy="9.5" r="0.4" fill="#1a1a1a" opacity="0.9"/><circle cx="14.2" cy="18.5" r="0.5" fill="#1a1a1a" opacity="0.9"/><circle cx="17.3" cy="8.9" r="0.5" fill="#1a1a1a" opacity="0.9"/><circle cx="10.6" cy="19.2" r="0.6" fill="#1a1a1a" opacity="0.5"/><circle cx="19.1" cy="12.8" r="0.4" fill="#1a1a1a" opacity="0.7"/><circle cx="27.6" cy="9.3" r="0.8" fill="#1a1a1a" opacity="0.7"/><circle cx="1.0" cy="6.6" r="0.45" fill="#1a1a1a" opacity="0.5"/><circle cx="15.7" cy="1.0" r="0.8" fill="#1a1a1a" opacity="0.7"/><circle cx="3.9" cy="10.4" r="0.4" fill="#1a1a1a" opacity="0.9"/><circle cx="19.0" cy="14.3" r="0.45" fill="#1a1a1a" opacity="0.5"/><circle cx="26.6" cy="18.2" r="0.8" fill="#1a1a1a" opacity="0.5"/><circle cx="26.2" cy="4.6" r="0.8" fill="#1a1a1a" opacity="0.5"/><circle cx="25.9" cy="16.1" r="0.45" fill="#1a1a1a" opacity="0.9"/><circle cx="13.3" cy="26.2" r="0.8" fill="#1a1a1a" opacity="0.9"/><circle cx="3.8" cy="24.8" r="0.8" fill="#1a1a1a" opacity="0.5"/><circle cx="13.5" cy="20.1" r="0.8" fill="#1a1a1a" opacity="0.7"/><circle cx="16.8" cy="12.4" r="0.45" fill="#1a1a1a" opacity="0.5"/><circle cx="25.0" cy="26.6" r="0.4" fill="#1a1a1a" opacity="0.5"/><circle cx="16.3" cy="21.4" r="0.45" fill="#1a1a1a" opacity="0.5"/><circle cx="8.2" cy="15.8" r="0.6" fill="#1a1a1a" opacity="0.5"/><circle cx="16.2" cy="9.0" r="0.8" fill="#1a1a1a" opacity="0.9"/><circle cx="14.1" cy="14.7" r="0.5" fill="#1a1a1a" opacity="0.5"/><circle cx="22.5" cy="4.2" r="0.4" fill="#1a1a1a" opacity="0.5"/><circle cx="22.6" cy="17.8" r="0.4" fill="#1a1a1a" opacity="0.9"/><circle cx="22.1" cy="19.9" r="0.5" fill="#1a1a1a" opacity="0.5"/><circle cx="13.8" cy="21.8" r="0.6" fill="#1a1a1a" opacity="0.9"/><circle cx="14.4" cy="20.9" r="0.5" fill="#1a1a1a" opacity="0.7"/><circle cx="21.4" cy="22.1" r="0.6" fill="#1a1a1a" opacity="0.5"/><circle cx="14.4" cy="14.0" r="0.6" fill="#1a1a1a" opacity="0.9"/><circle cx="11.6" cy="6.9" r="0.4" fill="#1a1a1a" opacity="0.9"/><circle cx="17.5" cy="13.3" r="0.6" fill="#1a1a1a" opacity="0.9"/><circle cx="10.2" cy="31.0" r="0.6" fill="#1a1a1a" opacity="0.7"/><circle cx="20.2" cy="15.6" r="0.5" fill="#1a1a1a" opacity="0.9"/><circle cx="6.9" cy="7.3" r="0.45" fill="#1a1a1a" opacity="0.7"/><circle cx="17.0" cy="16.4" r="0.5" fill="#1a1a1a" opacity="0.7"/><circle cx="23.5" cy="13.0" r="0.5" fill="#1a1a1a" opacity="0.5"/><circle cx="13.0" cy="15.9" r="0.8" fill="#1a1a1a" opacity="0.7"/><circle cx="11.2" cy="3.7" r="0.8" fill="#1a1a1a" opacity="0.9"/><circle cx="22.4" cy="21.4" r="0.4" fill="#1a1a1a" opacity="0.7"/><circle cx="22.4" cy="25.8" r="0.4" fill="#1a1a1a" opacity="0.9"/><circle cx="18.3" cy="17.0" r="0.6" fill="#1a1a1a" opacity="0.5"/><circle cx="8" cy="5" r="0.9" fill="#000"/><circle cx="16" cy="3" r="0.9" fill="#000"/><circle cx="22" cy="7" r="0.9" fill="#000"/><circle cx="12" cy="10" r="0.9" fill="#000"/><circle cx="20" cy="13" r="0.9" fill="#000"/></svg>
<div class="t" style="left:41px;top:200px;font-size:11.2px;color:#e2e2e2">Move points</div>
<svg style="left:3px;top:225px" width="32" height="32" viewBox="0 0 32 32"><rect width="32" height="32" fill="#b4c0cc"/><circle cx="16.6" cy="25.0" r="0.5" fill="#1a1a1a" opacity="0.9"/><circle cx="8.2" cy="16.7" r="0.8" fill="#1a1a1a" opacity="0.5"/><circle cx="21.7" cy="10.1" r="0.8" fill="#1a1a1a" opacity="0.5"/><circle cx="19.4" cy="26.9" r="0.8" fill="#1a1a1a" opacity="0.9"/><circle cx="7.5" cy="16.7" r="0.45" fill="#1a1a1a" opacity="0.5"/><circle cx="8.0" cy="2.9" r="0.8" fill="#1a1a1a" opacity="0.7"/><circle cx="15.5" cy="3.1" r="0.4" fill="#1a1a1a" opacity="0.5"/><circle cx="16.4" cy="4.3" r="0.5" fill="#1a1a1a" opacity="0.5"/><circle cx="18.1" cy="9.3" r="0.8" fill="#1a1a1a" opacity="0.9"/><circle cx="21.2" cy="11.2" r="0.6" fill="#1a1a1a" opacity="0.7"/><circle cx="14.9" cy="4.6" r="0.45" fill="#1a1a1a" opacity="0.7"/><circle cx="18.7" cy="17.5" r="0.45" fill="#1a1a1a" opacity="0.7"/><circle cx="22.3" cy="13.2" r="0.5" fill="#1a1a1a" opacity="0.7"/><circle cx="10.1" cy="14.6" r="0.5" fill="#1a1a1a" opacity="0.9"/><circle cx="9.2" cy="9.6" r="0.5" fill="#1a1a1a" opacity="0.9"/><circle cx="17.2" cy="14.0" r="0.5" fill="#1a1a1a" opacity="0.9"/><circle cx="14.3" cy="10.8" r="0.5" fill="#1a1a1a" opacity="0.9"/><circle cx="22.4" cy="9.1" r="0.45" fill="#1a1a1a" opacity="0.9"/><circle cx="19.8" cy="5.9" r="0.5" fill="#1a1a1a" opacity="0.5"/><circle cx="26.8" cy="21.1" r="0.6" fill="#1a1a1a" opacity="0.5"/><circle cx="14.8" cy="17.5" r="0.45" fill="#1a1a1a" opacity="0.5"/><circle cx="13.2" cy="28.2" r="0.4" fill="#1a1a1a" opacity="0.5"/><circle cx="8.0" cy="6.7" r="0.6" fill="#1a1a1a" opacity="0.9"/><circle cx="9.5" cy="9.8" r="0.5" fill="#1a1a1a" opacity="0.9"/><circle cx="16.1" cy="17.2" r="0.4" fill="#1a1a1a" opacity="0.5"/><circle cx="21.8" cy="21.2" r="0.45" fill="#1a1a1a" opacity="0.7"/><circle cx="14.8" cy="21.0" r="0.4" fill="#1a1a1a" opacity="0.7"/><circle cx="10.1" cy="31.0" r="0.6" fill="#1a1a1a" opacity="0.7"/><circle cx="9.0" cy="17.4" r="0.8" fill="#1a1a1a" opacity="0.9"/><circle cx="8.2" cy="11.0" r="0.8" fill="#1a1a1a" opacity="0.7"/><circle cx="7.3" cy="20.4" r="0.45" fill="#1a1a1a" opacity="0.7"/><circle cx="11.7" cy="17.4" r="0.5" fill="#1a1a1a" opacity="0.9"/><circle cx="10.4" cy="27.0" r="0.8" fill="#1a1a1a" opacity="0.7"/><circle cx="24.2" cy="16.4" r="0.45" fill="#1a1a1a" opacity="0.5"/><circle cx="12.4" cy="9.6" r="0.5" fill="#1a1a1a" opacity="0.9"/><circle cx="23.1" cy="9.6" r="0.5" fill="#1a1a1a" opacity="0.9"/><circle cx="8.0" cy="15.7" r="0.4" fill="#1a1a1a" opacity="0.7"/><circle cx="16.0" cy="23.8" r="0.8" fill="#1a1a1a" opacity="0.9"/><circle cx="13.6" cy="21.9" r="0.5" fill="#1a1a1a" opacity="0.7"/><circle cx="18.6" cy="9.8" r="0.6" fill="#1a1a1a" opacity="0.5"/><circle cx="16.2" cy="13.1" r="0.8" fill="#1a1a1a" opacity="0.9"/><circle cx="15.5" cy="8.1" r="0.45" fill="#1a1a1a" opacity="0.9"/><circle cx="17.5" cy="9.4" r="0.45" fill="#1a1a1a" opacity="0.9"/><circle cx="7.5" cy="19.9" r="0.4" fill="#1a1a1a" opacity="0.9"/><circle cx="13.6" cy="21.5" r="0.45" fill="#1a1a1a" opacity="0.7"/><circle cx="21.6" cy="1.0" r="0.4" fill="#1a1a1a" opacity="0.7"/><circle cx="15.8" cy="9.4" r="0.8" fill="#1a1a1a" opacity="0.7"/><circle cx="14.6" cy="29.0" r="0.4" fill="#1a1a1a" opacity="0.9"/><circle cx="21.0" cy="13.2" r="0.8" fill="#1a1a1a" opacity="0.5"/><circle cx="19.6" cy="9.5" r="0.4" fill="#1a1a1a" opacity="0.9"/><circle cx="14.2" cy="18.5" r="0.5" fill="#1a1a1a" opacity="0.9"/><circle cx="17.3" cy="8.9" r="0.5" fill="#1a1a1a" opacity="0.9"/><circle cx="10.6" cy="19.2" r="0.6" fill="#1a1a1a" opacity="0.5"/><circle cx="19.1" cy="12.8" r="0.4" fill="#1a1a1a" opacity="0.7"/><circle cx="27.6" cy="9.3" r="0.8" fill="#1a1a1a" opacity="0.7"/><circle cx="1.0" cy="6.6" r="0.45" fill="#1a1a1a" opacity="0.5"/><circle cx="15.7" cy="1.0" r="0.8" fill="#1a1a1a" opacity="0.7"/><circle cx="3.9" cy="10.4" r="0.4" fill="#1a1a1a" opacity="0.9"/><circle cx="19.0" cy="14.3" r="0.45" fill="#1a1a1a" opacity="0.5"/><circle cx="26.6" cy="18.2" r="0.8" fill="#1a1a1a" opacity="0.5"/><circle cx="26.2" cy="4.6" r="0.8" fill="#1a1a1a" opacity="0.5"/><circle cx="25.9" cy="16.1" r="0.45" fill="#1a1a1a" opacity="0.9"/><circle cx="13.3" cy="26.2" r="0.8" fill="#1a1a1a" opacity="0.9"/><circle cx="3.8" cy="24.8" r="0.8" fill="#1a1a1a" opacity="0.5"/><circle cx="13.5" cy="20.1" r="0.8" fill="#1a1a1a" opacity="0.7"/><circle cx="16.8" cy="12.4" r="0.45" fill="#1a1a1a" opacity="0.5"/><circle cx="25.0" cy="26.6" r="0.4" fill="#1a1a1a" opacity="0.5"/><circle cx="16.3" cy="21.4" r="0.45" fill="#1a1a1a" opacity="0.5"/><circle cx="8.2" cy="15.8" r="0.6" fill="#1a1a1a" opacity="0.5"/><circle cx="16.2" cy="9.0" r="0.8" fill="#1a1a1a" opacity="0.9"/><circle cx="14.1" cy="14.7" r="0.5" fill="#1a1a1a" opacity="0.5"/><circle cx="22.5" cy="4.2" r="0.4" fill="#1a1a1a" opacity="0.5"/><circle cx="22.6" cy="17.8" r="0.4" fill="#1a1a1a" opacity="0.9"/><circle cx="22.1" cy="19.9" r="0.5" fill="#1a1a1a" opacity="0.5"/><circle cx="13.8" cy="21.8" r="0.6" fill="#1a1a1a" opacity="0.9"/><circle cx="14.4" cy="20.9" r="0.5" fill="#1a1a1a" opacity="0.7"/><circle cx="21.4" cy="22.1" r="0.6" fill="#1a1a1a" opacity="0.5"/><circle cx="14.4" cy="14.0" r="0.6" fill="#1a1a1a" opacity="0.9"/><circle cx="11.6" cy="6.9" r="0.4" fill="#1a1a1a" opacity="0.9"/><circle cx="17.5" cy="13.3" r="0.6" fill="#1a1a1a" opacity="0.9"/><circle cx="10.2" cy="31.0" r="0.6" fill="#1a1a1a" opacity="0.7"/><circle cx="20.2" cy="15.6" r="0.5" fill="#1a1a1a" opacity="0.9"/><circle cx="6.9" cy="7.3" r="0.45" fill="#1a1a1a" opacity="0.7"/><circle cx="17.0" cy="16.4" r="0.5" fill="#1a1a1a" opacity="0.7"/><circle cx="23.5" cy="13.0" r="0.5" fill="#1a1a1a" opacity="0.5"/><circle cx="13.0" cy="15.9" r="0.8" fill="#1a1a1a" opacity="0.7"/><circle cx="11.2" cy="3.7" r="0.8" fill="#1a1a1a" opacity="0.9"/><circle cx="22.4" cy="21.4" r="0.4" fill="#1a1a1a" opacity="0.7"/><circle cx="22.4" cy="25.8" r="0.4" fill="#1a1a1a" opacity="0.9"/><circle cx="18.3" cy="17.0" r="0.6" fill="#1a1a1a" opacity="0.5"/><circle cx="8" cy="5" r="0.9" fill="#000"/><circle cx="16" cy="3" r="0.9" fill="#000"/><circle cx="22" cy="7" r="0.9" fill="#000"/><circle cx="12" cy="10" r="0.9" fill="#000"/><circle cx="20" cy="13" r="0.9" fill="#000"/></svg>
<div class="t" style="left:41px;top:234px;font-size:11.2px;color:#f4f4f4">Remove points</div>
</div>
<div class="a" style="left:1342px;top:469px;width:14px;height:259px;background:#3d3d3d"></div>
<div class="a" style="left:1343px;top:470px;width:12px;height:12px;border:1px solid #4e4e4e;background:#434343"></div>
<svg style="left:1346px;top:474px" width="7" height="4" viewBox="0 0 7 4"><path d="M0 4 L7 4 L3.5 0Z" fill="#bdbdbd"/></svg>
<div class="a" style="left:1343px;top:714px;width:12px;height:13px;border:1px solid #4e4e4e;background:#434343"></div>
<svg style="left:1346px;top:719px" width="7" height="4" viewBox="0 0 7 4"><path d="M0 0 L7 0 L3.5 4Z" fill="#bdbdbd"/></svg>
<div class="a" style="left:1343px;top:690px;width:12px;height:24px;border:1px solid #555;border-radius:2px;background:#454545"></div>
<!--/RIGHT-->

<!--STATUS-->
<div class="t" style="left:270px;top:737px;font-size:12px;color:#e0e0e0">RGB/Alpha (8-bit integer/cha…l)&nbsp; sRGB-elle-V2-srgbtrc.icc</div>
<div class="a" style="left:884px;top:732px;width:141px;height:22px;border:1px solid #3a3a3a;border-radius:2px;background:#434343"></div>
<div class="t" style="left:887px;top:737px;font-size:11.5px;color:#e0e0e0">3,334 <u style="text-decoration:none;border-bottom:1px solid #ccc">x</u> 4,954 (161.5 MiB)</div>
<div class="a" style="left:1032px;top:733px;width:20px;height:20px;border-radius:50%;background:#2c2c2c"></div>
<svg style="left:1035px;top:739px" width="14" height="8" viewBox="0 0 14 8"><path d="M1 4 H13" stroke="#ddd" stroke-width="1"/><path d="M0 4 L3 1.5 V6.5Z M14 4 L11 1.5 V6.5Z" fill="#ddd"/></svg>
<div class="t" style="left:1059px;top:737px;font-size:12.3px;color:#e0e0e0">0.00°</div>
<div class="t" style="left:1199px;top:737px;font-size:11.5px;color:#e0e0e0">16.7%</div>
<div class="a" style="left:1251px;top:742px;width:81px;height:3px;border-radius:2px;background:#2e2e2e"></div>
<div class="a" style="left:1251px;top:742px;width:12px;height:3px;background:#bdbdbd"></div>
<div class="a" style="left:1262px;top:737px;width:10px;height:12px;border-radius:2px;background:#5a5a5a;border:1px solid #777"></div>
<svg style="left:1336px;top:735px" width="18" height="16" viewBox="0 0 18 16"><rect x="1" y="1" width="15" height="10" stroke="#d9d9d9" fill="none" stroke-width="1.3"/><path d="M8.5 11 V14 M4 14.5 H13" stroke="#d9d9d9" fill="none" stroke-width="1.3"/><rect x="7.5" y="5" width="2" height="2" fill="#d9d9d9"/></svg>
<!--/STATUS-->

</body></html>
